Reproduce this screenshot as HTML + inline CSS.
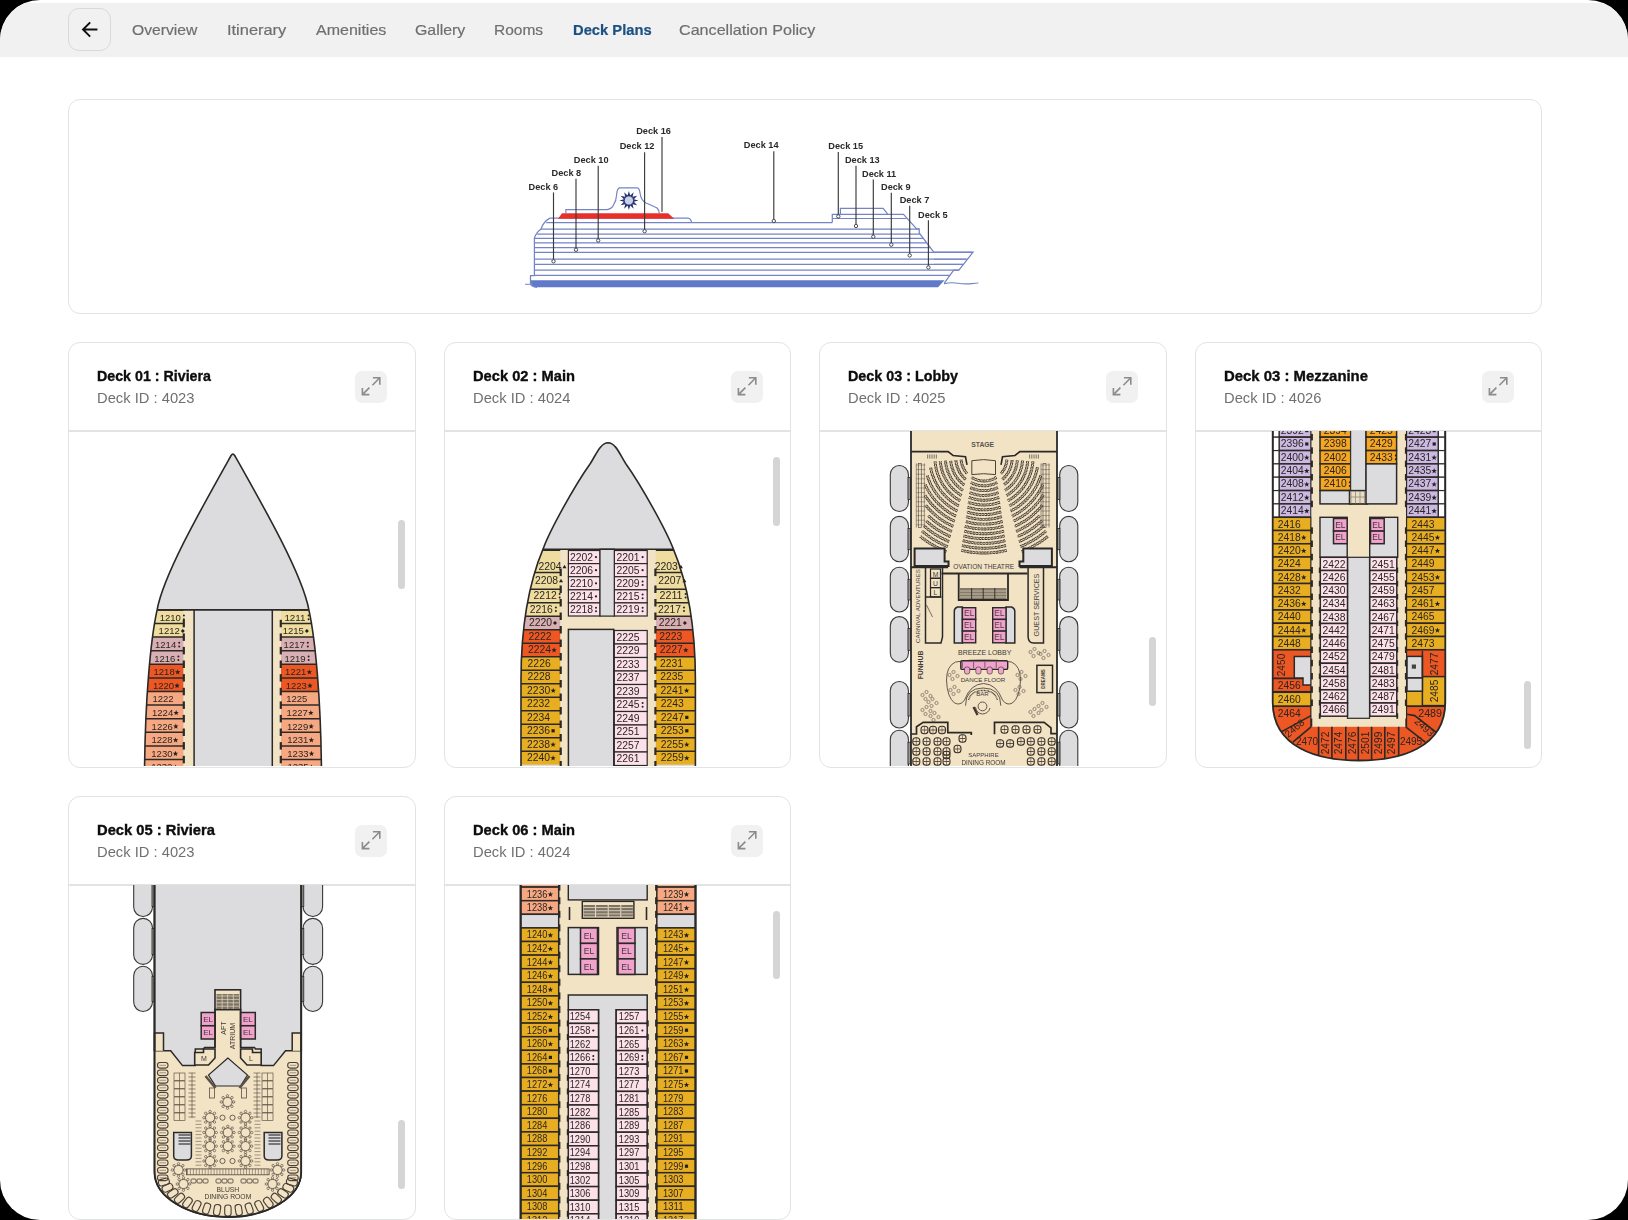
<!DOCTYPE html><html><head><meta charset="utf-8"><style>
html,body{margin:0;padding:0;background:#000;width:1628px;height:1220px;overflow:hidden}
#pg{position:absolute;left:0;top:0;width:1628px;height:1220px;background:#fff;border-radius:40px;overflow:hidden;font-family:"Liberation Sans",sans-serif}
.t{position:absolute;white-space:nowrap;line-height:1;transform-origin:0 0}
.card{position:absolute;box-sizing:border-box;border:1.5px solid #e2e3e3;border-radius:12px;background:#fff;overflow:hidden}
.hdr{position:absolute;left:0;top:0;width:1628px;height:54px;top:3px;background:#f1f1f1}
.btn{position:absolute;box-sizing:border-box;left:68px;top:8px;width:43px;height:43px;border:1.3px solid #d9d9d9;border-radius:11px}
.exp{position:absolute;width:32px;height:32px;border-radius:7px;background:#f1f1f1}
svg{position:absolute;left:0;top:0;font-family:"Liberation Sans",sans-serif}
</style></head><body><div id="pg">

<div class="hdr"></div>
<div class="btn"><svg width="43" height="43" viewBox="0 0 43 43"><path d="M27.5 20.5H14.5M20.5 14L14 20.5L20.5 27" fill="none" stroke="#111" stroke-width="1.9" stroke-linecap="square"/></svg></div>
<div class="t" style="left:132.4px;top:21.6px;font-size:15px;font-weight:400;color:#6f6f6f;transform:scaleX(1.0462);-webkit-text-stroke:0.2px #6f6f6f;">Overview</div>
<div class="t" style="left:226.9px;top:21.6px;font-size:15px;font-weight:400;color:#6f6f6f;transform:scaleX(1.0944);-webkit-text-stroke:0.2px #6f6f6f;">Itinerary</div>
<div class="t" style="left:316.0px;top:21.6px;font-size:15px;font-weight:400;color:#6f6f6f;transform:scaleX(1.0674);-webkit-text-stroke:0.2px #6f6f6f;">Amenities</div>
<div class="t" style="left:415.3px;top:21.6px;font-size:15px;font-weight:400;color:#6f6f6f;transform:scaleX(1.0587);-webkit-text-stroke:0.2px #6f6f6f;">Gallery</div>
<div class="t" style="left:494.0px;top:21.6px;font-size:15px;font-weight:400;color:#6f6f6f;transform:scaleX(1.0313);-webkit-text-stroke:0.2px #6f6f6f;">Rooms</div>
<div class="t" style="left:572.7px;top:21.6px;font-size:15px;font-weight:700;color:#1b5083;transform:scaleX(0.9832);-webkit-text-stroke:0.2px #1b5083;">Deck Plans</div>
<div class="t" style="left:678.5px;top:21.6px;font-size:15px;font-weight:400;color:#6f6f6f;transform:scaleX(1.0747);-webkit-text-stroke:0.2px #6f6f6f;">Cancellation Policy</div>
<div class="card" style="left:68px;top:99px;width:1474px;height:215px"></div>
<svg style="left:500px;top:110px;filter:blur(0.35px)" width="500" height="190" viewBox="500 110 500 190"><path d="M531 280.2H944.5L938 287.3H537Q531.5 287.3 531 283Z" fill="#6079c8"/>
<path d="M525 284.3H531" fill="none" stroke="#7584c4" stroke-width="1"/>
<path d="M944 283.6Q952 282 958 283.2T972 283.6T977 283" fill="none" stroke="#7584c4" stroke-width="1.1"/>
<line x1="546.2" y1="222.6" x2="832.3" y2="222.6" stroke="#7584c4" stroke-width="1.25"/>
<line x1="540.9" y1="229.2" x2="919.2" y2="229.2" stroke="#7584c4" stroke-width="1.25"/>
<line x1="537.2" y1="234.2" x2="920.1" y2="234.2" stroke="#7584c4" stroke-width="1.25"/>
<line x1="534.4" y1="238.3" x2="923.2" y2="238.3" stroke="#7584c4" stroke-width="1.25"/>
<line x1="534.4" y1="242.9" x2="926.7" y2="242.9" stroke="#7584c4" stroke-width="1.25"/>
<line x1="534.4" y1="247.6" x2="930.3" y2="247.6" stroke="#7584c4" stroke-width="1.25"/>
<line x1="534.4" y1="252.4" x2="972.8" y2="252.4" stroke="#7584c4" stroke-width="1.25"/>
<line x1="534.4" y1="259.2" x2="967.5" y2="259.2" stroke="#7584c4" stroke-width="1.25"/>
<line x1="534.4" y1="264.4" x2="963.4" y2="264.4" stroke="#7584c4" stroke-width="1.25"/>
<line x1="534.4" y1="270.2" x2="958.9" y2="270.2" stroke="#7584c4" stroke-width="1.25"/>
<line x1="534.4" y1="275.3" x2="950" y2="275.3" stroke="#7584c4" stroke-width="1.25"/>
<line x1="549.9" y1="218.1" x2="688" y2="218.1" stroke="#7584c4" stroke-width="1.2"/>
<path d="M688 218.1Q690.5 218.3 691.8 222.6" fill="none" stroke="#7584c4" stroke-width="1.2"/>
<path d="M832.3 222.6V214.3H903.5L916.6 228.9H919.2V233L933.8 252.2H973L958.9 270.2H953.7L944.3 283.2" fill="none" stroke="#7584c4" stroke-width="1.25"/>
<line x1="832.3" y1="218.5" x2="906.5" y2="218.5" stroke="#7584c4" stroke-width="1.1"/>
<path d="M840.4 214.3V208.4H883.2L887.9 214.3" fill="none" stroke="#7584c4" stroke-width="1.2"/>
<line x1="919.2" y1="229.1" x2="919.2" y2="229.1" stroke="#7584c4" stroke-width="1.2"/>
<line x1="933.8" y1="259.2" x2="966.2" y2="259.2" stroke="#7584c4" stroke-width="1.1"/>
<line x1="933.8" y1="264.4" x2="963" y2="264.4" stroke="#7584c4" stroke-width="1.1"/>
<path d="M549.9 218.1Q543 222 541 229Q536 233 534.4 238V275.5H530.5V283.5Q531 287 537 287.3" fill="none" stroke="#7584c4" stroke-width="1.25"/>
<path d="M562 213.2H668.2L674.2 218.7H558.1Z" fill="#e8302a"/>
<path d="M565.9 213.2V209.6H607.3Q612 208.5 613.5 205Q616.2 201 616.6 195Q617 188.5 619.5 187.8H637.2Q639.5 188 640 193Q641 200.5 646 203Q652 205.5 657.1 208Q659 210 659.2 213" fill="none" stroke="#7584c4" stroke-width="1.2"/>
<path d="M628.90 191.00L630.25 195.48L633.65 192.27L632.58 196.82L637.13 195.75L633.92 199.15L638.40 200.50L633.92 201.85L637.13 205.25L632.58 204.18L633.65 208.73L630.25 205.52L628.90 210.00L627.55 205.52L624.15 208.73L625.22 204.18L620.67 205.25L623.88 201.85L619.40 200.50L623.88 199.15L620.67 195.75L625.22 196.82L624.15 192.27L627.55 195.48Z" fill="#24336e"/>
<circle cx="628.9" cy="200.5" r="4.6" fill="#c9d0ea" stroke="#24336e" stroke-width="0.8"/>
<text x="528.6" y="189.6" font-size="9.2" font-weight="700" fill="#2a2a2a">Deck 6</text>
<line x1="553.5" y1="192.4" x2="553.5" y2="259.7" stroke="#3a3a3a" stroke-width="1.15"/>
<circle cx="553.5" cy="261.3" r="1.7" fill="#fff" stroke="#3a3a3a" stroke-width="0.9"/>
<text x="551.6" y="176" font-size="9.2" font-weight="700" fill="#2a2a2a">Deck 8</text>
<line x1="576" y1="178.8" x2="576" y2="248.2" stroke="#3a3a3a" stroke-width="1.15"/>
<circle cx="576" cy="249.8" r="1.7" fill="#fff" stroke="#3a3a3a" stroke-width="0.9"/>
<text x="573.8" y="163" font-size="9.2" font-weight="700" fill="#2a2a2a">Deck 10</text>
<line x1="598.2" y1="165.8" x2="598.2" y2="238.9" stroke="#3a3a3a" stroke-width="1.15"/>
<circle cx="598.2" cy="240.5" r="1.7" fill="#fff" stroke="#3a3a3a" stroke-width="0.9"/>
<text x="619.7" y="149.4" font-size="9.2" font-weight="700" fill="#2a2a2a">Deck 12</text>
<line x1="644.6" y1="152.2" x2="644.6" y2="229.6" stroke="#3a3a3a" stroke-width="1.15"/>
<circle cx="644.6" cy="231.2" r="1.7" fill="#fff" stroke="#3a3a3a" stroke-width="0.9"/>
<text x="636.2" y="134.3" font-size="9.2" font-weight="700" fill="#2a2a2a">Deck 16</text>
<line x1="662" y1="137.1" x2="662" y2="211.8" stroke="#3a3a3a" stroke-width="1.15"/>
<text x="743.8" y="148.4" font-size="9.2" font-weight="700" fill="#2a2a2a">Deck 14</text>
<line x1="773.8" y1="151.2" x2="773.8" y2="219.4" stroke="#3a3a3a" stroke-width="1.15"/>
<circle cx="773.8" cy="221" r="1.7" fill="#fff" stroke="#3a3a3a" stroke-width="0.9"/>
<text x="828.3" y="149.2" font-size="9.2" font-weight="700" fill="#2a2a2a">Deck 15</text>
<line x1="838.3" y1="152" x2="838.3" y2="214.8" stroke="#3a3a3a" stroke-width="1.15"/>
<circle cx="838.3" cy="216.4" r="1.7" fill="#fff" stroke="#3a3a3a" stroke-width="0.9"/>
<text x="844.9" y="163" font-size="9.2" font-weight="700" fill="#2a2a2a">Deck 13</text>
<line x1="856" y1="165.8" x2="856" y2="224.4" stroke="#3a3a3a" stroke-width="1.15"/>
<circle cx="856" cy="226" r="1.7" fill="#fff" stroke="#3a3a3a" stroke-width="0.9"/>
<text x="862" y="176.8" font-size="9.2" font-weight="700" fill="#2a2a2a">Deck 11</text>
<line x1="873.3" y1="179.6" x2="873.3" y2="235.1" stroke="#3a3a3a" stroke-width="1.15"/>
<circle cx="873.3" cy="236.7" r="1.7" fill="#fff" stroke="#3a3a3a" stroke-width="0.9"/>
<text x="881" y="189.9" font-size="9.2" font-weight="700" fill="#2a2a2a">Deck 9</text>
<line x1="891.3" y1="192.7" x2="891.3" y2="243.1" stroke="#3a3a3a" stroke-width="1.15"/>
<circle cx="891.3" cy="244.7" r="1.7" fill="#fff" stroke="#3a3a3a" stroke-width="0.9"/>
<text x="899.7" y="203" font-size="9.2" font-weight="700" fill="#2a2a2a">Deck 7</text>
<line x1="909.7" y1="205.8" x2="909.7" y2="253.8" stroke="#3a3a3a" stroke-width="1.15"/>
<circle cx="909.7" cy="255.4" r="1.7" fill="#fff" stroke="#3a3a3a" stroke-width="0.9"/>
<text x="918.1" y="217.5" font-size="9.2" font-weight="700" fill="#2a2a2a">Deck 5</text>
<line x1="928.4" y1="220.3" x2="928.4" y2="265.8" stroke="#3a3a3a" stroke-width="1.15"/>
<circle cx="928.4" cy="267.4" r="1.7" fill="#fff" stroke="#3a3a3a" stroke-width="0.9"/></svg>
<div class="card" style="left:68px;top:342px;width:347.5px;height:425.5px"><div style="position:absolute;left:0;right:0;top:87px;height:1.5px;background:#e2e3e3"></div></div>
<div class="t" style="left:97.2px;top:367.7px;font-size:15px;font-weight:700;color:#0d0d0d;transform:scaleX(0.9494);-webkit-text-stroke:0.35px #0d0d0d;">Deck 01 : Riviera</div>
<div class="t" style="left:97.2px;top:390.0px;font-size:15px;font-weight:400;color:#707070;transform:scaleX(0.9827);">Deck ID : 4023</div>
<div style="position:absolute;left:69.5px;top:431px;width:344.5px;height:335.0px;overflow:hidden;border-radius:0 0 10.5px 10.5px"><svg width="344.5" height="335.0" viewBox="69.5 431 344.5 335.0" style="filter:blur(0.3px)"><defs><clipPath id="h1"><path d="M144 775C144.5 700 150 640 156.6 609.9C163 575 200 510 230.6 455.5Q232.4 452.8 234.2 455.5C265 510 302 575 308.4 609.9C315 640 320.5 700 321 775Z"/></clipPath></defs>
<path d="M144 775C144.5 700 150 640 156.6 609.9C163 575 200 510 230.6 455.5Q232.4 452.8 234.2 455.5C265 510 302 575 308.4 609.9C315 640 320.5 700 321 775Z" fill="#dcdcdf"/>
<g clip-path="url(#h1)">
<rect x="130" y="609.9" width="53.1" height="13.6" fill="#eedd9e"/>
<rect x="280.5" y="609.9" width="50" height="13.6" fill="#eedd9e"/>
<line x1="130" y1="609.9" x2="183.1" y2="609.9" stroke="#2b2927" stroke-width="1.5"/>
<line x1="280.5" y1="609.9" x2="335" y2="609.9" stroke="#2b2927" stroke-width="1.5"/>
<rect x="130" y="623.5" width="53.1" height="13.6" fill="#eedd9e"/>
<rect x="280.5" y="623.5" width="50" height="13.6" fill="#eedd9e"/>
<line x1="130" y1="623.5" x2="183.1" y2="623.5" stroke="#2b2927" stroke-width="1.5"/>
<line x1="280.5" y1="623.5" x2="335" y2="623.5" stroke="#2b2927" stroke-width="1.5"/>
<rect x="130" y="637.1" width="53.1" height="13.6" fill="#d8afb2"/>
<rect x="280.5" y="637.1" width="50" height="13.6" fill="#d8afb2"/>
<line x1="130" y1="637.1" x2="183.1" y2="637.1" stroke="#2b2927" stroke-width="1.5"/>
<line x1="280.5" y1="637.1" x2="335" y2="637.1" stroke="#2b2927" stroke-width="1.5"/>
<rect x="130" y="650.7" width="53.1" height="13.6" fill="#d8afb2"/>
<rect x="280.5" y="650.7" width="50" height="13.6" fill="#d8afb2"/>
<line x1="130" y1="650.7" x2="183.1" y2="650.7" stroke="#2b2927" stroke-width="1.5"/>
<line x1="280.5" y1="650.7" x2="335" y2="650.7" stroke="#2b2927" stroke-width="1.5"/>
<rect x="130" y="664.3" width="53.1" height="13.6" fill="#ec5723"/>
<rect x="280.5" y="664.3" width="50" height="13.6" fill="#ec5723"/>
<line x1="130" y1="664.3" x2="183.1" y2="664.3" stroke="#2b2927" stroke-width="1.5"/>
<line x1="280.5" y1="664.3" x2="335" y2="664.3" stroke="#2b2927" stroke-width="1.5"/>
<rect x="130" y="677.9" width="53.1" height="13.6" fill="#ec5723"/>
<rect x="280.5" y="677.9" width="50" height="13.6" fill="#ec5723"/>
<line x1="130" y1="677.9" x2="183.1" y2="677.9" stroke="#2b2927" stroke-width="1.5"/>
<line x1="280.5" y1="677.9" x2="335" y2="677.9" stroke="#2b2927" stroke-width="1.5"/>
<rect x="130" y="691.5" width="53.1" height="13.6" fill="#f6a882"/>
<rect x="280.5" y="691.5" width="50" height="13.6" fill="#f6a882"/>
<line x1="130" y1="691.5" x2="183.1" y2="691.5" stroke="#2b2927" stroke-width="1.5"/>
<line x1="280.5" y1="691.5" x2="335" y2="691.5" stroke="#2b2927" stroke-width="1.5"/>
<rect x="130" y="705.1" width="53.1" height="13.6" fill="#f6a882"/>
<rect x="280.5" y="705.1" width="50" height="13.6" fill="#f6a882"/>
<line x1="130" y1="705.1" x2="183.1" y2="705.1" stroke="#2b2927" stroke-width="1.5"/>
<line x1="280.5" y1="705.1" x2="335" y2="705.1" stroke="#2b2927" stroke-width="1.5"/>
<rect x="130" y="718.7" width="53.1" height="13.6" fill="#f6a882"/>
<rect x="280.5" y="718.7" width="50" height="13.6" fill="#f6a882"/>
<line x1="130" y1="718.7" x2="183.1" y2="718.7" stroke="#2b2927" stroke-width="1.5"/>
<line x1="280.5" y1="718.7" x2="335" y2="718.7" stroke="#2b2927" stroke-width="1.5"/>
<rect x="130" y="732.3" width="53.1" height="13.6" fill="#f6a882"/>
<rect x="280.5" y="732.3" width="50" height="13.6" fill="#f6a882"/>
<line x1="130" y1="732.3" x2="183.1" y2="732.3" stroke="#2b2927" stroke-width="1.5"/>
<line x1="280.5" y1="732.3" x2="335" y2="732.3" stroke="#2b2927" stroke-width="1.5"/>
<rect x="130" y="745.9" width="53.1" height="13.6" fill="#f6a882"/>
<rect x="280.5" y="745.9" width="50" height="13.6" fill="#f6a882"/>
<line x1="130" y1="745.9" x2="183.1" y2="745.9" stroke="#2b2927" stroke-width="1.5"/>
<line x1="280.5" y1="745.9" x2="335" y2="745.9" stroke="#2b2927" stroke-width="1.5"/>
<rect x="130" y="759.5" width="53.1" height="13.6" fill="#f6a882"/>
<rect x="280.5" y="759.5" width="50" height="13.6" fill="#f6a882"/>
<line x1="130" y1="759.5" x2="183.1" y2="759.5" stroke="#2b2927" stroke-width="1.5"/>
<line x1="280.5" y1="759.5" x2="335" y2="759.5" stroke="#2b2927" stroke-width="1.5"/>
<rect x="183.1" y="609.9" width="10.4" height="200" fill="#f2e3c5"/>
<rect x="272" y="609.9" width="8.5" height="200" fill="#f2e3c5"/>
<line x1="193.6" y1="609.9" x2="193.6" y2="800" stroke="#2b2927" stroke-width="1.5"/>
<line x1="271.8" y1="609.9" x2="271.8" y2="800" stroke="#2b2927" stroke-width="1.5"/>
<rect x="182.2" y="619.8" width="2.2" height="7.5" fill="#2b2927"/>
<rect x="182.2" y="633.4" width="2.2" height="7.5" fill="#2b2927"/>
<rect x="182.2" y="646.9" width="2.2" height="7.5" fill="#2b2927"/>
<rect x="182.2" y="660.5" width="2.2" height="7.5" fill="#2b2927"/>
<rect x="182.2" y="674.1" width="2.2" height="7.5" fill="#2b2927"/>
<rect x="182.2" y="687.8" width="2.2" height="7.5" fill="#2b2927"/>
<rect x="182.2" y="701.4" width="2.2" height="7.5" fill="#2b2927"/>
<rect x="182.2" y="714.9" width="2.2" height="7.5" fill="#2b2927"/>
<rect x="182.2" y="728.5" width="2.2" height="7.5" fill="#2b2927"/>
<rect x="182.2" y="742.1" width="2.2" height="7.5" fill="#2b2927"/>
<rect x="182.2" y="755.8" width="2.2" height="7.5" fill="#2b2927"/>
<rect x="182.2" y="769.3" width="2.2" height="7.5" fill="#2b2927"/>
<rect x="279.2" y="619.8" width="2.2" height="7.5" fill="#2b2927"/>
<rect x="279.2" y="633.4" width="2.2" height="7.5" fill="#2b2927"/>
<rect x="279.2" y="646.9" width="2.2" height="7.5" fill="#2b2927"/>
<rect x="279.2" y="660.5" width="2.2" height="7.5" fill="#2b2927"/>
<rect x="279.2" y="674.1" width="2.2" height="7.5" fill="#2b2927"/>
<rect x="279.2" y="687.8" width="2.2" height="7.5" fill="#2b2927"/>
<rect x="279.2" y="701.4" width="2.2" height="7.5" fill="#2b2927"/>
<rect x="279.2" y="714.9" width="2.2" height="7.5" fill="#2b2927"/>
<rect x="279.2" y="728.5" width="2.2" height="7.5" fill="#2b2927"/>
<rect x="279.2" y="742.1" width="2.2" height="7.5" fill="#2b2927"/>
<rect x="279.2" y="755.8" width="2.2" height="7.5" fill="#2b2927"/>
<rect x="279.2" y="769.3" width="2.2" height="7.5" fill="#2b2927"/>
</g>
<text x="159.2" y="620.8" font-size="9.3" fill="#2b2522" textLength="21.2" lengthAdjust="spacingAndGlyphs">1210</text>
<circle cx="183.4" cy="615.6" r="1" fill="#222"/><circle cx="183.4" cy="619.2" r="1" fill="#222"/>
<text x="283.9" y="620.8" font-size="9.3" fill="#2b2522" textLength="21.2" lengthAdjust="spacingAndGlyphs">1211</text>
<circle cx="308.1" cy="615.6" r="1" fill="#222"/><circle cx="308.1" cy="619.2" r="1" fill="#222"/>
<text x="158.1" y="634.4" font-size="9.3" fill="#2b2522" textLength="21.2" lengthAdjust="spacingAndGlyphs">1212</text>
<path d="M182.3 629L184.3 631L182.3 633L180.3 631Z" fill="#222"/>
<text x="282.2" y="634.4" font-size="9.3" fill="#2b2522" textLength="21.2" lengthAdjust="spacingAndGlyphs">1215</text>
<path d="M306.4 629L308.4 631L306.4 633L304.4 631Z" fill="#222"/>
<text x="154.5" y="648.0" font-size="9.3" fill="#2b2522" textLength="21.2" lengthAdjust="spacingAndGlyphs">1214</text>
<circle cx="178.7" cy="642.8" r="1" fill="#222"/><circle cx="178.7" cy="646.4" r="1" fill="#222"/>
<text x="283.1" y="648.0" font-size="9.3" fill="#2b2522" textLength="21.2" lengthAdjust="spacingAndGlyphs">1217</text>
<circle cx="307.3" cy="642.8" r="1" fill="#222"/><circle cx="307.3" cy="646.4" r="1" fill="#222"/>
<text x="153.7" y="661.6" font-size="9.3" fill="#2b2522" textLength="21.2" lengthAdjust="spacingAndGlyphs">1216</text>
<circle cx="177.9" cy="656.4" r="1" fill="#222"/><circle cx="177.9" cy="660" r="1" fill="#222"/>
<text x="283.9" y="661.6" font-size="9.3" fill="#2b2522" textLength="21.2" lengthAdjust="spacingAndGlyphs">1219</text>
<circle cx="308.1" cy="656.4" r="1" fill="#222"/><circle cx="308.1" cy="660" r="1" fill="#222"/>
<text x="153.0" y="675.2" font-size="9.3" fill="#2b2522" textLength="21.2" lengthAdjust="spacingAndGlyphs">1218</text>
<path d="M177.16 669.20L177.87 671.13L179.92 671.20L178.31 672.47L178.87 674.45L177.16 673.30L175.46 674.45L176.02 672.47L174.41 671.20L176.46 671.13Z" fill="#222"/>
<text x="284.6" y="675.2" font-size="9.3" fill="#2b2522" textLength="21.2" lengthAdjust="spacingAndGlyphs">1221</text>
<path d="M308.84 669.20L309.54 671.13L311.59 671.20L309.98 672.47L310.54 674.45L308.84 673.30L307.13 674.45L307.69 672.47L306.08 671.20L308.13 671.13Z" fill="#222"/>
<text x="152.4" y="688.8" font-size="9.3" fill="#2b2522" textLength="21.2" lengthAdjust="spacingAndGlyphs">1220</text>
<path d="M176.56 682.80L177.27 684.73L179.32 684.80L177.70 686.07L178.27 688.05L176.56 686.90L174.86 688.05L175.42 686.07L173.80 684.80L175.86 684.73Z" fill="#222"/>
<text x="285.2" y="688.8" font-size="9.3" fill="#2b2522" textLength="21.2" lengthAdjust="spacingAndGlyphs">1223</text>
<path d="M309.44 682.80L310.14 684.73L312.20 684.80L310.58 686.07L311.14 688.05L309.44 686.90L307.73 688.05L308.30 686.07L306.68 684.80L308.73 684.73Z" fill="#222"/>
<text x="151.9" y="702.4" font-size="9.3" fill="#2b2522" textLength="21.2" lengthAdjust="spacingAndGlyphs">1222</text>
<text x="285.7" y="702.4" font-size="9.3" fill="#2b2522" textLength="21.2" lengthAdjust="spacingAndGlyphs">1225</text>
<text x="151.5" y="716.0" font-size="9.3" fill="#2b2522" textLength="21.2" lengthAdjust="spacingAndGlyphs">1224</text>
<path d="M175.65 710.00L176.36 711.93L178.41 712.00L176.80 713.27L177.36 715.25L175.65 714.10L173.95 715.25L174.51 713.27L172.90 712.00L174.95 711.93Z" fill="#222"/>
<text x="286.1" y="716.0" font-size="9.3" fill="#2b2522" textLength="21.2" lengthAdjust="spacingAndGlyphs">1227</text>
<path d="M310.35 710.00L311.05 711.93L313.10 712.00L311.49 713.27L312.05 715.25L310.35 714.10L308.64 715.25L309.20 713.27L307.59 712.00L309.64 711.93Z" fill="#222"/>
<text x="151.1" y="729.6" font-size="9.3" fill="#2b2522" textLength="21.2" lengthAdjust="spacingAndGlyphs">1226</text>
<path d="M175.34 723.60L176.05 725.53L178.10 725.60L176.48 726.87L177.05 728.85L175.34 727.70L173.64 728.85L174.20 726.87L172.58 725.60L174.64 725.53Z" fill="#222"/>
<text x="286.5" y="729.6" font-size="9.3" fill="#2b2522" textLength="21.2" lengthAdjust="spacingAndGlyphs">1229</text>
<path d="M310.66 723.60L311.36 725.53L313.42 725.60L311.80 726.87L312.36 728.85L310.66 727.70L308.95 728.85L309.52 726.87L307.90 725.60L309.95 725.53Z" fill="#222"/>
<text x="150.9" y="743.2" font-size="9.3" fill="#2b2522" textLength="21.2" lengthAdjust="spacingAndGlyphs">1228</text>
<path d="M175.12 737.20L175.82 739.13L177.87 739.20L176.26 740.47L176.82 742.45L175.12 741.30L173.41 742.45L173.98 740.47L172.36 739.20L174.41 739.13Z" fill="#222"/>
<text x="286.7" y="743.2" font-size="9.3" fill="#2b2522" textLength="21.2" lengthAdjust="spacingAndGlyphs">1231</text>
<path d="M310.88 737.20L311.59 739.13L313.64 739.20L312.02 740.47L312.59 742.45L310.88 741.30L309.18 742.45L309.74 740.47L308.13 739.20L310.18 739.13Z" fill="#222"/>
<text x="150.8" y="756.8" font-size="9.3" fill="#2b2522" textLength="21.2" lengthAdjust="spacingAndGlyphs">1230</text>
<path d="M174.98 750.80L175.68 752.73L177.73 752.80L176.12 754.07L176.68 756.05L174.98 754.90L173.27 756.05L173.83 754.07L172.22 752.80L174.27 752.73Z" fill="#222"/>
<text x="286.8" y="756.8" font-size="9.3" fill="#2b2522" textLength="21.2" lengthAdjust="spacingAndGlyphs">1233</text>
<path d="M311.02 750.80L311.73 752.73L313.78 752.80L312.17 754.07L312.73 756.05L311.02 754.90L309.32 756.05L309.88 754.07L308.27 752.80L310.32 752.73Z" fill="#222"/>
<text x="150.7" y="770.4" font-size="9.3" fill="#2b2522" textLength="21.2" lengthAdjust="spacingAndGlyphs">1232</text>
<path d="M174.91 764.40L175.61 766.33L177.67 766.40L176.05 767.67L176.61 769.65L174.91 768.50L173.20 769.65L173.77 767.67L172.15 766.40L174.20 766.33Z" fill="#222"/>
<text x="286.9" y="770.4" font-size="9.3" fill="#2b2522" textLength="21.2" lengthAdjust="spacingAndGlyphs">1235</text>
<path d="M311.09 764.40L311.80 766.33L313.85 766.40L312.23 767.67L312.80 769.65L311.09 768.50L309.39 769.65L309.95 767.67L308.33 766.40L310.39 766.33Z" fill="#222"/>
<line x1="156.6" y1="609.9" x2="308.4" y2="609.9" stroke="#2b2927" stroke-width="1.6"/>
<path d="M144 775C144.5 700 150 640 156.6 609.9C163 575 200 510 230.6 455.5Q232.4 452.8 234.2 455.5C265 510 302 575 308.4 609.9C315 640 320.5 700 321 775Z" fill="none" stroke="#2b2927" stroke-width="1.6"/></svg></div>
<div class="exp" style="left:355px;top:371px"><svg width="32" height="32" viewBox="0 0 32 32"><path d="M17.9 6.8H24.8V13.7M24.8 6.8L17.4 14.2M7.4 17.1V23.6H14.4M7.4 23.6L14.4 16.6" fill="none" stroke="#8c8c8c" stroke-width="1.6"/></svg></div>
<div class="card" style="left:443.5px;top:342px;width:347.5px;height:425.5px"><div style="position:absolute;left:0;right:0;top:87px;height:1.5px;background:#e2e3e3"></div></div>
<div class="t" style="left:472.7px;top:367.7px;font-size:15px;font-weight:700;color:#0d0d0d;transform:scaleX(0.9788);-webkit-text-stroke:0.35px #0d0d0d;">Deck 02 : Main</div>
<div class="t" style="left:472.7px;top:390.0px;font-size:15px;font-weight:400;color:#707070;transform:scaleX(0.9827);">Deck ID : 4024</div>
<div style="position:absolute;left:445.0px;top:431px;width:344.5px;height:335.0px;overflow:hidden;border-radius:0 0 10.5px 10.5px"><svg width="344.5" height="335.0" viewBox="445.0 431 344.5 335.0" style="filter:blur(0.3px)"><defs><clipPath id="h2"><path d="M521 775V680C521 620 530 580 543.3 548.4C550 530 575 485 590 464C596 455 600 443 608.1 442.8C616 443 620 455 626 464C641 485 666 530 673.1 548.4C686.4 580 695.4 620 695.4 680V775Z"/></clipPath></defs>
<path d="M521 775V680C521 620 530 580 543.3 548.4C550 530 575 485 590 464C596 455 600 443 608.1 442.8C616 443 620 455 626 464C641 485 666 530 673.1 548.4C686.4 580 695.4 620 695.4 680V775Z" fill="#dcdcdf"/>
<g clip-path="url(#h2)">
<rect x="500" y="550.3" width="60.5" height="22.1" fill="#eedd9e"/>
<rect x="655.6" y="550.3" width="60" height="22.1" fill="#eedd9e"/>
<line x1="500" y1="550.3" x2="560.5" y2="550.3" stroke="#2b2927" stroke-width="1.5"/>
<line x1="655.6" y1="550.3" x2="720" y2="550.3" stroke="#2b2927" stroke-width="1.5"/>
<rect x="500" y="572.4" width="60.5" height="16.8" fill="#eedd9e"/>
<rect x="655.6" y="572.4" width="60" height="16.8" fill="#eedd9e"/>
<line x1="500" y1="572.4" x2="560.5" y2="572.4" stroke="#2b2927" stroke-width="1.5"/>
<line x1="655.6" y1="572.4" x2="720" y2="572.4" stroke="#2b2927" stroke-width="1.5"/>
<rect x="500" y="589.2" width="60.5" height="13.5" fill="#eedd9e"/>
<rect x="655.6" y="589.2" width="60" height="13.5" fill="#eedd9e"/>
<line x1="500" y1="589.2" x2="560.5" y2="589.2" stroke="#2b2927" stroke-width="1.5"/>
<line x1="655.6" y1="589.2" x2="720" y2="589.2" stroke="#2b2927" stroke-width="1.5"/>
<rect x="500" y="602.7" width="60.5" height="13.5" fill="#eedd9e"/>
<rect x="655.6" y="602.7" width="60" height="13.5" fill="#eedd9e"/>
<line x1="500" y1="602.7" x2="560.5" y2="602.7" stroke="#2b2927" stroke-width="1.5"/>
<line x1="655.6" y1="602.7" x2="720" y2="602.7" stroke="#2b2927" stroke-width="1.5"/>
<rect x="500" y="616.2" width="60.5" height="13.5" fill="#d8afb2"/>
<rect x="655.6" y="616.2" width="60" height="13.5" fill="#d8afb2"/>
<line x1="500" y1="616.2" x2="560.5" y2="616.2" stroke="#2b2927" stroke-width="1.5"/>
<line x1="655.6" y1="616.2" x2="720" y2="616.2" stroke="#2b2927" stroke-width="1.5"/>
<rect x="500" y="629.7" width="60.5" height="13.5" fill="#ec5723"/>
<rect x="655.6" y="629.7" width="60" height="13.5" fill="#ec5723"/>
<line x1="500" y1="629.7" x2="560.5" y2="629.7" stroke="#2b2927" stroke-width="1.5"/>
<line x1="655.6" y1="629.7" x2="720" y2="629.7" stroke="#2b2927" stroke-width="1.5"/>
<rect x="500" y="643.2" width="60.5" height="13.5" fill="#ec5723"/>
<rect x="655.6" y="643.2" width="60" height="13.5" fill="#ec5723"/>
<line x1="500" y1="643.2" x2="560.5" y2="643.2" stroke="#2b2927" stroke-width="1.5"/>
<line x1="655.6" y1="643.2" x2="720" y2="643.2" stroke="#2b2927" stroke-width="1.5"/>
<rect x="500" y="656.7" width="60.5" height="13.5" fill="#e8ae22"/>
<rect x="655.6" y="656.7" width="60" height="13.5" fill="#e8ae22"/>
<line x1="500" y1="656.7" x2="560.5" y2="656.7" stroke="#2b2927" stroke-width="1.5"/>
<line x1="655.6" y1="656.7" x2="720" y2="656.7" stroke="#2b2927" stroke-width="1.5"/>
<rect x="500" y="670.2" width="60.5" height="13.5" fill="#e8ae22"/>
<rect x="655.6" y="670.2" width="60" height="13.5" fill="#e8ae22"/>
<line x1="500" y1="670.2" x2="560.5" y2="670.2" stroke="#2b2927" stroke-width="1.5"/>
<line x1="655.6" y1="670.2" x2="720" y2="670.2" stroke="#2b2927" stroke-width="1.5"/>
<rect x="500" y="683.7" width="60.5" height="13.5" fill="#e8ae22"/>
<rect x="655.6" y="683.7" width="60" height="13.5" fill="#e8ae22"/>
<line x1="500" y1="683.7" x2="560.5" y2="683.7" stroke="#2b2927" stroke-width="1.5"/>
<line x1="655.6" y1="683.7" x2="720" y2="683.7" stroke="#2b2927" stroke-width="1.5"/>
<rect x="500" y="697.2" width="60.5" height="13.5" fill="#e8ae22"/>
<rect x="655.6" y="697.2" width="60" height="13.5" fill="#e8ae22"/>
<line x1="500" y1="697.2" x2="560.5" y2="697.2" stroke="#2b2927" stroke-width="1.5"/>
<line x1="655.6" y1="697.2" x2="720" y2="697.2" stroke="#2b2927" stroke-width="1.5"/>
<rect x="500" y="710.7" width="60.5" height="13.5" fill="#e8ae22"/>
<rect x="655.6" y="710.7" width="60" height="13.5" fill="#e8ae22"/>
<line x1="500" y1="710.7" x2="560.5" y2="710.7" stroke="#2b2927" stroke-width="1.5"/>
<line x1="655.6" y1="710.7" x2="720" y2="710.7" stroke="#2b2927" stroke-width="1.5"/>
<rect x="500" y="724.2" width="60.5" height="13.5" fill="#e8ae22"/>
<rect x="655.6" y="724.2" width="60" height="13.5" fill="#e8ae22"/>
<line x1="500" y1="724.2" x2="560.5" y2="724.2" stroke="#2b2927" stroke-width="1.5"/>
<line x1="655.6" y1="724.2" x2="720" y2="724.2" stroke="#2b2927" stroke-width="1.5"/>
<rect x="500" y="737.7" width="60.5" height="13.5" fill="#e8ae22"/>
<rect x="655.6" y="737.7" width="60" height="13.5" fill="#e8ae22"/>
<line x1="500" y1="737.7" x2="560.5" y2="737.7" stroke="#2b2927" stroke-width="1.5"/>
<line x1="655.6" y1="737.7" x2="720" y2="737.7" stroke="#2b2927" stroke-width="1.5"/>
<rect x="500" y="751.2" width="60.5" height="13.5" fill="#e8ae22"/>
<rect x="655.6" y="751.2" width="60" height="13.5" fill="#e8ae22"/>
<line x1="500" y1="751.2" x2="560.5" y2="751.2" stroke="#2b2927" stroke-width="1.5"/>
<line x1="655.6" y1="751.2" x2="720" y2="751.2" stroke="#2b2927" stroke-width="1.5"/>
<rect x="560.5" y="549.2" width="7.9" height="230" fill="#f2e3c5"/>
<rect x="647.4" y="549.2" width="8.2" height="230" fill="#f2e3c5"/>
<rect x="560.5" y="616.7" width="95" height="12.7" fill="#f2e3c5"/>
<rect x="568.4" y="550.5" width="31.6" height="13.1" fill="#fde1ea" stroke="#2b2927" stroke-width="1.2"/>
<rect x="614.3" y="550.5" width="32.9" height="13.1" fill="#fde1ea" stroke="#2b2927" stroke-width="1.2"/>
<rect x="568.4" y="563.6" width="31.6" height="13.1" fill="#fde1ea" stroke="#2b2927" stroke-width="1.2"/>
<rect x="614.3" y="563.6" width="32.9" height="13.1" fill="#fde1ea" stroke="#2b2927" stroke-width="1.2"/>
<rect x="568.4" y="576.7" width="31.6" height="13.1" fill="#fde1ea" stroke="#2b2927" stroke-width="1.2"/>
<rect x="614.3" y="576.7" width="32.9" height="13.1" fill="#fde1ea" stroke="#2b2927" stroke-width="1.2"/>
<rect x="568.4" y="589.8" width="31.6" height="13.1" fill="#fde1ea" stroke="#2b2927" stroke-width="1.2"/>
<rect x="614.3" y="589.8" width="32.9" height="13.1" fill="#fde1ea" stroke="#2b2927" stroke-width="1.2"/>
<rect x="568.4" y="602.9" width="31.6" height="13.1" fill="#fde1ea" stroke="#2b2927" stroke-width="1.2"/>
<rect x="614.3" y="602.9" width="32.9" height="13.1" fill="#fde1ea" stroke="#2b2927" stroke-width="1.2"/>
<rect x="600" y="549.2" width="14.3" height="66.9" fill="#dcdcdf" stroke="#2b2927" stroke-width="1.2"/>
<rect x="568.4" y="629.4" width="45.4" height="160" fill="#dcdcdf" stroke="#2b2927" stroke-width="1.5"/>
<rect x="614.3" y="630.5" width="32.9" height="13.5" fill="#fde1ea" stroke="#2b2927" stroke-width="1.2"/>
<rect x="614.3" y="644" width="32.9" height="13.5" fill="#fde1ea" stroke="#2b2927" stroke-width="1.2"/>
<rect x="614.3" y="657.5" width="32.9" height="13.5" fill="#fde1ea" stroke="#2b2927" stroke-width="1.2"/>
<rect x="614.3" y="671" width="32.9" height="13.5" fill="#fde1ea" stroke="#2b2927" stroke-width="1.2"/>
<rect x="614.3" y="684.5" width="32.9" height="13.5" fill="#fde1ea" stroke="#2b2927" stroke-width="1.2"/>
<rect x="614.3" y="698" width="32.9" height="13.5" fill="#fde1ea" stroke="#2b2927" stroke-width="1.2"/>
<rect x="614.3" y="711.5" width="32.9" height="13.5" fill="#fde1ea" stroke="#2b2927" stroke-width="1.2"/>
<rect x="614.3" y="725" width="32.9" height="13.5" fill="#fde1ea" stroke="#2b2927" stroke-width="1.2"/>
<rect x="614.3" y="738.5" width="32.9" height="13.5" fill="#fde1ea" stroke="#2b2927" stroke-width="1.2"/>
<rect x="614.3" y="752" width="32.9" height="13.5" fill="#fde1ea" stroke="#2b2927" stroke-width="1.2"/>
<rect x="559.6" y="568.6" width="2.2" height="7.5" fill="#2b2927"/>
<rect x="559.6" y="585.5" width="2.2" height="7.5" fill="#2b2927"/>
<rect x="559.6" y="599" width="2.2" height="7.5" fill="#2b2927"/>
<rect x="559.6" y="612.5" width="2.2" height="7.5" fill="#2b2927"/>
<rect x="559.6" y="626" width="2.2" height="7.5" fill="#2b2927"/>
<rect x="559.6" y="639.5" width="2.2" height="7.5" fill="#2b2927"/>
<rect x="559.6" y="653" width="2.2" height="7.5" fill="#2b2927"/>
<rect x="559.6" y="666.5" width="2.2" height="7.5" fill="#2b2927"/>
<rect x="559.6" y="680" width="2.2" height="7.5" fill="#2b2927"/>
<rect x="559.6" y="693.5" width="2.2" height="7.5" fill="#2b2927"/>
<rect x="559.6" y="707" width="2.2" height="7.5" fill="#2b2927"/>
<rect x="559.6" y="720.5" width="2.2" height="7.5" fill="#2b2927"/>
<rect x="559.6" y="734" width="2.2" height="7.5" fill="#2b2927"/>
<rect x="559.6" y="747.5" width="2.2" height="7.5" fill="#2b2927"/>
<rect x="559.6" y="761" width="2.2" height="7.5" fill="#2b2927"/>
<rect x="654.3" y="568.6" width="2.2" height="7.5" fill="#2b2927"/>
<rect x="654.3" y="585.5" width="2.2" height="7.5" fill="#2b2927"/>
<rect x="654.3" y="599" width="2.2" height="7.5" fill="#2b2927"/>
<rect x="654.3" y="612.5" width="2.2" height="7.5" fill="#2b2927"/>
<rect x="654.3" y="626" width="2.2" height="7.5" fill="#2b2927"/>
<rect x="654.3" y="639.5" width="2.2" height="7.5" fill="#2b2927"/>
<rect x="654.3" y="653" width="2.2" height="7.5" fill="#2b2927"/>
<rect x="654.3" y="666.5" width="2.2" height="7.5" fill="#2b2927"/>
<rect x="654.3" y="680" width="2.2" height="7.5" fill="#2b2927"/>
<rect x="654.3" y="693.5" width="2.2" height="7.5" fill="#2b2927"/>
<rect x="654.3" y="707" width="2.2" height="7.5" fill="#2b2927"/>
<rect x="654.3" y="720.5" width="2.2" height="7.5" fill="#2b2927"/>
<rect x="654.3" y="734" width="2.2" height="7.5" fill="#2b2927"/>
<rect x="654.3" y="747.5" width="2.2" height="7.5" fill="#2b2927"/>
<rect x="654.3" y="761" width="2.2" height="7.5" fill="#2b2927"/>
</g>
<text x="538.4" y="570.1" font-size="10.6" fill="#2b2522" textLength="23.1" lengthAdjust="spacingAndGlyphs">2204</text>
<path d="M564.5 564.7L566.5 568.2L562.5 568.2Z" fill="#222"/>
<text x="654.8" y="570.1" font-size="10.6" fill="#2b2522" textLength="23.1" lengthAdjust="spacingAndGlyphs">2203</text>
<path d="M680.9 564.7L682.9 568.2L678.9 568.2Z" fill="#222"/>
<text x="534.9" y="584.1" font-size="10.6" fill="#2b2522" textLength="23.1" lengthAdjust="spacingAndGlyphs">2208</text>
<path d="M561 578.7L563 582.2L559 582.2Z" fill="#222"/>
<text x="658.3" y="584.1" font-size="10.6" fill="#2b2522" textLength="23.1" lengthAdjust="spacingAndGlyphs">2207</text>
<path d="M684.4 578.7L686.4 582.2L682.4 582.2Z" fill="#222"/>
<text x="533.6" y="599.2" font-size="10.6" fill="#2b2522" textLength="23.1" lengthAdjust="spacingAndGlyphs">2212</text>
<circle cx="559.7" cy="594.1" r="1" fill="#222"/><circle cx="559.7" cy="597.6" r="1" fill="#222"/>
<text x="659.5" y="599.2" font-size="10.6" fill="#2b2522" textLength="23.1" lengthAdjust="spacingAndGlyphs">2211</text>
<circle cx="685.6" cy="594.1" r="1" fill="#222"/><circle cx="685.6" cy="597.6" r="1" fill="#222"/>
<text x="529.8" y="612.8" font-size="10.6" fill="#2b2522" textLength="23.1" lengthAdjust="spacingAndGlyphs">2216</text>
<circle cx="555.9" cy="607.6" r="1" fill="#222"/><circle cx="555.9" cy="611.1" r="1" fill="#222"/>
<text x="657.9" y="612.8" font-size="10.6" fill="#2b2522" textLength="23.1" lengthAdjust="spacingAndGlyphs">2217</text>
<circle cx="684" cy="607.6" r="1" fill="#222"/><circle cx="684" cy="611.1" r="1" fill="#222"/>
<text x="528.9" y="626.2" font-size="10.6" fill="#2b2522" textLength="23.1" lengthAdjust="spacingAndGlyphs">2220</text>
<path d="M555 620.9L557 622.9L555 624.9L553 622.9Z" fill="#222"/>
<text x="658.8" y="626.2" font-size="10.6" fill="#2b2522" textLength="23.1" lengthAdjust="spacingAndGlyphs">2221</text>
<path d="M684.9 620.9L686.9 622.9L684.9 624.9L682.9 622.9Z" fill="#222"/>
<text x="528.4" y="639.8" font-size="10.6" fill="#2b2522" textLength="23.1" lengthAdjust="spacingAndGlyphs">2222</text>
<text x="659.2" y="639.8" font-size="10.6" fill="#2b2522" textLength="23.1" lengthAdjust="spacingAndGlyphs">2223</text>
<text x="528.0" y="653.2" font-size="10.6" fill="#2b2522" textLength="23.1" lengthAdjust="spacingAndGlyphs">2224</text>
<path d="M554.07 647.25L554.77 649.18L556.82 649.25L555.21 650.52L555.77 652.50L554.07 651.35L552.36 652.50L552.93 650.52L551.31 649.25L553.36 649.18Z" fill="#222"/>
<text x="659.7" y="653.2" font-size="10.6" fill="#2b2522" textLength="23.1" lengthAdjust="spacingAndGlyphs">2227</text>
<path d="M685.78 647.25L686.49 649.18L688.54 649.25L686.92 650.52L687.49 652.50L685.78 651.35L684.08 652.50L684.64 650.52L683.03 649.25L685.08 649.18Z" fill="#222"/>
<text x="527.6" y="666.8" font-size="10.6" fill="#2b2522" textLength="23.1" lengthAdjust="spacingAndGlyphs">2226</text>
<text x="660.0" y="666.8" font-size="10.6" fill="#2b2522" textLength="23.1" lengthAdjust="spacingAndGlyphs">2231</text>
<text x="527.4" y="680.2" font-size="10.6" fill="#2b2522" textLength="23.1" lengthAdjust="spacingAndGlyphs">2228</text>
<text x="660.3" y="680.2" font-size="10.6" fill="#2b2522" textLength="23.1" lengthAdjust="spacingAndGlyphs">2235</text>
<text x="527.1" y="693.8" font-size="10.6" fill="#2b2522" textLength="23.1" lengthAdjust="spacingAndGlyphs">2230</text>
<path d="M553.22 687.75L553.93 689.68L555.98 689.75L554.36 691.02L554.93 693.00L553.22 691.85L551.52 693.00L552.08 691.02L550.47 689.75L552.52 689.68Z" fill="#222"/>
<text x="660.5" y="693.8" font-size="10.6" fill="#2b2522" textLength="23.1" lengthAdjust="spacingAndGlyphs">2241</text>
<path d="M686.63 687.75L687.33 689.68L689.38 689.75L687.77 691.02L688.33 693.00L686.63 691.85L684.92 693.00L685.49 691.02L683.87 689.75L685.92 689.68Z" fill="#222"/>
<text x="527.0" y="707.2" font-size="10.6" fill="#2b2522" textLength="23.1" lengthAdjust="spacingAndGlyphs">2232</text>
<text x="660.7" y="707.2" font-size="10.6" fill="#2b2522" textLength="23.1" lengthAdjust="spacingAndGlyphs">2243</text>
<text x="527.0" y="720.8" font-size="10.6" fill="#2b2522" textLength="23.1" lengthAdjust="spacingAndGlyphs">2234</text>
<text x="660.7" y="720.8" font-size="10.6" fill="#2b2522" textLength="23.1" lengthAdjust="spacingAndGlyphs">2247</text>
<rect x="685.2" y="715.8" width="3.2" height="3.2" fill="#222"/>
<text x="527.0" y="734.2" font-size="10.6" fill="#2b2522" textLength="23.1" lengthAdjust="spacingAndGlyphs">2236</text>
<rect x="551.5" y="729.2" width="3.2" height="3.2" fill="#222"/>
<text x="660.7" y="734.2" font-size="10.6" fill="#2b2522" textLength="23.1" lengthAdjust="spacingAndGlyphs">2253</text>
<rect x="685.2" y="729.2" width="3.2" height="3.2" fill="#222"/>
<text x="527.0" y="747.8" font-size="10.6" fill="#2b2522" textLength="23.1" lengthAdjust="spacingAndGlyphs">2238</text>
<path d="M553.08 741.75L553.78 743.68L555.84 743.75L554.22 745.02L554.78 747.00L553.08 745.85L551.37 747.00L551.94 745.02L550.32 743.75L552.37 743.68Z" fill="#222"/>
<text x="660.7" y="747.8" font-size="10.6" fill="#2b2522" textLength="23.1" lengthAdjust="spacingAndGlyphs">2255</text>
<path d="M686.77 741.75L687.48 743.68L689.53 743.75L687.91 745.02L688.48 747.00L686.77 745.85L685.07 747.00L685.63 745.02L684.01 743.75L686.07 743.68Z" fill="#222"/>
<text x="527.0" y="761.2" font-size="10.6" fill="#2b2522" textLength="23.1" lengthAdjust="spacingAndGlyphs">2240</text>
<path d="M553.07 755.25L553.78 757.18L555.83 757.25L554.21 758.52L554.78 760.50L553.07 759.35L551.37 760.50L551.93 758.52L550.31 757.25L552.37 757.18Z" fill="#222"/>
<text x="660.7" y="761.2" font-size="10.6" fill="#2b2522" textLength="23.1" lengthAdjust="spacingAndGlyphs">2259</text>
<path d="M686.78 755.25L687.48 757.18L689.54 757.25L687.92 758.52L688.48 760.50L686.78 759.35L685.07 760.50L685.64 758.52L684.02 757.25L686.07 757.18Z" fill="#222"/>
<text x="569.9" y="560.5" font-size="10.6" fill="#2b2522" textLength="23.1" lengthAdjust="spacingAndGlyphs">2202</text>
<circle cx="596" cy="557.1" r="1.1" fill="#222"/>
<text x="616.5" y="560.5" font-size="10.6" fill="#2b2522" textLength="23.1" lengthAdjust="spacingAndGlyphs">2201</text>
<circle cx="642.6" cy="557.1" r="1.1" fill="#222"/>
<text x="569.9" y="573.6" font-size="10.6" fill="#2b2522" textLength="23.1" lengthAdjust="spacingAndGlyphs">2206</text>
<circle cx="596" cy="570.2" r="1.1" fill="#222"/>
<text x="616.5" y="573.6" font-size="10.6" fill="#2b2522" textLength="23.1" lengthAdjust="spacingAndGlyphs">2205</text>
<circle cx="642.6" cy="570.2" r="1.1" fill="#222"/>
<text x="569.9" y="586.7" font-size="10.6" fill="#2b2522" textLength="23.1" lengthAdjust="spacingAndGlyphs">2210</text>
<circle cx="596" cy="583.3" r="1.1" fill="#222"/>
<text x="616.5" y="586.7" font-size="10.6" fill="#2b2522" textLength="23.1" lengthAdjust="spacingAndGlyphs">2209</text>
<circle cx="642.6" cy="581.5" r="1" fill="#222"/><circle cx="642.6" cy="585.1" r="1" fill="#222"/>
<text x="569.9" y="599.8" font-size="10.6" fill="#2b2522" textLength="23.1" lengthAdjust="spacingAndGlyphs">2214</text>
<circle cx="596" cy="596.4" r="1.1" fill="#222"/>
<text x="616.5" y="599.8" font-size="10.6" fill="#2b2522" textLength="23.1" lengthAdjust="spacingAndGlyphs">2215</text>
<circle cx="642.6" cy="594.6" r="1" fill="#222"/><circle cx="642.6" cy="598.2" r="1" fill="#222"/>
<text x="569.9" y="612.9" font-size="10.6" fill="#2b2522" textLength="23.1" lengthAdjust="spacingAndGlyphs">2218</text>
<circle cx="596" cy="607.7" r="1" fill="#222"/><circle cx="596" cy="611.3" r="1" fill="#222"/>
<text x="616.5" y="612.9" font-size="10.6" fill="#2b2522" textLength="23.1" lengthAdjust="spacingAndGlyphs">2219</text>
<circle cx="642.6" cy="607.7" r="1" fill="#222"/><circle cx="642.6" cy="611.3" r="1" fill="#222"/>
<text x="616.5" y="640.8" font-size="10.6" fill="#2b2522" textLength="23.1" lengthAdjust="spacingAndGlyphs">2225</text>
<text x="616.5" y="654.3" font-size="10.6" fill="#2b2522" textLength="23.1" lengthAdjust="spacingAndGlyphs">2229</text>
<text x="616.5" y="667.8" font-size="10.6" fill="#2b2522" textLength="23.1" lengthAdjust="spacingAndGlyphs">2233</text>
<text x="616.5" y="681.3" font-size="10.6" fill="#2b2522" textLength="23.1" lengthAdjust="spacingAndGlyphs">2237</text>
<text x="616.5" y="694.8" font-size="10.6" fill="#2b2522" textLength="23.1" lengthAdjust="spacingAndGlyphs">2239</text>
<text x="616.5" y="708.3" font-size="10.6" fill="#2b2522" textLength="23.1" lengthAdjust="spacingAndGlyphs">2245</text>
<circle cx="642.6" cy="703.1" r="1" fill="#222"/><circle cx="642.6" cy="706.7" r="1" fill="#222"/>
<text x="616.5" y="721.8" font-size="10.6" fill="#2b2522" textLength="23.1" lengthAdjust="spacingAndGlyphs">2249</text>
<text x="616.5" y="735.3" font-size="10.6" fill="#2b2522" textLength="23.1" lengthAdjust="spacingAndGlyphs">2251</text>
<text x="616.5" y="748.8" font-size="10.6" fill="#2b2522" textLength="23.1" lengthAdjust="spacingAndGlyphs">2257</text>
<text x="616.5" y="762.3" font-size="10.6" fill="#2b2522" textLength="23.1" lengthAdjust="spacingAndGlyphs">2261</text>
<line x1="543.3" y1="549.2" x2="673.1" y2="549.2" stroke="#2b2927" stroke-width="1.6"/>
<path d="M521 775V680C521 620 530 580 543.3 548.4C550 530 575 485 590 464C596 455 600 443 608.1 442.8C616 443 620 455 626 464C641 485 666 530 673.1 548.4C686.4 580 695.4 620 695.4 680V775Z" fill="none" stroke="#2b2927" stroke-width="1.6"/></svg></div>
<div class="exp" style="left:730.5px;top:371px"><svg width="32" height="32" viewBox="0 0 32 32"><path d="M17.9 6.8H24.8V13.7M24.8 6.8L17.4 14.2M7.4 17.1V23.6H14.4M7.4 23.6L14.4 16.6" fill="none" stroke="#8c8c8c" stroke-width="1.6"/></svg></div>
<div class="card" style="left:819px;top:342px;width:347.5px;height:425.5px"><div style="position:absolute;left:0;right:0;top:87px;height:1.5px;background:#e2e3e3"></div></div>
<div class="t" style="left:848.2px;top:367.7px;font-size:15px;font-weight:700;color:#0d0d0d;transform:scaleX(0.9562);-webkit-text-stroke:0.35px #0d0d0d;">Deck 03 : Lobby</div>
<div class="t" style="left:848.2px;top:390.0px;font-size:15px;font-weight:400;color:#707070;transform:scaleX(0.9827);">Deck ID : 4025</div>
<div style="position:absolute;left:820.5px;top:431px;width:344.5px;height:335.0px;overflow:hidden;border-radius:0 0 10.5px 10.5px"><svg width="344.5" height="335.0" viewBox="820.5 431 344.5 335.0" style="filter:blur(0.3px)"><rect x="889.8" y="465.5" width="18.1" height="46" fill="#dcdcdf" stroke="#3b3937" stroke-width="1.1" rx="9.05"/>
<rect x="1059.2" y="465.5" width="18.1" height="46" fill="#dcdcdf" stroke="#3b3937" stroke-width="1.1" rx="9.05"/>
<rect x="907.5" y="477.5" width="2.8" height="22" fill="#9a9896" stroke="#2b2927" stroke-width="0.8"/>
<rect x="1056.6" y="477.5" width="2.8" height="22" fill="#9a9896" stroke="#2b2927" stroke-width="0.8"/>
<rect x="889.8" y="516.4" width="18.1" height="45.3" fill="#dcdcdf" stroke="#3b3937" stroke-width="1.1" rx="9.05"/>
<rect x="1059.2" y="516.4" width="18.1" height="45.3" fill="#dcdcdf" stroke="#3b3937" stroke-width="1.1" rx="9.05"/>
<rect x="907.5" y="528.4" width="2.8" height="21.3" fill="#9a9896" stroke="#2b2927" stroke-width="0.8"/>
<rect x="1056.6" y="528.4" width="2.8" height="21.3" fill="#9a9896" stroke="#2b2927" stroke-width="0.8"/>
<rect x="889.8" y="567.3" width="18.1" height="44.7" fill="#dcdcdf" stroke="#3b3937" stroke-width="1.1" rx="9.05"/>
<rect x="1059.2" y="567.3" width="18.1" height="44.7" fill="#dcdcdf" stroke="#3b3937" stroke-width="1.1" rx="9.05"/>
<rect x="907.5" y="579.3" width="2.8" height="20.7" fill="#9a9896" stroke="#2b2927" stroke-width="0.8"/>
<rect x="1056.6" y="579.3" width="2.8" height="20.7" fill="#9a9896" stroke="#2b2927" stroke-width="0.8"/>
<rect x="889.8" y="616.6" width="18.1" height="45.7" fill="#dcdcdf" stroke="#3b3937" stroke-width="1.1" rx="9.05"/>
<rect x="1059.2" y="616.6" width="18.1" height="45.7" fill="#dcdcdf" stroke="#3b3937" stroke-width="1.1" rx="9.05"/>
<rect x="907.5" y="628.6" width="2.8" height="21.7" fill="#9a9896" stroke="#2b2927" stroke-width="0.8"/>
<rect x="1056.6" y="628.6" width="2.8" height="21.7" fill="#9a9896" stroke="#2b2927" stroke-width="0.8"/>
<rect x="889.8" y="681.5" width="18.1" height="46.5" fill="#dcdcdf" stroke="#3b3937" stroke-width="1.1" rx="9.05"/>
<rect x="1059.2" y="681.5" width="18.1" height="46.5" fill="#dcdcdf" stroke="#3b3937" stroke-width="1.1" rx="9.05"/>
<rect x="907.5" y="693.5" width="2.8" height="22.5" fill="#9a9896" stroke="#2b2927" stroke-width="0.8"/>
<rect x="1056.6" y="693.5" width="2.8" height="22.5" fill="#9a9896" stroke="#2b2927" stroke-width="0.8"/>
<rect x="889.8" y="730.2" width="18.1" height="45.8" fill="#dcdcdf" stroke="#3b3937" stroke-width="1.1" rx="9.05"/>
<rect x="1059.2" y="730.2" width="18.1" height="45.8" fill="#dcdcdf" stroke="#3b3937" stroke-width="1.1" rx="9.05"/>
<rect x="907.5" y="742.2" width="2.8" height="21.8" fill="#9a9896" stroke="#2b2927" stroke-width="0.8"/>
<rect x="1056.6" y="742.2" width="2.8" height="21.8" fill="#9a9896" stroke="#2b2927" stroke-width="0.8"/>
<rect x="910.5" y="431" width="146" height="339" fill="#f2e3c5"/>
<line x1="910.5" y1="431" x2="910.5" y2="770" stroke="#2b2927" stroke-width="1.8"/>
<line x1="1056.5" y1="431" x2="1056.5" y2="770" stroke="#2b2927" stroke-width="1.8"/>
<path d="M910.5 451.6H947.6L952.5 455.5L965 456.8L966.5 464.8" fill="none" stroke="#2b2927" stroke-width="1.6"/>
<path d="M1056.5 451.6H1019.4L1014.5 455.5L1002 456.8L1000.5 464.8" fill="none" stroke="#2b2927" stroke-width="1.6"/>
<text x="982.2" y="446.5" font-size="6.8" fill="#5a5450" text-anchor="middle" font-weight="700">STAGE</text>
<path d="M971.3 460.7Q983.2 458.5 995 460.7V474.6Q983.2 472.8 971.3 474.6Z" fill="none" stroke="#4c4238" stroke-width="1.0"/>
<line x1="927" y1="454.5" x2="927" y2="458.6" stroke="#4c4238" stroke-width="0.6"/>
<line x1="1029" y1="454.5" x2="1029" y2="458.6" stroke="#4c4238" stroke-width="0.6"/>
<line x1="928.8" y1="454.5" x2="928.8" y2="458.6" stroke="#4c4238" stroke-width="0.6"/>
<line x1="1030.8" y1="454.5" x2="1030.8" y2="458.6" stroke="#4c4238" stroke-width="0.6"/>
<line x1="930.6" y1="454.5" x2="930.6" y2="458.6" stroke="#4c4238" stroke-width="0.6"/>
<line x1="1032.6" y1="454.5" x2="1032.6" y2="458.6" stroke="#4c4238" stroke-width="0.6"/>
<line x1="932.4" y1="454.5" x2="932.4" y2="458.6" stroke="#4c4238" stroke-width="0.6"/>
<line x1="1034.4" y1="454.5" x2="1034.4" y2="458.6" stroke="#4c4238" stroke-width="0.6"/>
<line x1="934.2" y1="454.5" x2="934.2" y2="458.6" stroke="#4c4238" stroke-width="0.6"/>
<line x1="1036.2" y1="454.5" x2="1036.2" y2="458.6" stroke="#4c4238" stroke-width="0.6"/>
<line x1="936" y1="454.5" x2="936" y2="458.6" stroke="#4c4238" stroke-width="0.6"/>
<line x1="1038" y1="454.5" x2="1038" y2="458.6" stroke="#4c4238" stroke-width="0.6"/>
<path d="M966.6 473.6A23.0 23.0 0 0 1 960.6 459.6" fill="none" stroke="#40362e" stroke-width="2.9" stroke-dasharray="2.4 0.5"/>
<path d="M966.6 473.6A23.0 23.0 0 0 1 960.6 459.6" fill="none" stroke="#f2e3c5" stroke-width="1.1" stroke-dasharray="1.5 1.4" stroke-dashoffset="-0.45"/>
<path d="M965.2 479.5A28.2 28.2 0 0 1 955.4 460.0" fill="none" stroke="#40362e" stroke-width="2.9" stroke-dasharray="2.4 0.5"/>
<path d="M965.2 479.5A28.2 28.2 0 0 1 955.4 460.0" fill="none" stroke="#f2e3c5" stroke-width="1.1" stroke-dasharray="1.5 1.4" stroke-dashoffset="-0.45"/>
<path d="M963.8 485.0A33.4 33.4 0 0 1 950.2 460.3" fill="none" stroke="#40362e" stroke-width="2.9" stroke-dasharray="2.4 0.5"/>
<path d="M963.8 485.0A33.4 33.4 0 0 1 950.2 460.3" fill="none" stroke="#f2e3c5" stroke-width="1.1" stroke-dasharray="1.5 1.4" stroke-dashoffset="-0.45"/>
<path d="M962.5 490.4A38.6 38.6 0 0 1 945.0 460.7" fill="none" stroke="#40362e" stroke-width="2.9" stroke-dasharray="2.4 0.5"/>
<path d="M962.5 490.4A38.6 38.6 0 0 1 945.0 460.7" fill="none" stroke="#f2e3c5" stroke-width="1.1" stroke-dasharray="1.5 1.4" stroke-dashoffset="-0.45"/>
<path d="M961.1 495.6A43.8 43.8 0 0 1 939.8 461.1" fill="none" stroke="#40362e" stroke-width="2.9" stroke-dasharray="2.4 0.5"/>
<path d="M961.1 495.6A43.8 43.8 0 0 1 939.8 461.1" fill="none" stroke="#f2e3c5" stroke-width="1.1" stroke-dasharray="1.5 1.4" stroke-dashoffset="-0.45"/>
<path d="M959.7 500.8A49.0 49.0 0 0 1 934.6 461.4" fill="none" stroke="#40362e" stroke-width="2.9" stroke-dasharray="2.4 0.5"/>
<path d="M959.7 500.8A49.0 49.0 0 0 1 934.6 461.4" fill="none" stroke="#f2e3c5" stroke-width="1.1" stroke-dasharray="1.5 1.4" stroke-dashoffset="-0.45"/>
<path d="M958.3 506.0A54.2 54.2 0 0 1 930.1 467.3" fill="none" stroke="#40362e" stroke-width="2.9" stroke-dasharray="2.4 0.5"/>
<path d="M958.3 506.0A54.2 54.2 0 0 1 930.1 467.3" fill="none" stroke="#f2e3c5" stroke-width="1.1" stroke-dasharray="1.5 1.4" stroke-dashoffset="-0.45"/>
<path d="M956.9 511.1A59.4 59.4 0 0 1 926.7 475.5" fill="none" stroke="#40362e" stroke-width="2.9" stroke-dasharray="2.4 0.5"/>
<path d="M956.9 511.1A59.4 59.4 0 0 1 926.7 475.5" fill="none" stroke="#f2e3c5" stroke-width="1.1" stroke-dasharray="1.5 1.4" stroke-dashoffset="-0.45"/>
<path d="M955.5 516.2A64.6 64.6 0 0 1 924.7 484.7" fill="none" stroke="#40362e" stroke-width="2.9" stroke-dasharray="2.4 0.5"/>
<path d="M955.5 516.2A64.6 64.6 0 0 1 924.7 484.7" fill="none" stroke="#f2e3c5" stroke-width="1.1" stroke-dasharray="1.5 1.4" stroke-dashoffset="-0.45"/>
<path d="M954.2 521.3A69.8 69.8 0 0 1 924.1 494.7" fill="none" stroke="#40362e" stroke-width="2.9" stroke-dasharray="2.4 0.5"/>
<path d="M954.2 521.3A69.8 69.8 0 0 1 924.1 494.7" fill="none" stroke="#f2e3c5" stroke-width="1.1" stroke-dasharray="1.5 1.4" stroke-dashoffset="-0.45"/>
<path d="M952.8 526.4A75.0 75.0 0 0 1 925.2 505.2" fill="none" stroke="#40362e" stroke-width="2.9" stroke-dasharray="2.4 0.5"/>
<path d="M952.8 526.4A75.0 75.0 0 0 1 925.2 505.2" fill="none" stroke="#f2e3c5" stroke-width="1.1" stroke-dasharray="1.5 1.4" stroke-dashoffset="-0.45"/>
<path d="M951.4 531.5A80.2 80.2 0 0 1 927.8 515.7" fill="none" stroke="#40362e" stroke-width="2.9" stroke-dasharray="2.4 0.5"/>
<path d="M951.4 531.5A80.2 80.2 0 0 1 927.8 515.7" fill="none" stroke="#f2e3c5" stroke-width="1.1" stroke-dasharray="1.5 1.4" stroke-dashoffset="-0.45"/>
<path d="M950.0 536.6A85.4 85.4 0 0 1 925.5 520.7" fill="none" stroke="#40362e" stroke-width="2.9" stroke-dasharray="2.4 0.5"/>
<path d="M950.0 536.6A85.4 85.4 0 0 1 925.5 520.7" fill="none" stroke="#f2e3c5" stroke-width="1.1" stroke-dasharray="1.5 1.4" stroke-dashoffset="-0.45"/>
<path d="M948.6 541.6A90.6 90.6 0 0 1 923.4 525.8" fill="none" stroke="#40362e" stroke-width="2.9" stroke-dasharray="2.4 0.5"/>
<path d="M948.6 541.6A90.6 90.6 0 0 1 923.4 525.8" fill="none" stroke="#f2e3c5" stroke-width="1.1" stroke-dasharray="1.5 1.4" stroke-dashoffset="-0.45"/>
<path d="M947.3 546.7A95.8 95.8 0 0 1 921.5 531.0" fill="none" stroke="#40362e" stroke-width="2.9" stroke-dasharray="2.4 0.5"/>
<path d="M947.3 546.7A95.8 95.8 0 0 1 921.5 531.0" fill="none" stroke="#f2e3c5" stroke-width="1.1" stroke-dasharray="1.5 1.4" stroke-dashoffset="-0.45"/>
<path d="M945.9 551.7A101.0 101.0 0 0 1 919.7 536.3" fill="none" stroke="#40362e" stroke-width="2.9" stroke-dasharray="2.4 0.5"/>
<path d="M945.9 551.7A101.0 101.0 0 0 1 919.7 536.3" fill="none" stroke="#f2e3c5" stroke-width="1.1" stroke-dasharray="1.5 1.4" stroke-dashoffset="-0.45"/>
<path d="M1006.4 459.6A23.0 23.0 0 0 1 1000.4 473.6" fill="none" stroke="#40362e" stroke-width="2.9" stroke-dasharray="2.4 0.5"/>
<path d="M1006.4 459.6A23.0 23.0 0 0 1 1000.4 473.6" fill="none" stroke="#f2e3c5" stroke-width="1.1" stroke-dasharray="1.5 1.4" stroke-dashoffset="-0.45"/>
<path d="M1011.6 460.0A28.2 28.2 0 0 1 1001.8 479.5" fill="none" stroke="#40362e" stroke-width="2.9" stroke-dasharray="2.4 0.5"/>
<path d="M1011.6 460.0A28.2 28.2 0 0 1 1001.8 479.5" fill="none" stroke="#f2e3c5" stroke-width="1.1" stroke-dasharray="1.5 1.4" stroke-dashoffset="-0.45"/>
<path d="M1016.8 460.3A33.4 33.4 0 0 1 1003.2 485.0" fill="none" stroke="#40362e" stroke-width="2.9" stroke-dasharray="2.4 0.5"/>
<path d="M1016.8 460.3A33.4 33.4 0 0 1 1003.2 485.0" fill="none" stroke="#f2e3c5" stroke-width="1.1" stroke-dasharray="1.5 1.4" stroke-dashoffset="-0.45"/>
<path d="M1022.0 460.7A38.6 38.6 0 0 1 1004.5 490.4" fill="none" stroke="#40362e" stroke-width="2.9" stroke-dasharray="2.4 0.5"/>
<path d="M1022.0 460.7A38.6 38.6 0 0 1 1004.5 490.4" fill="none" stroke="#f2e3c5" stroke-width="1.1" stroke-dasharray="1.5 1.4" stroke-dashoffset="-0.45"/>
<path d="M1027.2 461.1A43.8 43.8 0 0 1 1005.9 495.6" fill="none" stroke="#40362e" stroke-width="2.9" stroke-dasharray="2.4 0.5"/>
<path d="M1027.2 461.1A43.8 43.8 0 0 1 1005.9 495.6" fill="none" stroke="#f2e3c5" stroke-width="1.1" stroke-dasharray="1.5 1.4" stroke-dashoffset="-0.45"/>
<path d="M1032.4 461.4A49.0 49.0 0 0 1 1007.3 500.8" fill="none" stroke="#40362e" stroke-width="2.9" stroke-dasharray="2.4 0.5"/>
<path d="M1032.4 461.4A49.0 49.0 0 0 1 1007.3 500.8" fill="none" stroke="#f2e3c5" stroke-width="1.1" stroke-dasharray="1.5 1.4" stroke-dashoffset="-0.45"/>
<path d="M1036.9 467.3A54.2 54.2 0 0 1 1008.7 506.0" fill="none" stroke="#40362e" stroke-width="2.9" stroke-dasharray="2.4 0.5"/>
<path d="M1036.9 467.3A54.2 54.2 0 0 1 1008.7 506.0" fill="none" stroke="#f2e3c5" stroke-width="1.1" stroke-dasharray="1.5 1.4" stroke-dashoffset="-0.45"/>
<path d="M1040.3 475.5A59.4 59.4 0 0 1 1010.1 511.1" fill="none" stroke="#40362e" stroke-width="2.9" stroke-dasharray="2.4 0.5"/>
<path d="M1040.3 475.5A59.4 59.4 0 0 1 1010.1 511.1" fill="none" stroke="#f2e3c5" stroke-width="1.1" stroke-dasharray="1.5 1.4" stroke-dashoffset="-0.45"/>
<path d="M1042.3 484.7A64.6 64.6 0 0 1 1011.5 516.2" fill="none" stroke="#40362e" stroke-width="2.9" stroke-dasharray="2.4 0.5"/>
<path d="M1042.3 484.7A64.6 64.6 0 0 1 1011.5 516.2" fill="none" stroke="#f2e3c5" stroke-width="1.1" stroke-dasharray="1.5 1.4" stroke-dashoffset="-0.45"/>
<path d="M1042.9 494.7A69.8 69.8 0 0 1 1012.8 521.3" fill="none" stroke="#40362e" stroke-width="2.9" stroke-dasharray="2.4 0.5"/>
<path d="M1042.9 494.7A69.8 69.8 0 0 1 1012.8 521.3" fill="none" stroke="#f2e3c5" stroke-width="1.1" stroke-dasharray="1.5 1.4" stroke-dashoffset="-0.45"/>
<path d="M1041.8 505.2A75.0 75.0 0 0 1 1014.2 526.4" fill="none" stroke="#40362e" stroke-width="2.9" stroke-dasharray="2.4 0.5"/>
<path d="M1041.8 505.2A75.0 75.0 0 0 1 1014.2 526.4" fill="none" stroke="#f2e3c5" stroke-width="1.1" stroke-dasharray="1.5 1.4" stroke-dashoffset="-0.45"/>
<path d="M1039.2 515.7A80.2 80.2 0 0 1 1015.6 531.5" fill="none" stroke="#40362e" stroke-width="2.9" stroke-dasharray="2.4 0.5"/>
<path d="M1039.2 515.7A80.2 80.2 0 0 1 1015.6 531.5" fill="none" stroke="#f2e3c5" stroke-width="1.1" stroke-dasharray="1.5 1.4" stroke-dashoffset="-0.45"/>
<path d="M1041.5 520.7A85.4 85.4 0 0 1 1017.0 536.6" fill="none" stroke="#40362e" stroke-width="2.9" stroke-dasharray="2.4 0.5"/>
<path d="M1041.5 520.7A85.4 85.4 0 0 1 1017.0 536.6" fill="none" stroke="#f2e3c5" stroke-width="1.1" stroke-dasharray="1.5 1.4" stroke-dashoffset="-0.45"/>
<path d="M1043.6 525.8A90.6 90.6 0 0 1 1018.4 541.6" fill="none" stroke="#40362e" stroke-width="2.9" stroke-dasharray="2.4 0.5"/>
<path d="M1043.6 525.8A90.6 90.6 0 0 1 1018.4 541.6" fill="none" stroke="#f2e3c5" stroke-width="1.1" stroke-dasharray="1.5 1.4" stroke-dashoffset="-0.45"/>
<path d="M1045.5 531.0A95.8 95.8 0 0 1 1019.7 546.7" fill="none" stroke="#40362e" stroke-width="2.9" stroke-dasharray="2.4 0.5"/>
<path d="M1045.5 531.0A95.8 95.8 0 0 1 1019.7 546.7" fill="none" stroke="#f2e3c5" stroke-width="1.1" stroke-dasharray="1.5 1.4" stroke-dashoffset="-0.45"/>
<path d="M1047.3 536.3A101.0 101.0 0 0 1 1021.1 551.7" fill="none" stroke="#40362e" stroke-width="2.9" stroke-dasharray="2.4 0.5"/>
<path d="M1047.3 536.3A101.0 101.0 0 0 1 1021.1 551.7" fill="none" stroke="#f2e3c5" stroke-width="1.1" stroke-dasharray="1.5 1.4" stroke-dashoffset="-0.45"/>
<path d="M996.0 477.3A23.0 23.0 0 0 1 971.0 477.3" fill="none" stroke="#40362e" stroke-width="2.9" stroke-dasharray="2.4 0.5"/>
<path d="M996.0 477.3A23.0 23.0 0 0 1 971.0 477.3" fill="none" stroke="#f2e3c5" stroke-width="1.1" stroke-dasharray="1.5 1.4" stroke-dashoffset="-0.45"/>
<path d="M996.7 482.5A27.8 27.8 0 0 1 970.3 482.5" fill="none" stroke="#40362e" stroke-width="2.9" stroke-dasharray="2.4 0.5"/>
<path d="M996.7 482.5A27.8 27.8 0 0 1 970.3 482.5" fill="none" stroke="#f2e3c5" stroke-width="1.1" stroke-dasharray="1.5 1.4" stroke-dashoffset="-0.45"/>
<path d="M997.4 487.5A32.6 32.6 0 0 1 969.6 487.5" fill="none" stroke="#40362e" stroke-width="2.9" stroke-dasharray="2.4 0.5"/>
<path d="M997.4 487.5A32.6 32.6 0 0 1 969.6 487.5" fill="none" stroke="#f2e3c5" stroke-width="1.1" stroke-dasharray="1.5 1.4" stroke-dashoffset="-0.45"/>
<path d="M998.0 492.5A37.4 37.4 0 0 1 969.0 492.5" fill="none" stroke="#40362e" stroke-width="2.9" stroke-dasharray="2.4 0.5"/>
<path d="M998.0 492.5A37.4 37.4 0 0 1 969.0 492.5" fill="none" stroke="#f2e3c5" stroke-width="1.1" stroke-dasharray="1.5 1.4" stroke-dashoffset="-0.45"/>
<path d="M998.7 497.4A42.2 42.2 0 0 1 968.3 497.4" fill="none" stroke="#40362e" stroke-width="2.9" stroke-dasharray="2.4 0.5"/>
<path d="M998.7 497.4A42.2 42.2 0 0 1 968.3 497.4" fill="none" stroke="#f2e3c5" stroke-width="1.1" stroke-dasharray="1.5 1.4" stroke-dashoffset="-0.45"/>
<path d="M999.4 502.2A47.0 47.0 0 0 1 967.6 502.2" fill="none" stroke="#40362e" stroke-width="2.9" stroke-dasharray="2.4 0.5"/>
<path d="M999.4 502.2A47.0 47.0 0 0 1 967.6 502.2" fill="none" stroke="#f2e3c5" stroke-width="1.1" stroke-dasharray="1.5 1.4" stroke-dashoffset="-0.45"/>
<path d="M1000.1 507.1A51.8 51.8 0 0 1 966.9 507.1" fill="none" stroke="#40362e" stroke-width="2.9" stroke-dasharray="2.4 0.5"/>
<path d="M1000.1 507.1A51.8 51.8 0 0 1 966.9 507.1" fill="none" stroke="#f2e3c5" stroke-width="1.1" stroke-dasharray="1.5 1.4" stroke-dashoffset="-0.45"/>
<path d="M1000.7 511.9A56.6 56.6 0 0 1 966.3 511.9" fill="none" stroke="#40362e" stroke-width="2.9" stroke-dasharray="2.4 0.5"/>
<path d="M1000.7 511.9A56.6 56.6 0 0 1 966.3 511.9" fill="none" stroke="#f2e3c5" stroke-width="1.1" stroke-dasharray="1.5 1.4" stroke-dashoffset="-0.45"/>
<path d="M1001.4 516.7A61.4 61.4 0 0 1 965.6 516.7" fill="none" stroke="#40362e" stroke-width="2.9" stroke-dasharray="2.4 0.5"/>
<path d="M1001.4 516.7A61.4 61.4 0 0 1 965.6 516.7" fill="none" stroke="#f2e3c5" stroke-width="1.1" stroke-dasharray="1.5 1.4" stroke-dashoffset="-0.45"/>
<path d="M1002.1 521.5A66.2 66.2 0 0 1 964.9 521.5" fill="none" stroke="#40362e" stroke-width="2.9" stroke-dasharray="2.4 0.5"/>
<path d="M1002.1 521.5A66.2 66.2 0 0 1 964.9 521.5" fill="none" stroke="#f2e3c5" stroke-width="1.1" stroke-dasharray="1.5 1.4" stroke-dashoffset="-0.45"/>
<path d="M1002.8 526.3A71.0 71.0 0 0 1 964.2 526.3" fill="none" stroke="#40362e" stroke-width="2.9" stroke-dasharray="2.4 0.5"/>
<path d="M1002.8 526.3A71.0 71.0 0 0 1 964.2 526.3" fill="none" stroke="#f2e3c5" stroke-width="1.1" stroke-dasharray="1.5 1.4" stroke-dashoffset="-0.45"/>
<path d="M1003.5 531.1A75.8 75.8 0 0 1 963.5 531.1" fill="none" stroke="#40362e" stroke-width="2.9" stroke-dasharray="2.4 0.5"/>
<path d="M1003.5 531.1A75.8 75.8 0 0 1 963.5 531.1" fill="none" stroke="#f2e3c5" stroke-width="1.1" stroke-dasharray="1.5 1.4" stroke-dashoffset="-0.45"/>
<path d="M1004.1 535.9A80.6 80.6 0 0 1 962.9 535.9" fill="none" stroke="#40362e" stroke-width="2.9" stroke-dasharray="2.4 0.5"/>
<path d="M1004.1 535.9A80.6 80.6 0 0 1 962.9 535.9" fill="none" stroke="#f2e3c5" stroke-width="1.1" stroke-dasharray="1.5 1.4" stroke-dashoffset="-0.45"/>
<path d="M1004.8 540.7A85.4 85.4 0 0 1 962.2 540.7" fill="none" stroke="#40362e" stroke-width="2.9" stroke-dasharray="2.4 0.5"/>
<path d="M1004.8 540.7A85.4 85.4 0 0 1 962.2 540.7" fill="none" stroke="#f2e3c5" stroke-width="1.1" stroke-dasharray="1.5 1.4" stroke-dashoffset="-0.45"/>
<path d="M1005.5 545.5A90.2 90.2 0 0 1 961.5 545.5" fill="none" stroke="#40362e" stroke-width="2.9" stroke-dasharray="2.4 0.5"/>
<path d="M1005.5 545.5A90.2 90.2 0 0 1 961.5 545.5" fill="none" stroke="#f2e3c5" stroke-width="1.1" stroke-dasharray="1.5 1.4" stroke-dashoffset="-0.45"/>
<path d="M1006.2 550.3A95.0 95.0 0 0 1 960.8 550.3" fill="none" stroke="#40362e" stroke-width="2.9" stroke-dasharray="2.4 0.5"/>
<path d="M1006.2 550.3A95.0 95.0 0 0 1 960.8 550.3" fill="none" stroke="#f2e3c5" stroke-width="1.1" stroke-dasharray="1.5 1.4" stroke-dashoffset="-0.45"/>
<rect x="917.8" y="463.4" width="3" height="64" fill="none" stroke="#5a5048" stroke-width="0.7"/>
<line x1="915.8" y1="463.4" x2="915.8" y2="527.5" stroke="#5a5048" stroke-width="0.6"/>
<line x1="923.8" y1="463.4" x2="923.8" y2="527.5" stroke="#5a5048" stroke-width="0.6"/>
<line x1="915.8" y1="465" x2="924.8" y2="465" stroke="#5a5048" stroke-width="0.5"/>
<line x1="915.8" y1="469.6" x2="924.8" y2="469.6" stroke="#5a5048" stroke-width="0.5"/>
<line x1="915.8" y1="474.2" x2="924.8" y2="474.2" stroke="#5a5048" stroke-width="0.5"/>
<line x1="915.8" y1="478.8" x2="924.8" y2="478.8" stroke="#5a5048" stroke-width="0.5"/>
<line x1="915.8" y1="483.4" x2="924.8" y2="483.4" stroke="#5a5048" stroke-width="0.5"/>
<line x1="915.8" y1="488" x2="924.8" y2="488" stroke="#5a5048" stroke-width="0.5"/>
<line x1="915.8" y1="492.6" x2="924.8" y2="492.6" stroke="#5a5048" stroke-width="0.5"/>
<line x1="915.8" y1="497.2" x2="924.8" y2="497.2" stroke="#5a5048" stroke-width="0.5"/>
<line x1="915.8" y1="501.8" x2="924.8" y2="501.8" stroke="#5a5048" stroke-width="0.5"/>
<line x1="915.8" y1="506.4" x2="924.8" y2="506.4" stroke="#5a5048" stroke-width="0.5"/>
<line x1="915.8" y1="511" x2="924.8" y2="511" stroke="#5a5048" stroke-width="0.5"/>
<line x1="915.8" y1="515.6" x2="924.8" y2="515.6" stroke="#5a5048" stroke-width="0.5"/>
<line x1="915.8" y1="520.2" x2="924.8" y2="520.2" stroke="#5a5048" stroke-width="0.5"/>
<line x1="915.8" y1="524.8" x2="924.8" y2="524.8" stroke="#5a5048" stroke-width="0.5"/>
<rect x="1042.5" y="463.4" width="3" height="64" fill="none" stroke="#5a5048" stroke-width="0.7"/>
<line x1="1040.5" y1="463.4" x2="1040.5" y2="527.5" stroke="#5a5048" stroke-width="0.6"/>
<line x1="1048.5" y1="463.4" x2="1048.5" y2="527.5" stroke="#5a5048" stroke-width="0.6"/>
<line x1="1040.5" y1="465" x2="1049.5" y2="465" stroke="#5a5048" stroke-width="0.5"/>
<line x1="1040.5" y1="469.6" x2="1049.5" y2="469.6" stroke="#5a5048" stroke-width="0.5"/>
<line x1="1040.5" y1="474.2" x2="1049.5" y2="474.2" stroke="#5a5048" stroke-width="0.5"/>
<line x1="1040.5" y1="478.8" x2="1049.5" y2="478.8" stroke="#5a5048" stroke-width="0.5"/>
<line x1="1040.5" y1="483.4" x2="1049.5" y2="483.4" stroke="#5a5048" stroke-width="0.5"/>
<line x1="1040.5" y1="488" x2="1049.5" y2="488" stroke="#5a5048" stroke-width="0.5"/>
<line x1="1040.5" y1="492.6" x2="1049.5" y2="492.6" stroke="#5a5048" stroke-width="0.5"/>
<line x1="1040.5" y1="497.2" x2="1049.5" y2="497.2" stroke="#5a5048" stroke-width="0.5"/>
<line x1="1040.5" y1="501.8" x2="1049.5" y2="501.8" stroke="#5a5048" stroke-width="0.5"/>
<line x1="1040.5" y1="506.4" x2="1049.5" y2="506.4" stroke="#5a5048" stroke-width="0.5"/>
<line x1="1040.5" y1="511" x2="1049.5" y2="511" stroke="#5a5048" stroke-width="0.5"/>
<line x1="1040.5" y1="515.6" x2="1049.5" y2="515.6" stroke="#5a5048" stroke-width="0.5"/>
<line x1="1040.5" y1="520.2" x2="1049.5" y2="520.2" stroke="#5a5048" stroke-width="0.5"/>
<line x1="1040.5" y1="524.8" x2="1049.5" y2="524.8" stroke="#5a5048" stroke-width="0.5"/>
<path d="M914.1 548.5H944.1V561.5H948V565.9H914.1Z" fill="#dcdcdf" stroke="#2b2927" stroke-width="2"/>
<path d="M1051.4 548.5H1022.8V561.5H1019V565.9H1051.4Z" fill="#dcdcdf" stroke="#2b2927" stroke-width="2"/>
<line x1="910.5" y1="567.3" x2="947.6" y2="567.3" stroke="#2b2927" stroke-width="2"/>
<line x1="1019" y1="567.3" x2="1056.5" y2="567.3" stroke="#2b2927" stroke-width="2"/>
<text x="983.2" y="568.6" font-size="6.6" fill="#3f3a36" text-anchor="middle" font-weight="400">OVATION THEATRE</text>
<line x1="941" y1="573.5" x2="1027" y2="573.5" stroke="#2b2927" stroke-width="1.8"/>
<path d="M958.2 573.5V600H1007.5V573.5" fill="none" stroke="#2b2927" stroke-width="1.8"/>
<rect x="959.5" y="588" width="46.5" height="11" fill="#85796a"/>
<line x1="959.5" y1="591" x2="1006" y2="591" stroke="#e6dac0" stroke-width="0.7"/>
<line x1="959.5" y1="594" x2="1006" y2="594" stroke="#e6dac0" stroke-width="0.7"/>
<line x1="959.5" y1="597" x2="1006" y2="597" stroke="#e6dac0" stroke-width="0.7"/>
<line x1="971.1" y1="588" x2="971.1" y2="599" stroke="#2b2927" stroke-width="0.9"/>
<line x1="982.7" y1="588" x2="982.7" y2="599" stroke="#2b2927" stroke-width="0.9"/>
<line x1="994.3" y1="588" x2="994.3" y2="599" stroke="#2b2927" stroke-width="0.9"/>
<path d="M925 567.3V643H940.5L942 637V567.3" fill="none" stroke="#2b2927" stroke-width="1.5"/>
<rect x="930" y="569" width="10" height="9.3" fill="none" stroke="#2b2927" stroke-width="1.2"/>
<text x="935" y="576.5" font-size="6.8" fill="#3f3a36" text-anchor="middle" font-weight="400">M</text>
<rect x="930" y="578.3" width="10" height="9.3" fill="none" stroke="#2b2927" stroke-width="1.2"/>
<text x="935" y="585.8" font-size="6.8" fill="#3f3a36" text-anchor="middle" font-weight="400">U</text>
<rect x="930" y="587.6" width="10" height="9.3" fill="none" stroke="#2b2927" stroke-width="1.2"/>
<text x="935" y="595.1" font-size="6.8" fill="#3f3a36" text-anchor="middle" font-weight="400">L</text>
<line x1="925" y1="597" x2="941" y2="597" stroke="#2b2927" stroke-width="1.5"/>
<line x1="926" y1="605" x2="932" y2="617" stroke="#3f3a36" stroke-width="0.7"/>
<text x="919.8" y="606" font-size="6.2" fill="#3f3a36" text-anchor="middle" font-weight="400" transform="rotate(-90 919.8 606)">CARNIVAL ADVENTURES</text>
<path d="M1027.6 567.3V637Q1028 643 1033 643H1043V567.3" fill="none" stroke="#2b2927" stroke-width="1.5"/>
<text x="1038" y="605" font-size="7.2" fill="#3f3a36" text-anchor="middle" font-weight="400" transform="rotate(-90 1038 605)">GUEST SERVICES</text>
<path d="M953.8 643V611Q954 608 957 607H961.9V643Z" fill="#dcdcdf" stroke="#2b2927" stroke-width="1.5"/>
<path d="M1014.3 643V611Q1014 608 1011 607H1005.4V643Z" fill="#dcdcdf" stroke="#2b2927" stroke-width="1.5"/>
<rect x="961.9" y="607.7" width="13.3" height="11.7" fill="#f0a3cb" stroke="#2b2927" stroke-width="1.4"/>
<text x="968.5" y="616.4" font-size="8.2" fill="#5a3a44" text-anchor="middle" font-weight="400">EL</text>
<rect x="992.2" y="607.7" width="13.3" height="11.7" fill="#f0a3cb" stroke="#2b2927" stroke-width="1.4"/>
<text x="998.8" y="616.4" font-size="8.2" fill="#5a3a44" text-anchor="middle" font-weight="400">EL</text>
<rect x="961.9" y="619.4" width="13.3" height="11.7" fill="#f0a3cb" stroke="#2b2927" stroke-width="1.4"/>
<text x="968.5" y="628.1" font-size="8.2" fill="#5a3a44" text-anchor="middle" font-weight="400">EL</text>
<rect x="992.2" y="619.4" width="13.3" height="11.7" fill="#f0a3cb" stroke="#2b2927" stroke-width="1.4"/>
<text x="998.8" y="628.1" font-size="8.2" fill="#5a3a44" text-anchor="middle" font-weight="400">EL</text>
<rect x="961.9" y="631.1" width="13.3" height="11.7" fill="#f0a3cb" stroke="#2b2927" stroke-width="1.4"/>
<text x="968.5" y="639.8" font-size="8.2" fill="#5a3a44" text-anchor="middle" font-weight="400">EL</text>
<rect x="992.2" y="631.1" width="13.3" height="11.7" fill="#f0a3cb" stroke="#2b2927" stroke-width="1.4"/>
<text x="998.8" y="639.8" font-size="8.2" fill="#5a3a44" text-anchor="middle" font-weight="400">EL</text>
<text x="984.2" y="654.6" font-size="7" fill="#3f3a36" text-anchor="middle" font-weight="400">BREEZE LOBBY</text>
<text x="922.5" y="665" font-size="6.8" fill="#3f3a36" text-anchor="middle" font-weight="700" transform="rotate(-90 922.5 665)">FUNHUB</text>
<path d="M955 662Q970 659.5 983 660Q996 659.5 1011 662Q1020 666 1020 680Q1019.5 697 1012 703Q1006 706 1002 700Q996 684 983 683.5Q970 684 964 700Q960 706 954 703Q946.5 697 946 680Q946 666 955 662Z" fill="none" stroke="#3f362e" stroke-width="0.8"/>
<rect x="960.3" y="660.8" width="46.9" height="8.6" fill="#f0a3cb" stroke="#2b2927" stroke-width="1.4" rx="1.5"/>
<rect x="964" y="667" width="5.2" height="7" fill="#f0a3cb" stroke="#2b2927" stroke-width="0.6" rx="2"/>
<rect x="975.3" y="667" width="5.2" height="7" fill="#f0a3cb" stroke="#2b2927" stroke-width="0.6" rx="2"/>
<rect x="986.6" y="667" width="5.2" height="7" fill="#f0a3cb" stroke="#2b2927" stroke-width="0.6" rx="2"/>
<rect x="997.9" y="667" width="5.2" height="7" fill="#f0a3cb" stroke="#2b2927" stroke-width="0.6" rx="2"/>
<line x1="961.8" y1="662" x2="961.8" y2="668" stroke="#2b2927" stroke-width="0.6"/>
<line x1="973.1" y1="662" x2="973.1" y2="668" stroke="#2b2927" stroke-width="0.6"/>
<line x1="984.4" y1="662" x2="984.4" y2="668" stroke="#2b2927" stroke-width="0.6"/>
<line x1="995.7" y1="662" x2="995.7" y2="668" stroke="#2b2927" stroke-width="0.6"/>
<line x1="1007" y1="662" x2="1007" y2="668" stroke="#2b2927" stroke-width="0.6"/>
<text x="982.5" y="682.2" font-size="6.2" fill="#3f3a36" text-anchor="middle" font-weight="400">DANCE FLOOR</text>
<path d="M965 705.7Q965 688 982.6 688Q1000.3 688 1000.3 705.7" fill="none" stroke="#3f362e" stroke-width="0.8"/>
<path d="M968 700Q971 690.5 982.6 690.5Q994 690.5 997 700" fill="none" stroke="#3f362e" stroke-width="1.4" stroke-dasharray="0.8 0.6"/>
<text x="982" y="695.7" font-size="6" fill="#3f3a36" text-anchor="middle" font-weight="400">BAR</text>
<circle cx="982" cy="706.4" r="4.4" fill="none" stroke="#3f362e" stroke-width="0.8"/>
<path d="M975 707Q976 713.5 982 714Q988 713.5 989.5 708" fill="none" stroke="#3f362e" stroke-width="0.8"/>
<path d="M973 707L977 715" fill="none" stroke="#3f362e" stroke-width="2.2"/>
<rect x="1036.4" y="665.3" width="15.6" height="27.3" fill="none" stroke="#2b2927" stroke-width="1.5"/>
<text x="1044" y="679" font-size="4.5" fill="#3f3a36" text-anchor="middle" font-weight="700" transform="rotate(-90 1044 679)">DREAMS</text>
<circle cx="1030" cy="652" r="1.6" fill="none" stroke="#5a5048" stroke-width="0.6"/>
<circle cx="1034" cy="649" r="1.6" fill="none" stroke="#5a5048" stroke-width="0.6"/>
<circle cx="1038" cy="653" r="1.6" fill="none" stroke="#5a5048" stroke-width="0.6"/>
<circle cx="1033" cy="656" r="1.6" fill="none" stroke="#5a5048" stroke-width="0.6"/>
<circle cx="1040" cy="654" r="1.6" fill="none" stroke="#5a5048" stroke-width="0.6"/>
<circle cx="1044" cy="651" r="1.6" fill="none" stroke="#5a5048" stroke-width="0.6"/>
<circle cx="1048" cy="655" r="1.6" fill="none" stroke="#5a5048" stroke-width="0.6"/>
<circle cx="1043" cy="658" r="1.6" fill="none" stroke="#5a5048" stroke-width="0.6"/>
<circle cx="1030" cy="712" r="1.6" fill="none" stroke="#5a5048" stroke-width="0.6"/>
<circle cx="1034" cy="709" r="1.6" fill="none" stroke="#5a5048" stroke-width="0.6"/>
<circle cx="1038" cy="713" r="1.6" fill="none" stroke="#5a5048" stroke-width="0.6"/>
<circle cx="1033" cy="716" r="1.6" fill="none" stroke="#5a5048" stroke-width="0.6"/>
<circle cx="1038" cy="706" r="1.6" fill="none" stroke="#5a5048" stroke-width="0.6"/>
<circle cx="1042" cy="703" r="1.6" fill="none" stroke="#5a5048" stroke-width="0.6"/>
<circle cx="1046" cy="707" r="1.6" fill="none" stroke="#5a5048" stroke-width="0.6"/>
<circle cx="1041" cy="710" r="1.6" fill="none" stroke="#5a5048" stroke-width="0.6"/>
<circle cx="922" cy="695" r="1.6" fill="none" stroke="#5a5048" stroke-width="0.6"/>
<circle cx="926" cy="692" r="1.6" fill="none" stroke="#5a5048" stroke-width="0.6"/>
<circle cx="930" cy="696" r="1.6" fill="none" stroke="#5a5048" stroke-width="0.6"/>
<circle cx="925" cy="699" r="1.6" fill="none" stroke="#5a5048" stroke-width="0.6"/>
<circle cx="928" cy="702" r="1.6" fill="none" stroke="#5a5048" stroke-width="0.6"/>
<circle cx="932" cy="699" r="1.6" fill="none" stroke="#5a5048" stroke-width="0.6"/>
<circle cx="936" cy="703" r="1.6" fill="none" stroke="#5a5048" stroke-width="0.6"/>
<circle cx="931" cy="706" r="1.6" fill="none" stroke="#5a5048" stroke-width="0.6"/>
<circle cx="922" cy="710" r="1.6" fill="none" stroke="#5a5048" stroke-width="0.6"/>
<circle cx="926" cy="707" r="1.6" fill="none" stroke="#5a5048" stroke-width="0.6"/>
<circle cx="930" cy="711" r="1.6" fill="none" stroke="#5a5048" stroke-width="0.6"/>
<circle cx="925" cy="714" r="1.6" fill="none" stroke="#5a5048" stroke-width="0.6"/>
<circle cx="930" cy="716" r="1.6" fill="none" stroke="#5a5048" stroke-width="0.6"/>
<circle cx="934" cy="713" r="1.6" fill="none" stroke="#5a5048" stroke-width="0.6"/>
<circle cx="938" cy="717" r="1.6" fill="none" stroke="#5a5048" stroke-width="0.6"/>
<circle cx="933" cy="720" r="1.6" fill="none" stroke="#5a5048" stroke-width="0.6"/>
<circle cx="950" cy="690" r="1.6" fill="none" stroke="#5a5048" stroke-width="0.6"/>
<circle cx="954" cy="687" r="1.6" fill="none" stroke="#5a5048" stroke-width="0.6"/>
<circle cx="958" cy="691" r="1.6" fill="none" stroke="#5a5048" stroke-width="0.6"/>
<circle cx="953" cy="694" r="1.6" fill="none" stroke="#5a5048" stroke-width="0.6"/>
<circle cx="1015" cy="690" r="1.6" fill="none" stroke="#5a5048" stroke-width="0.6"/>
<circle cx="1019" cy="687" r="1.6" fill="none" stroke="#5a5048" stroke-width="0.6"/>
<circle cx="1023" cy="691" r="1.6" fill="none" stroke="#5a5048" stroke-width="0.6"/>
<circle cx="1018" cy="694" r="1.6" fill="none" stroke="#5a5048" stroke-width="0.6"/>
<circle cx="949" cy="675" r="1.6" fill="none" stroke="#5a5048" stroke-width="0.6"/>
<circle cx="953" cy="672" r="1.6" fill="none" stroke="#5a5048" stroke-width="0.6"/>
<circle cx="957" cy="676" r="1.6" fill="none" stroke="#5a5048" stroke-width="0.6"/>
<circle cx="952" cy="679" r="1.6" fill="none" stroke="#5a5048" stroke-width="0.6"/>
<circle cx="1017" cy="675" r="1.6" fill="none" stroke="#5a5048" stroke-width="0.6"/>
<circle cx="1021" cy="672" r="1.6" fill="none" stroke="#5a5048" stroke-width="0.6"/>
<circle cx="1025" cy="676" r="1.6" fill="none" stroke="#5a5048" stroke-width="0.6"/>
<circle cx="1020" cy="679" r="1.6" fill="none" stroke="#5a5048" stroke-width="0.6"/>
<path d="M910.5 734H916V726.8L922.7 722.4H947.3V732.7H970.8V735" fill="none" stroke="#2b2927" stroke-width="1.7"/>
<path d="M994 734.2V722.4H1043.6L1050.5 727.8V733.7H1056.5" fill="none" stroke="#2b2927" stroke-width="1.7"/>
<rect x="920.5" y="726.3" width="7" height="7.4" rx="3" fill="none" stroke="#3a3029" stroke-width="1.05"/>
<line x1="921" y1="730" x2="927" y2="730" stroke="#3a3029" stroke-width="0.8"/>
<line x1="924" y1="726.3" x2="924" y2="733.7" stroke="#3a3029" stroke-width="0.5"/>
<rect x="929.0" y="726.3" width="7" height="7.4" rx="3" fill="none" stroke="#3a3029" stroke-width="1.05"/>
<line x1="929.5" y1="730" x2="935.5" y2="730" stroke="#3a3029" stroke-width="0.8"/>
<line x1="932.5" y1="726.3" x2="932.5" y2="733.7" stroke="#3a3029" stroke-width="0.5"/>
<rect x="938.0" y="726.3" width="7" height="7.4" rx="3" fill="none" stroke="#3a3029" stroke-width="1.05"/>
<line x1="938.5" y1="730" x2="944.5" y2="730" stroke="#3a3029" stroke-width="0.8"/>
<line x1="941.5" y1="726.3" x2="941.5" y2="733.7" stroke="#3a3029" stroke-width="0.5"/>
<rect x="1000.5" y="725.8" width="7" height="7.4" rx="3" fill="none" stroke="#3a3029" stroke-width="1.05"/>
<line x1="1001" y1="729.5" x2="1007" y2="729.5" stroke="#3a3029" stroke-width="0.8"/>
<line x1="1004" y1="725.8" x2="1004" y2="733.2" stroke="#3a3029" stroke-width="0.5"/>
<rect x="1011.5" y="725.8" width="7" height="7.4" rx="3" fill="none" stroke="#3a3029" stroke-width="1.05"/>
<line x1="1012" y1="729.5" x2="1018" y2="729.5" stroke="#3a3029" stroke-width="0.8"/>
<line x1="1015" y1="725.8" x2="1015" y2="733.2" stroke="#3a3029" stroke-width="0.5"/>
<rect x="1022.5" y="725.8" width="7" height="7.4" rx="3" fill="none" stroke="#3a3029" stroke-width="1.05"/>
<line x1="1023" y1="729.5" x2="1029" y2="729.5" stroke="#3a3029" stroke-width="0.8"/>
<line x1="1026" y1="725.8" x2="1026" y2="733.2" stroke="#3a3029" stroke-width="0.5"/>
<rect x="1033.5" y="725.8" width="7" height="7.4" rx="3" fill="none" stroke="#3a3029" stroke-width="1.05"/>
<line x1="1034" y1="729.5" x2="1040" y2="729.5" stroke="#3a3029" stroke-width="0.8"/>
<line x1="1037" y1="725.8" x2="1037" y2="733.2" stroke="#3a3029" stroke-width="0.5"/>
<rect x="912.3" y="737.8" width="7" height="7.4" rx="3" fill="none" stroke="#3a3029" stroke-width="1.05"/>
<line x1="912.8" y1="741.5" x2="918.8" y2="741.5" stroke="#3a3029" stroke-width="0.8"/>
<line x1="915.8" y1="737.8" x2="915.8" y2="745.2" stroke="#3a3029" stroke-width="0.5"/>
<rect x="922.6" y="737.8" width="7" height="7.4" rx="3" fill="none" stroke="#3a3029" stroke-width="1.05"/>
<line x1="923.1" y1="741.5" x2="929.1" y2="741.5" stroke="#3a3029" stroke-width="0.8"/>
<line x1="926.1" y1="737.8" x2="926.1" y2="745.2" stroke="#3a3029" stroke-width="0.5"/>
<rect x="933.5" y="737.8" width="7" height="7.4" rx="3" fill="none" stroke="#3a3029" stroke-width="1.05"/>
<line x1="934" y1="741.5" x2="940" y2="741.5" stroke="#3a3029" stroke-width="0.8"/>
<line x1="937" y1="737.8" x2="937" y2="745.2" stroke="#3a3029" stroke-width="0.5"/>
<rect x="942.5" y="737.8" width="7" height="7.4" rx="3" fill="none" stroke="#3a3029" stroke-width="1.05"/>
<line x1="943" y1="741.5" x2="949" y2="741.5" stroke="#3a3029" stroke-width="0.8"/>
<line x1="946" y1="737.8" x2="946" y2="745.2" stroke="#3a3029" stroke-width="0.5"/>
<rect x="1026.8" y="737.8" width="7" height="7.4" rx="3" fill="none" stroke="#3a3029" stroke-width="1.05"/>
<line x1="1027.3" y1="741.5" x2="1033.3" y2="741.5" stroke="#3a3029" stroke-width="0.8"/>
<line x1="1030.3" y1="737.8" x2="1030.3" y2="745.2" stroke="#3a3029" stroke-width="0.5"/>
<rect x="1037.4" y="737.8" width="7" height="7.4" rx="3" fill="none" stroke="#3a3029" stroke-width="1.05"/>
<line x1="1037.9" y1="741.5" x2="1043.9" y2="741.5" stroke="#3a3029" stroke-width="0.8"/>
<line x1="1040.9" y1="737.8" x2="1040.9" y2="745.2" stroke="#3a3029" stroke-width="0.5"/>
<rect x="1047.7" y="737.8" width="7" height="7.4" rx="3" fill="none" stroke="#3a3029" stroke-width="1.05"/>
<line x1="1048.2" y1="741.5" x2="1054.2" y2="741.5" stroke="#3a3029" stroke-width="0.8"/>
<line x1="1051.2" y1="737.8" x2="1051.2" y2="745.2" stroke="#3a3029" stroke-width="0.5"/>
<rect x="912.3" y="747.8" width="7" height="7.4" rx="3" fill="none" stroke="#3a3029" stroke-width="1.05"/>
<line x1="912.8" y1="751.5" x2="918.8" y2="751.5" stroke="#3a3029" stroke-width="0.8"/>
<line x1="915.8" y1="747.8" x2="915.8" y2="755.2" stroke="#3a3029" stroke-width="0.5"/>
<rect x="922.6" y="747.8" width="7" height="7.4" rx="3" fill="none" stroke="#3a3029" stroke-width="1.05"/>
<line x1="923.1" y1="751.5" x2="929.1" y2="751.5" stroke="#3a3029" stroke-width="0.8"/>
<line x1="926.1" y1="747.8" x2="926.1" y2="755.2" stroke="#3a3029" stroke-width="0.5"/>
<rect x="933.5" y="747.8" width="7" height="7.4" rx="3" fill="none" stroke="#3a3029" stroke-width="1.05"/>
<line x1="934" y1="751.5" x2="940" y2="751.5" stroke="#3a3029" stroke-width="0.8"/>
<line x1="937" y1="747.8" x2="937" y2="755.2" stroke="#3a3029" stroke-width="0.5"/>
<rect x="942.5" y="747.8" width="7" height="7.4" rx="3" fill="none" stroke="#3a3029" stroke-width="1.05"/>
<line x1="943" y1="751.5" x2="949" y2="751.5" stroke="#3a3029" stroke-width="0.8"/>
<line x1="946" y1="747.8" x2="946" y2="755.2" stroke="#3a3029" stroke-width="0.5"/>
<rect x="1026.8" y="747.8" width="7" height="7.4" rx="3" fill="none" stroke="#3a3029" stroke-width="1.05"/>
<line x1="1027.3" y1="751.5" x2="1033.3" y2="751.5" stroke="#3a3029" stroke-width="0.8"/>
<line x1="1030.3" y1="747.8" x2="1030.3" y2="755.2" stroke="#3a3029" stroke-width="0.5"/>
<rect x="1037.4" y="747.8" width="7" height="7.4" rx="3" fill="none" stroke="#3a3029" stroke-width="1.05"/>
<line x1="1037.9" y1="751.5" x2="1043.9" y2="751.5" stroke="#3a3029" stroke-width="0.8"/>
<line x1="1040.9" y1="747.8" x2="1040.9" y2="755.2" stroke="#3a3029" stroke-width="0.5"/>
<rect x="1047.7" y="747.8" width="7" height="7.4" rx="3" fill="none" stroke="#3a3029" stroke-width="1.05"/>
<line x1="1048.2" y1="751.5" x2="1054.2" y2="751.5" stroke="#3a3029" stroke-width="0.8"/>
<line x1="1051.2" y1="747.8" x2="1051.2" y2="755.2" stroke="#3a3029" stroke-width="0.5"/>
<rect x="912.3" y="757.8" width="7" height="7.4" rx="3" fill="none" stroke="#3a3029" stroke-width="1.05"/>
<line x1="912.8" y1="761.5" x2="918.8" y2="761.5" stroke="#3a3029" stroke-width="0.8"/>
<line x1="915.8" y1="757.8" x2="915.8" y2="765.2" stroke="#3a3029" stroke-width="0.5"/>
<rect x="922.6" y="757.8" width="7" height="7.4" rx="3" fill="none" stroke="#3a3029" stroke-width="1.05"/>
<line x1="923.1" y1="761.5" x2="929.1" y2="761.5" stroke="#3a3029" stroke-width="0.8"/>
<line x1="926.1" y1="757.8" x2="926.1" y2="765.2" stroke="#3a3029" stroke-width="0.5"/>
<rect x="933.5" y="757.8" width="7" height="7.4" rx="3" fill="none" stroke="#3a3029" stroke-width="1.05"/>
<line x1="934" y1="761.5" x2="940" y2="761.5" stroke="#3a3029" stroke-width="0.8"/>
<line x1="937" y1="757.8" x2="937" y2="765.2" stroke="#3a3029" stroke-width="0.5"/>
<rect x="942.5" y="757.8" width="7" height="7.4" rx="3" fill="none" stroke="#3a3029" stroke-width="1.05"/>
<line x1="943" y1="761.5" x2="949" y2="761.5" stroke="#3a3029" stroke-width="0.8"/>
<line x1="946" y1="757.8" x2="946" y2="765.2" stroke="#3a3029" stroke-width="0.5"/>
<rect x="1026.8" y="757.8" width="7" height="7.4" rx="3" fill="none" stroke="#3a3029" stroke-width="1.05"/>
<line x1="1027.3" y1="761.5" x2="1033.3" y2="761.5" stroke="#3a3029" stroke-width="0.8"/>
<line x1="1030.3" y1="757.8" x2="1030.3" y2="765.2" stroke="#3a3029" stroke-width="0.5"/>
<rect x="1037.4" y="757.8" width="7" height="7.4" rx="3" fill="none" stroke="#3a3029" stroke-width="1.05"/>
<line x1="1037.9" y1="761.5" x2="1043.9" y2="761.5" stroke="#3a3029" stroke-width="0.8"/>
<line x1="1040.9" y1="757.8" x2="1040.9" y2="765.2" stroke="#3a3029" stroke-width="0.5"/>
<rect x="1047.7" y="757.8" width="7" height="7.4" rx="3" fill="none" stroke="#3a3029" stroke-width="1.05"/>
<line x1="1048.2" y1="761.5" x2="1054.2" y2="761.5" stroke="#3a3029" stroke-width="0.8"/>
<line x1="1051.2" y1="757.8" x2="1051.2" y2="765.2" stroke="#3a3029" stroke-width="0.5"/>
<rect x="996.1" y="739.8" width="7" height="7.4" rx="3" fill="none" stroke="#3a3029" stroke-width="1.05"/>
<line x1="996.6" y1="743.5" x2="1002.6" y2="743.5" stroke="#3a3029" stroke-width="0.8"/>
<line x1="999.6" y1="739.8" x2="999.6" y2="747.2" stroke="#3a3029" stroke-width="0.5"/>
<rect x="1006.1" y="739.8" width="7" height="7.4" rx="3" fill="none" stroke="#3a3029" stroke-width="1.05"/>
<line x1="1006.6" y1="743.5" x2="1012.6" y2="743.5" stroke="#3a3029" stroke-width="0.8"/>
<line x1="1009.6" y1="739.8" x2="1009.6" y2="747.2" stroke="#3a3029" stroke-width="0.5"/>
<rect x="1016.9" y="737.8" width="7" height="7.4" rx="3" fill="none" stroke="#3a3029" stroke-width="1.05"/>
<line x1="1017.4" y1="741.5" x2="1023.4" y2="741.5" stroke="#3a3029" stroke-width="0.8"/>
<line x1="1020.4" y1="737.8" x2="1020.4" y2="745.2" stroke="#3a3029" stroke-width="0.5"/>
<rect x="958.5" y="734.8" width="7" height="7.4" rx="3" fill="none" stroke="#3a3029" stroke-width="1.05"/>
<line x1="959" y1="738.5" x2="965" y2="738.5" stroke="#3a3029" stroke-width="0.8"/>
<line x1="962" y1="734.8" x2="962" y2="742.2" stroke="#3a3029" stroke-width="0.5"/>
<rect x="953.5" y="745.3" width="7" height="7.4" rx="3" fill="none" stroke="#3a3029" stroke-width="1.05"/>
<line x1="954" y1="749" x2="960" y2="749" stroke="#3a3029" stroke-width="0.8"/>
<line x1="957" y1="745.3" x2="957" y2="752.7" stroke="#3a3029" stroke-width="0.5"/>
<rect x="942.5" y="751.3" width="7" height="7.4" rx="3" fill="none" stroke="#3a3029" stroke-width="1.05"/>
<line x1="943" y1="755" x2="949" y2="755" stroke="#3a3029" stroke-width="0.8"/>
<line x1="946" y1="751.3" x2="946" y2="758.7" stroke="#3a3029" stroke-width="0.5"/>
<text x="983" y="757" font-size="6" fill="#3f3a36" text-anchor="middle" font-weight="400">SAPPHIRE</text>
<text x="983" y="764.5" font-size="6.4" fill="#3f3a36" text-anchor="middle" font-weight="400">DINING ROOM</text></svg></div>
<div class="exp" style="left:1106px;top:371px"><svg width="32" height="32" viewBox="0 0 32 32"><path d="M17.9 6.8H24.8V13.7M24.8 6.8L17.4 14.2M7.4 17.1V23.6H14.4M7.4 23.6L14.4 16.6" fill="none" stroke="#8c8c8c" stroke-width="1.6"/></svg></div>
<div class="card" style="left:1194.5px;top:342px;width:347.5px;height:425.5px"><div style="position:absolute;left:0;right:0;top:87px;height:1.5px;background:#e2e3e3"></div></div>
<div class="t" style="left:1223.7px;top:367.7px;font-size:15px;font-weight:700;color:#0d0d0d;transform:scaleX(0.9927);-webkit-text-stroke:0.35px #0d0d0d;">Deck 03 : Mezzanine</div>
<div class="t" style="left:1223.7px;top:390.0px;font-size:15px;font-weight:400;color:#707070;transform:scaleX(0.9827);">Deck ID : 4026</div>
<div style="position:absolute;left:1196.0px;top:431px;width:344.5px;height:335.0px;overflow:hidden;border-radius:0 0 10.5px 10.5px"><svg width="344.5" height="335.0" viewBox="1196.0 431 344.5 335.0" style="filter:blur(0.3px)"><defs><clipPath id="h4"><path d="M1272.7 420V702C1272.7 748 1318 760.5 1359 760.5C1400 760.5 1445.3 748 1445.3 702V420Z"/></clipPath></defs>
<path d="M1272.7 420V702C1272.7 748 1318 760.5 1359 760.5C1400 760.5 1445.3 748 1445.3 702V420Z" fill="#f2e3c5"/>
<g clip-path="url(#h4)">
<rect x="1279" y="423.8" width="32" height="13.3" fill="#cbb9e1" stroke="#2b2927" stroke-width="1.5"/>
<rect x="1406.4" y="423.8" width="32" height="13.3" fill="#cbb9e1" stroke="#2b2927" stroke-width="1.5"/>
<rect x="1273" y="423.8" width="6" height="13.3" fill="#fff" stroke="#2b2927" stroke-width="1.1"/>
<rect x="1438.4" y="423.8" width="6.6" height="13.3" fill="#fff" stroke="#2b2927" stroke-width="1.1"/>
<text x="1280.8" y="434.0" font-size="10.7" fill="#2b2522" textLength="23" lengthAdjust="spacingAndGlyphs">2392</text>
<rect x="1305.2" y="429" width="3.2" height="3.2" fill="#222"/>
<text x="1408.2" y="434.0" font-size="10.7" fill="#2b2522" textLength="23" lengthAdjust="spacingAndGlyphs">2423</text>
<rect x="1432.6" y="429" width="3.2" height="3.2" fill="#222"/>
<rect x="1279" y="437.2" width="32" height="13.3" fill="#cbb9e1" stroke="#2b2927" stroke-width="1.5"/>
<rect x="1406.4" y="437.2" width="32" height="13.3" fill="#cbb9e1" stroke="#2b2927" stroke-width="1.5"/>
<rect x="1273" y="437.2" width="6" height="13.3" fill="#fff" stroke="#2b2927" stroke-width="1.1"/>
<rect x="1438.4" y="437.2" width="6.6" height="13.3" fill="#fff" stroke="#2b2927" stroke-width="1.1"/>
<text x="1280.8" y="447.4" font-size="10.7" fill="#2b2522" textLength="23" lengthAdjust="spacingAndGlyphs">2396</text>
<rect x="1305.2" y="442.4" width="3.2" height="3.2" fill="#222"/>
<text x="1408.2" y="447.4" font-size="10.7" fill="#2b2522" textLength="23" lengthAdjust="spacingAndGlyphs">2427</text>
<rect x="1432.6" y="442.4" width="3.2" height="3.2" fill="#222"/>
<rect x="1279" y="450.6" width="32" height="13.3" fill="#cbb9e1" stroke="#2b2927" stroke-width="1.5"/>
<rect x="1406.4" y="450.6" width="32" height="13.3" fill="#cbb9e1" stroke="#2b2927" stroke-width="1.5"/>
<rect x="1273" y="450.6" width="6" height="13.3" fill="#fff" stroke="#2b2927" stroke-width="1.1"/>
<rect x="1438.4" y="450.6" width="6.6" height="13.3" fill="#fff" stroke="#2b2927" stroke-width="1.1"/>
<text x="1280.8" y="460.8" font-size="10.7" fill="#2b2522" textLength="23" lengthAdjust="spacingAndGlyphs">2400</text>
<path d="M1306.75 454.75L1307.46 456.68L1309.51 456.75L1307.89 458.02L1308.45 460.00L1306.75 458.85L1305.05 460.00L1305.61 458.02L1303.99 456.75L1306.04 456.68Z" fill="#222"/>
<text x="1408.2" y="460.8" font-size="10.7" fill="#2b2522" textLength="23" lengthAdjust="spacingAndGlyphs">2431</text>
<path d="M1434.15 454.75L1434.86 456.68L1436.91 456.75L1435.29 458.02L1435.85 460.00L1434.15 458.85L1432.45 460.00L1433.01 458.02L1431.39 456.75L1433.44 456.68Z" fill="#222"/>
<rect x="1279" y="463.9" width="32" height="13.3" fill="#cbb9e1" stroke="#2b2927" stroke-width="1.5"/>
<rect x="1406.4" y="463.9" width="32" height="13.3" fill="#cbb9e1" stroke="#2b2927" stroke-width="1.5"/>
<rect x="1273" y="463.9" width="6" height="13.3" fill="#fff" stroke="#2b2927" stroke-width="1.1"/>
<rect x="1438.4" y="463.9" width="6.6" height="13.3" fill="#fff" stroke="#2b2927" stroke-width="1.1"/>
<text x="1280.8" y="474.1" font-size="10.7" fill="#2b2522" textLength="23" lengthAdjust="spacingAndGlyphs">2404</text>
<path d="M1306.75 468.10L1307.46 470.03L1309.51 470.10L1307.89 471.37L1308.45 473.35L1306.75 472.20L1305.05 473.35L1305.61 471.37L1303.99 470.10L1306.04 470.03Z" fill="#222"/>
<text x="1408.2" y="474.1" font-size="10.7" fill="#2b2522" textLength="23" lengthAdjust="spacingAndGlyphs">2435</text>
<path d="M1434.15 468.10L1434.86 470.03L1436.91 470.10L1435.29 471.37L1435.85 473.35L1434.15 472.20L1432.45 473.35L1433.01 471.37L1431.39 470.10L1433.44 470.03Z" fill="#222"/>
<rect x="1279" y="477.2" width="32" height="13.3" fill="#cbb9e1" stroke="#2b2927" stroke-width="1.5"/>
<rect x="1406.4" y="477.2" width="32" height="13.3" fill="#cbb9e1" stroke="#2b2927" stroke-width="1.5"/>
<rect x="1273" y="477.2" width="6" height="13.3" fill="#fff" stroke="#2b2927" stroke-width="1.1"/>
<rect x="1438.4" y="477.2" width="6.6" height="13.3" fill="#fff" stroke="#2b2927" stroke-width="1.1"/>
<text x="1280.8" y="487.4" font-size="10.7" fill="#2b2522" textLength="23" lengthAdjust="spacingAndGlyphs">2408</text>
<path d="M1306.75 481.45L1307.46 483.38L1309.51 483.45L1307.89 484.72L1308.45 486.70L1306.75 485.55L1305.05 486.70L1305.61 484.72L1303.99 483.45L1306.04 483.38Z" fill="#222"/>
<text x="1408.2" y="487.4" font-size="10.7" fill="#2b2522" textLength="23" lengthAdjust="spacingAndGlyphs">2437</text>
<path d="M1434.15 481.45L1434.86 483.38L1436.91 483.45L1435.29 484.72L1435.85 486.70L1434.15 485.55L1432.45 486.70L1433.01 484.72L1431.39 483.45L1433.44 483.38Z" fill="#222"/>
<rect x="1279" y="490.6" width="32" height="13.3" fill="#cbb9e1" stroke="#2b2927" stroke-width="1.5"/>
<rect x="1406.4" y="490.6" width="32" height="13.3" fill="#cbb9e1" stroke="#2b2927" stroke-width="1.5"/>
<rect x="1273" y="490.6" width="6" height="13.3" fill="#fff" stroke="#2b2927" stroke-width="1.1"/>
<rect x="1438.4" y="490.6" width="6.6" height="13.3" fill="#fff" stroke="#2b2927" stroke-width="1.1"/>
<text x="1280.8" y="500.8" font-size="10.7" fill="#2b2522" textLength="23" lengthAdjust="spacingAndGlyphs">2412</text>
<path d="M1306.75 494.80L1307.46 496.73L1309.51 496.80L1307.89 498.07L1308.45 500.05L1306.75 498.90L1305.05 500.05L1305.61 498.07L1303.99 496.80L1306.04 496.73Z" fill="#222"/>
<text x="1408.2" y="500.8" font-size="10.7" fill="#2b2522" textLength="23" lengthAdjust="spacingAndGlyphs">2439</text>
<path d="M1434.15 494.80L1434.86 496.73L1436.91 496.80L1435.29 498.07L1435.85 500.05L1434.15 498.90L1432.45 500.05L1433.01 498.07L1431.39 496.80L1433.44 496.73Z" fill="#222"/>
<rect x="1279" y="503.9" width="32" height="13.3" fill="#cbb9e1" stroke="#2b2927" stroke-width="1.5"/>
<rect x="1406.4" y="503.9" width="32" height="13.3" fill="#cbb9e1" stroke="#2b2927" stroke-width="1.5"/>
<rect x="1273" y="503.9" width="6" height="13.3" fill="#fff" stroke="#2b2927" stroke-width="1.1"/>
<rect x="1438.4" y="503.9" width="6.6" height="13.3" fill="#fff" stroke="#2b2927" stroke-width="1.1"/>
<text x="1280.8" y="514.1" font-size="10.7" fill="#2b2522" textLength="23" lengthAdjust="spacingAndGlyphs">2414</text>
<path d="M1306.75 508.15L1307.46 510.08L1309.51 510.15L1307.89 511.42L1308.45 513.40L1306.75 512.25L1305.05 513.40L1305.61 511.42L1303.99 510.15L1306.04 510.08Z" fill="#222"/>
<text x="1408.2" y="514.1" font-size="10.7" fill="#2b2522" textLength="23" lengthAdjust="spacingAndGlyphs">2441</text>
<path d="M1434.15 508.15L1434.86 510.08L1436.91 510.15L1435.29 511.42L1435.85 513.40L1434.15 512.25L1432.45 513.40L1433.01 511.42L1431.39 510.15L1433.44 510.08Z" fill="#222"/>
<rect x="1272" y="517.3" width="39" height="13.2" fill="#e8ae22" stroke="#2b2927" stroke-width="1.5"/>
<rect x="1406.4" y="517.3" width="40" height="13.2" fill="#e8ae22" stroke="#2b2927" stroke-width="1.5"/>
<text x="1277.8" y="527.5" font-size="10.7" fill="#2b2522" textLength="23" lengthAdjust="spacingAndGlyphs">2416</text>
<text x="1411.5" y="527.5" font-size="10.7" fill="#2b2522" textLength="23" lengthAdjust="spacingAndGlyphs">2443</text>
<rect x="1272" y="530.5" width="39" height="13.2" fill="#e8ae22" stroke="#2b2927" stroke-width="1.5"/>
<rect x="1406.4" y="530.5" width="40" height="13.2" fill="#e8ae22" stroke="#2b2927" stroke-width="1.5"/>
<text x="1277.8" y="540.8" font-size="10.7" fill="#2b2522" textLength="23" lengthAdjust="spacingAndGlyphs">2418</text>
<path d="M1303.75 534.75L1304.46 536.68L1306.51 536.75L1304.89 538.02L1305.45 540.00L1303.75 538.85L1302.05 540.00L1302.61 538.02L1300.99 536.75L1303.04 536.68Z" fill="#222"/>
<text x="1411.5" y="540.8" font-size="10.7" fill="#2b2522" textLength="23" lengthAdjust="spacingAndGlyphs">2445</text>
<path d="M1437.45 534.75L1438.16 536.68L1440.21 536.75L1438.59 538.02L1439.15 540.00L1437.45 538.85L1435.75 540.00L1436.31 538.02L1434.69 536.75L1436.74 536.68Z" fill="#222"/>
<rect x="1272" y="543.8" width="39" height="13.2" fill="#e8ae22" stroke="#2b2927" stroke-width="1.5"/>
<rect x="1406.4" y="543.8" width="40" height="13.2" fill="#e8ae22" stroke="#2b2927" stroke-width="1.5"/>
<text x="1277.8" y="554.0" font-size="10.7" fill="#2b2522" textLength="23" lengthAdjust="spacingAndGlyphs">2420</text>
<path d="M1303.75 548.00L1304.46 549.93L1306.51 550.00L1304.89 551.27L1305.45 553.25L1303.75 552.10L1302.05 553.25L1302.61 551.27L1300.99 550.00L1303.04 549.93Z" fill="#222"/>
<text x="1411.5" y="554.0" font-size="10.7" fill="#2b2522" textLength="23" lengthAdjust="spacingAndGlyphs">2447</text>
<path d="M1437.45 548.00L1438.16 549.93L1440.21 550.00L1438.59 551.27L1439.15 553.25L1437.45 552.10L1435.75 553.25L1436.31 551.27L1434.69 550.00L1436.74 549.93Z" fill="#222"/>
<rect x="1272" y="557" width="39" height="13.2" fill="#e8ae22" stroke="#2b2927" stroke-width="1.5"/>
<rect x="1406.4" y="557" width="40" height="13.2" fill="#e8ae22" stroke="#2b2927" stroke-width="1.5"/>
<text x="1277.8" y="567.2" font-size="10.7" fill="#2b2522" textLength="23" lengthAdjust="spacingAndGlyphs">2424</text>
<text x="1411.5" y="567.2" font-size="10.7" fill="#2b2522" textLength="23" lengthAdjust="spacingAndGlyphs">2449</text>
<rect x="1272" y="570.3" width="39" height="13.2" fill="#e8ae22" stroke="#2b2927" stroke-width="1.5"/>
<rect x="1406.4" y="570.3" width="40" height="13.2" fill="#e8ae22" stroke="#2b2927" stroke-width="1.5"/>
<text x="1277.8" y="580.5" font-size="10.7" fill="#2b2522" textLength="23" lengthAdjust="spacingAndGlyphs">2428</text>
<path d="M1303.75 574.50L1304.46 576.43L1306.51 576.50L1304.89 577.77L1305.45 579.75L1303.75 578.60L1302.05 579.75L1302.61 577.77L1300.99 576.50L1303.04 576.43Z" fill="#222"/>
<text x="1411.5" y="580.5" font-size="10.7" fill="#2b2522" textLength="23" lengthAdjust="spacingAndGlyphs">2453</text>
<path d="M1437.45 574.50L1438.16 576.43L1440.21 576.50L1438.59 577.77L1439.15 579.75L1437.45 578.60L1435.75 579.75L1436.31 577.77L1434.69 576.50L1436.74 576.43Z" fill="#222"/>
<rect x="1272" y="583.5" width="39" height="13.2" fill="#e8ae22" stroke="#2b2927" stroke-width="1.5"/>
<rect x="1406.4" y="583.5" width="40" height="13.2" fill="#e8ae22" stroke="#2b2927" stroke-width="1.5"/>
<text x="1277.8" y="593.8" font-size="10.7" fill="#2b2522" textLength="23" lengthAdjust="spacingAndGlyphs">2432</text>
<text x="1411.5" y="593.8" font-size="10.7" fill="#2b2522" textLength="23" lengthAdjust="spacingAndGlyphs">2457</text>
<rect x="1272" y="596.8" width="39" height="13.2" fill="#e8ae22" stroke="#2b2927" stroke-width="1.5"/>
<rect x="1406.4" y="596.8" width="40" height="13.2" fill="#e8ae22" stroke="#2b2927" stroke-width="1.5"/>
<text x="1277.8" y="607.0" font-size="10.7" fill="#2b2522" textLength="23" lengthAdjust="spacingAndGlyphs">2436</text>
<path d="M1303.75 601.00L1304.46 602.93L1306.51 603.00L1304.89 604.27L1305.45 606.25L1303.75 605.10L1302.05 606.25L1302.61 604.27L1300.99 603.00L1303.04 602.93Z" fill="#222"/>
<text x="1411.5" y="607.0" font-size="10.7" fill="#2b2522" textLength="23" lengthAdjust="spacingAndGlyphs">2461</text>
<path d="M1437.45 601.00L1438.16 602.93L1440.21 603.00L1438.59 604.27L1439.15 606.25L1437.45 605.10L1435.75 606.25L1436.31 604.27L1434.69 603.00L1436.74 602.93Z" fill="#222"/>
<rect x="1272" y="610" width="39" height="13.2" fill="#e8ae22" stroke="#2b2927" stroke-width="1.5"/>
<rect x="1406.4" y="610" width="40" height="13.2" fill="#e8ae22" stroke="#2b2927" stroke-width="1.5"/>
<text x="1277.8" y="620.2" font-size="10.7" fill="#2b2522" textLength="23" lengthAdjust="spacingAndGlyphs">2440</text>
<text x="1411.5" y="620.2" font-size="10.7" fill="#2b2522" textLength="23" lengthAdjust="spacingAndGlyphs">2465</text>
<rect x="1272" y="623.3" width="39" height="13.2" fill="#e8ae22" stroke="#2b2927" stroke-width="1.5"/>
<rect x="1406.4" y="623.3" width="40" height="13.2" fill="#e8ae22" stroke="#2b2927" stroke-width="1.5"/>
<text x="1277.8" y="633.5" font-size="10.7" fill="#2b2522" textLength="23" lengthAdjust="spacingAndGlyphs">2444</text>
<path d="M1303.75 627.50L1304.46 629.43L1306.51 629.50L1304.89 630.77L1305.45 632.75L1303.75 631.60L1302.05 632.75L1302.61 630.77L1300.99 629.50L1303.04 629.43Z" fill="#222"/>
<text x="1411.5" y="633.5" font-size="10.7" fill="#2b2522" textLength="23" lengthAdjust="spacingAndGlyphs">2469</text>
<path d="M1437.45 627.50L1438.16 629.43L1440.21 629.50L1438.59 630.77L1439.15 632.75L1437.45 631.60L1435.75 632.75L1436.31 630.77L1434.69 629.50L1436.74 629.43Z" fill="#222"/>
<rect x="1272" y="636.5" width="39" height="13.2" fill="#e8ae22" stroke="#2b2927" stroke-width="1.5"/>
<rect x="1406.4" y="636.5" width="40" height="13.2" fill="#e8ae22" stroke="#2b2927" stroke-width="1.5"/>
<text x="1277.8" y="646.8" font-size="10.7" fill="#2b2522" textLength="23" lengthAdjust="spacingAndGlyphs">2448</text>
<text x="1411.5" y="646.8" font-size="10.7" fill="#2b2522" textLength="23" lengthAdjust="spacingAndGlyphs">2473</text>
<rect x="1272" y="649.8" width="39" height="28.6" fill="#ec5723" stroke="#2b2927" stroke-width="1.5"/>
<rect x="1272" y="678.5" width="39" height="13.2" fill="#ec5723" stroke="#2b2927" stroke-width="1.5"/>
<path d="M1294.3 656.4H1311V685H1303V678H1294.3Z" fill="#dcdcdf" stroke="#2b2927" stroke-width="1.5"/>
<rect x="1272" y="692.3" width="39" height="14" fill="#e8ae22" stroke="#2b2927" stroke-width="1.5"/>
<rect x="1272" y="706.3" width="39" height="60" fill="#ec5723" stroke="#2b2927" stroke-width="1.5"/>
<text x="1285" y="665" font-size="10.2" fill="#2b2522" text-anchor="middle" font-weight="400" transform="rotate(-90 1285 665)">2450</text>
<text x="1277.8" y="688.8" font-size="10.7" fill="#2b2522" textLength="23" lengthAdjust="spacingAndGlyphs">2456</text>
<text x="1277.8" y="702.8" font-size="10.7" fill="#2b2522" textLength="23" lengthAdjust="spacingAndGlyphs">2460</text>
<text x="1277.8" y="716.5" font-size="10.7" fill="#2b2522" textLength="23" lengthAdjust="spacingAndGlyphs">2464</text>
<rect x="1406.4" y="649.8" width="40" height="42" fill="#ec5723" stroke="#2b2927" stroke-width="1.5"/>
<rect x="1406.4" y="691.2" width="40" height="15" fill="#e8ae22" stroke="#2b2927" stroke-width="1.5"/>
<rect x="1422.4" y="676.6" width="23" height="29" fill="#e8ae22" stroke="#2b2927" stroke-width="1.5"/>
<rect x="1406.4" y="706.3" width="40" height="60" fill="#ec5723" stroke="#2b2927" stroke-width="1.5"/>
<rect x="1407" y="656.4" width="15.4" height="21.6" fill="#dcdcdf" stroke="#2b2927" stroke-width="1.5"/>
<rect x="1407" y="678" width="15.4" height="13.2" fill="#dcdcdf" stroke="#2b2927" stroke-width="1.5"/>
<rect x="1411.8" y="664.5" width="4.2" height="4.2" fill="#444"/>
<line x1="1422.4" y1="651" x2="1422.4" y2="677" stroke="#2b2927" stroke-width="1.5"/>
<text x="1438" y="664" font-size="10.2" fill="#2b2522" text-anchor="middle" font-weight="400" transform="rotate(-90 1438 664)">2477</text>
<text x="1438" y="691" font-size="10.2" fill="#2b2522" text-anchor="middle" font-weight="400" transform="rotate(-90 1438 691)">2485</text>
<text x="1442" y="716.5" font-size="10.7" fill="#2b2522" text-anchor="end" font-weight="400">2489</text>
<rect x="1311.6" y="420" width="7.9" height="310" fill="#f2e3c5"/>
<rect x="1397.5" y="420" width="8.4" height="310" fill="#f2e3c5"/>
<rect x="1311.6" y="718.4" width="94" height="8.5" fill="#f2e3c5"/>
<rect x="1311.6" y="503.9" width="94" height="13.4" fill="#f2e3c5"/>
<rect x="1320" y="423.8" width="30.7" height="13.3" fill="#f5a623" stroke="#2b2927" stroke-width="1.5"/>
<text x="1323.8" y="434.0" font-size="10.7" fill="#2b2522" textLength="23" lengthAdjust="spacingAndGlyphs">2394</text>
<rect x="1320" y="437.2" width="30.7" height="13.3" fill="#f5a623" stroke="#2b2927" stroke-width="1.5"/>
<text x="1323.8" y="447.4" font-size="10.7" fill="#2b2522" textLength="23" lengthAdjust="spacingAndGlyphs">2398</text>
<rect x="1320" y="450.6" width="30.7" height="13.3" fill="#f5a623" stroke="#2b2927" stroke-width="1.5"/>
<text x="1323.8" y="460.8" font-size="10.7" fill="#2b2522" textLength="23" lengthAdjust="spacingAndGlyphs">2402</text>
<rect x="1320" y="463.9" width="30.7" height="13.3" fill="#f5a623" stroke="#2b2927" stroke-width="1.5"/>
<text x="1323.8" y="474.1" font-size="10.7" fill="#2b2522" textLength="23" lengthAdjust="spacingAndGlyphs">2406</text>
<rect x="1320" y="477.2" width="30.7" height="13.3" fill="#f5a623" stroke="#2b2927" stroke-width="1.5"/>
<text x="1323.8" y="487.4" font-size="10.7" fill="#2b2522" textLength="23" lengthAdjust="spacingAndGlyphs">2410</text>
<circle cx="1349.8" cy="482.2" r="1" fill="#222"/><circle cx="1349.8" cy="485.9" r="1" fill="#222"/>
<rect x="1320" y="490.6" width="30.7" height="13.3" fill="#dcdcdf" stroke="#2b2927" stroke-width="1.5"/>
<rect x="1350.7" y="420" width="15.3" height="84" fill="#dcdcdf" stroke="#2b2927" stroke-width="1.0"/>
<rect x="1349.5" y="490.6" width="18" height="13.3" fill="#e7dcc4" stroke="#2b2927" stroke-width="1.5"/>
<line x1="1351" y1="491" x2="1351" y2="503.5" stroke="#8a8070" stroke-width="0.7"/>
<line x1="1355.5" y1="491" x2="1355.5" y2="503.5" stroke="#8a8070" stroke-width="0.7"/>
<line x1="1360" y1="491" x2="1360" y2="503.5" stroke="#8a8070" stroke-width="0.7"/>
<line x1="1364.5" y1="491" x2="1364.5" y2="503.5" stroke="#8a8070" stroke-width="0.7"/>
<line x1="1349.5" y1="497" x2="1367.5" y2="497" stroke="#8a8070" stroke-width="0.7"/>
<rect x="1366" y="423.8" width="30.6" height="13.3" fill="#f5a623" stroke="#2b2927" stroke-width="1.5"/>
<text x="1369.8" y="434.0" font-size="10.7" fill="#2b2522" textLength="23" lengthAdjust="spacingAndGlyphs">2425</text>
<rect x="1366" y="437.2" width="30.6" height="13.3" fill="#f5a623" stroke="#2b2927" stroke-width="1.5"/>
<text x="1369.8" y="447.4" font-size="10.7" fill="#2b2522" textLength="23" lengthAdjust="spacingAndGlyphs">2429</text>
<rect x="1366" y="450.6" width="30.6" height="13.3" fill="#f5a623" stroke="#2b2927" stroke-width="1.5"/>
<text x="1369.8" y="460.8" font-size="10.7" fill="#2b2522" textLength="23" lengthAdjust="spacingAndGlyphs">2433</text>
<circle cx="1395.8" cy="455.6" r="1" fill="#222"/><circle cx="1395.8" cy="459.2" r="1" fill="#222"/>
<rect x="1366" y="463.9" width="30.6" height="40" fill="#dcdcdf" stroke="#2b2927" stroke-width="1.5"/>
<rect x="1320" y="517.3" width="27.2" height="40" fill="#dcdcdf" stroke="#2b2927" stroke-width="1.4"/>
<rect x="1369.7" y="517.3" width="28" height="40" fill="#dcdcdf" stroke="#2b2927" stroke-width="1.4"/>
<rect x="1333.5" y="518.5" width="13.7" height="12.6" fill="#f0a3cb" stroke="#2b2927" stroke-width="1.5"/>
<text x="1340.3" y="527.8" font-size="8.4" fill="#4a3440" text-anchor="middle" font-weight="400">EL</text>
<rect x="1370.5" y="518.5" width="13.7" height="12.6" fill="#f0a3cb" stroke="#2b2927" stroke-width="1.5"/>
<text x="1377.3" y="527.8" font-size="8.4" fill="#4a3440" text-anchor="middle" font-weight="400">EL</text>
<rect x="1333.5" y="531.1" width="13.7" height="12.6" fill="#f0a3cb" stroke="#2b2927" stroke-width="1.5"/>
<text x="1340.3" y="540.4" font-size="8.4" fill="#4a3440" text-anchor="middle" font-weight="400">EL</text>
<rect x="1370.5" y="531.1" width="13.7" height="12.6" fill="#f0a3cb" stroke="#2b2927" stroke-width="1.5"/>
<text x="1377.3" y="540.4" font-size="8.4" fill="#4a3440" text-anchor="middle" font-weight="400">EL</text>
<rect x="1347.5" y="557.3" width="22" height="161" fill="#dcdcdf" stroke="#2b2927" stroke-width="1.2"/>
<rect x="1320.3" y="557.3" width="27.2" height="13.2" fill="#fde1ea" stroke="#2b2927" stroke-width="1.5"/>
<rect x="1369.8" y="557.3" width="27" height="13.2" fill="#fde1ea" stroke="#2b2927" stroke-width="1.5"/>
<text x="1322.4" y="567.5" font-size="10.7" fill="#2b2522" textLength="23" lengthAdjust="spacingAndGlyphs">2422</text>
<text x="1371.8" y="567.5" font-size="10.7" fill="#2b2522" textLength="23" lengthAdjust="spacingAndGlyphs">2451</text>
<rect x="1320.3" y="570.5" width="27.2" height="13.2" fill="#fde1ea" stroke="#2b2927" stroke-width="1.5"/>
<rect x="1369.8" y="570.5" width="27" height="13.2" fill="#fde1ea" stroke="#2b2927" stroke-width="1.5"/>
<text x="1322.4" y="580.8" font-size="10.7" fill="#2b2522" textLength="23" lengthAdjust="spacingAndGlyphs">2426</text>
<text x="1371.8" y="580.8" font-size="10.7" fill="#2b2522" textLength="23" lengthAdjust="spacingAndGlyphs">2455</text>
<rect x="1320.3" y="583.8" width="27.2" height="13.2" fill="#fde1ea" stroke="#2b2927" stroke-width="1.5"/>
<rect x="1369.8" y="583.8" width="27" height="13.2" fill="#fde1ea" stroke="#2b2927" stroke-width="1.5"/>
<text x="1322.4" y="594.0" font-size="10.7" fill="#2b2522" textLength="23" lengthAdjust="spacingAndGlyphs">2430</text>
<text x="1371.8" y="594.0" font-size="10.7" fill="#2b2522" textLength="23" lengthAdjust="spacingAndGlyphs">2459</text>
<rect x="1320.3" y="597" width="27.2" height="13.2" fill="#fde1ea" stroke="#2b2927" stroke-width="1.5"/>
<rect x="1369.8" y="597" width="27" height="13.2" fill="#fde1ea" stroke="#2b2927" stroke-width="1.5"/>
<text x="1322.4" y="607.2" font-size="10.7" fill="#2b2522" textLength="23" lengthAdjust="spacingAndGlyphs">2434</text>
<text x="1371.8" y="607.2" font-size="10.7" fill="#2b2522" textLength="23" lengthAdjust="spacingAndGlyphs">2463</text>
<rect x="1320.3" y="610.3" width="27.2" height="13.2" fill="#fde1ea" stroke="#2b2927" stroke-width="1.5"/>
<rect x="1369.8" y="610.3" width="27" height="13.2" fill="#fde1ea" stroke="#2b2927" stroke-width="1.5"/>
<text x="1322.4" y="620.5" font-size="10.7" fill="#2b2522" textLength="23" lengthAdjust="spacingAndGlyphs">2438</text>
<text x="1371.8" y="620.5" font-size="10.7" fill="#2b2522" textLength="23" lengthAdjust="spacingAndGlyphs">2467</text>
<rect x="1320.3" y="623.5" width="27.2" height="13.2" fill="#fde1ea" stroke="#2b2927" stroke-width="1.5"/>
<rect x="1369.8" y="623.5" width="27" height="13.2" fill="#fde1ea" stroke="#2b2927" stroke-width="1.5"/>
<text x="1322.4" y="633.8" font-size="10.7" fill="#2b2522" textLength="23" lengthAdjust="spacingAndGlyphs">2442</text>
<text x="1371.8" y="633.8" font-size="10.7" fill="#2b2522" textLength="23" lengthAdjust="spacingAndGlyphs">2471</text>
<rect x="1320.3" y="636.8" width="27.2" height="13.2" fill="#fde1ea" stroke="#2b2927" stroke-width="1.5"/>
<rect x="1369.8" y="636.8" width="27" height="13.2" fill="#fde1ea" stroke="#2b2927" stroke-width="1.5"/>
<text x="1322.4" y="647.0" font-size="10.7" fill="#2b2522" textLength="23" lengthAdjust="spacingAndGlyphs">2446</text>
<text x="1371.8" y="647.0" font-size="10.7" fill="#2b2522" textLength="23" lengthAdjust="spacingAndGlyphs">2475</text>
<rect x="1320.3" y="650" width="27.2" height="13.2" fill="#fde1ea" stroke="#2b2927" stroke-width="1.5"/>
<rect x="1369.8" y="650" width="27" height="13.2" fill="#fde1ea" stroke="#2b2927" stroke-width="1.5"/>
<text x="1322.4" y="660.2" font-size="10.7" fill="#2b2522" textLength="23" lengthAdjust="spacingAndGlyphs">2452</text>
<text x="1371.8" y="660.2" font-size="10.7" fill="#2b2522" textLength="23" lengthAdjust="spacingAndGlyphs">2479</text>
<rect x="1320.3" y="663.3" width="27.2" height="13.2" fill="#fde1ea" stroke="#2b2927" stroke-width="1.5"/>
<rect x="1369.8" y="663.3" width="27" height="13.2" fill="#fde1ea" stroke="#2b2927" stroke-width="1.5"/>
<text x="1322.4" y="673.5" font-size="10.7" fill="#2b2522" textLength="23" lengthAdjust="spacingAndGlyphs">2454</text>
<text x="1371.8" y="673.5" font-size="10.7" fill="#2b2522" textLength="23" lengthAdjust="spacingAndGlyphs">2481</text>
<rect x="1320.3" y="676.5" width="27.2" height="13.2" fill="#fde1ea" stroke="#2b2927" stroke-width="1.5"/>
<rect x="1369.8" y="676.5" width="27" height="13.2" fill="#fde1ea" stroke="#2b2927" stroke-width="1.5"/>
<text x="1322.4" y="686.8" font-size="10.7" fill="#2b2522" textLength="23" lengthAdjust="spacingAndGlyphs">2458</text>
<text x="1371.8" y="686.8" font-size="10.7" fill="#2b2522" textLength="23" lengthAdjust="spacingAndGlyphs">2483</text>
<rect x="1320.3" y="689.8" width="27.2" height="13.2" fill="#fde1ea" stroke="#2b2927" stroke-width="1.5"/>
<rect x="1369.8" y="689.8" width="27" height="13.2" fill="#fde1ea" stroke="#2b2927" stroke-width="1.5"/>
<text x="1322.4" y="700.0" font-size="10.7" fill="#2b2522" textLength="23" lengthAdjust="spacingAndGlyphs">2462</text>
<text x="1371.8" y="700.0" font-size="10.7" fill="#2b2522" textLength="23" lengthAdjust="spacingAndGlyphs">2487</text>
<rect x="1320.3" y="703" width="27.2" height="13.2" fill="#fde1ea" stroke="#2b2927" stroke-width="1.5"/>
<rect x="1369.8" y="703" width="27" height="13.2" fill="#fde1ea" stroke="#2b2927" stroke-width="1.5"/>
<text x="1322.4" y="713.2" font-size="10.7" fill="#2b2522" textLength="23" lengthAdjust="spacingAndGlyphs">2466</text>
<text x="1371.8" y="713.2" font-size="10.7" fill="#2b2522" textLength="23" lengthAdjust="spacingAndGlyphs">2491</text>
<rect x="1310.9" y="433.9" width="2" height="6.5" fill="#2b2927"/>
<rect x="1310.9" y="447.3" width="2" height="6.5" fill="#2b2927"/>
<rect x="1310.9" y="460.6" width="2" height="6.5" fill="#2b2927"/>
<rect x="1310.9" y="474" width="2" height="6.5" fill="#2b2927"/>
<rect x="1310.9" y="487.3" width="2" height="6.5" fill="#2b2927"/>
<rect x="1310.9" y="500.7" width="2" height="6.5" fill="#2b2927"/>
<rect x="1310.9" y="527.3" width="2" height="6.5" fill="#2b2927"/>
<rect x="1310.9" y="540.5" width="2" height="6.5" fill="#2b2927"/>
<rect x="1310.9" y="553.8" width="2" height="6.5" fill="#2b2927"/>
<rect x="1310.9" y="567" width="2" height="6.5" fill="#2b2927"/>
<rect x="1310.9" y="580.3" width="2" height="6.5" fill="#2b2927"/>
<rect x="1310.9" y="593.5" width="2" height="6.5" fill="#2b2927"/>
<rect x="1310.9" y="606.8" width="2" height="6.5" fill="#2b2927"/>
<rect x="1310.9" y="620" width="2" height="6.5" fill="#2b2927"/>
<rect x="1310.9" y="633.3" width="2" height="6.5" fill="#2b2927"/>
<rect x="1310.9" y="646.5" width="2" height="6.5" fill="#2b2927"/>
<rect x="1310.9" y="659.8" width="2" height="6.5" fill="#2b2927"/>
<rect x="1310.9" y="673" width="2" height="6.5" fill="#2b2927"/>
<rect x="1310.9" y="686.3" width="2" height="6.5" fill="#2b2927"/>
<rect x="1310.9" y="699.5" width="2" height="6.5" fill="#2b2927"/>
<rect x="1404.9" y="433.9" width="2" height="6.5" fill="#2b2927"/>
<rect x="1404.9" y="447.3" width="2" height="6.5" fill="#2b2927"/>
<rect x="1404.9" y="460.6" width="2" height="6.5" fill="#2b2927"/>
<rect x="1404.9" y="474" width="2" height="6.5" fill="#2b2927"/>
<rect x="1404.9" y="487.3" width="2" height="6.5" fill="#2b2927"/>
<rect x="1404.9" y="500.7" width="2" height="6.5" fill="#2b2927"/>
<rect x="1404.9" y="527.3" width="2" height="6.5" fill="#2b2927"/>
<rect x="1404.9" y="540.5" width="2" height="6.5" fill="#2b2927"/>
<rect x="1404.9" y="553.8" width="2" height="6.5" fill="#2b2927"/>
<rect x="1404.9" y="567" width="2" height="6.5" fill="#2b2927"/>
<rect x="1404.9" y="580.3" width="2" height="6.5" fill="#2b2927"/>
<rect x="1404.9" y="593.5" width="2" height="6.5" fill="#2b2927"/>
<rect x="1404.9" y="606.8" width="2" height="6.5" fill="#2b2927"/>
<rect x="1404.9" y="620" width="2" height="6.5" fill="#2b2927"/>
<rect x="1404.9" y="633.3" width="2" height="6.5" fill="#2b2927"/>
<rect x="1404.9" y="646.5" width="2" height="6.5" fill="#2b2927"/>
<rect x="1404.9" y="659.8" width="2" height="6.5" fill="#2b2927"/>
<rect x="1404.9" y="673" width="2" height="6.5" fill="#2b2927"/>
<rect x="1404.9" y="686.3" width="2" height="6.5" fill="#2b2927"/>
<rect x="1404.9" y="699.5" width="2" height="6.5" fill="#2b2927"/>
<rect x="1318.8" y="567.5" width="1.8" height="5.5" fill="#2b2927"/>
<rect x="1318.8" y="580.8" width="1.8" height="5.5" fill="#2b2927"/>
<rect x="1318.8" y="594" width="1.8" height="5.5" fill="#2b2927"/>
<rect x="1318.8" y="607.3" width="1.8" height="5.5" fill="#2b2927"/>
<rect x="1318.8" y="620.5" width="1.8" height="5.5" fill="#2b2927"/>
<rect x="1318.8" y="633.8" width="1.8" height="5.5" fill="#2b2927"/>
<rect x="1318.8" y="647" width="1.8" height="5.5" fill="#2b2927"/>
<rect x="1318.8" y="660.3" width="1.8" height="5.5" fill="#2b2927"/>
<rect x="1318.8" y="673.5" width="1.8" height="5.5" fill="#2b2927"/>
<rect x="1318.8" y="686.8" width="1.8" height="5.5" fill="#2b2927"/>
<rect x="1318.8" y="700" width="1.8" height="5.5" fill="#2b2927"/>
<rect x="1318.8" y="713.3" width="1.8" height="5.5" fill="#2b2927"/>
<rect x="1396.4" y="567.5" width="1.8" height="5.5" fill="#2b2927"/>
<rect x="1396.4" y="580.8" width="1.8" height="5.5" fill="#2b2927"/>
<rect x="1396.4" y="594" width="1.8" height="5.5" fill="#2b2927"/>
<rect x="1396.4" y="607.3" width="1.8" height="5.5" fill="#2b2927"/>
<rect x="1396.4" y="620.5" width="1.8" height="5.5" fill="#2b2927"/>
<rect x="1396.4" y="633.8" width="1.8" height="5.5" fill="#2b2927"/>
<rect x="1396.4" y="647" width="1.8" height="5.5" fill="#2b2927"/>
<rect x="1396.4" y="660.3" width="1.8" height="5.5" fill="#2b2927"/>
<rect x="1396.4" y="673.5" width="1.8" height="5.5" fill="#2b2927"/>
<rect x="1396.4" y="686.8" width="1.8" height="5.5" fill="#2b2927"/>
<rect x="1396.4" y="700" width="1.8" height="5.5" fill="#2b2927"/>
<rect x="1396.4" y="713.3" width="1.8" height="5.5" fill="#2b2927"/>
<rect x="1260" y="726.8" width="200" height="40" fill="#ec5723"/>
<line x1="1318.6" y1="726.8" x2="1318.6" y2="765" stroke="#2b2927" stroke-width="1.6"/>
<line x1="1331.9" y1="726.8" x2="1331.9" y2="765" stroke="#2b2927" stroke-width="1.6"/>
<line x1="1345.8" y1="726.8" x2="1345.8" y2="765" stroke="#2b2927" stroke-width="1.6"/>
<line x1="1358.3" y1="726.8" x2="1358.3" y2="765" stroke="#2b2927" stroke-width="1.6"/>
<line x1="1371.6" y1="726.8" x2="1371.6" y2="765" stroke="#2b2927" stroke-width="1.6"/>
<line x1="1384.8" y1="726.8" x2="1384.8" y2="765" stroke="#2b2927" stroke-width="1.6"/>
<line x1="1398.7" y1="726.8" x2="1398.7" y2="765" stroke="#2b2927" stroke-width="1.6"/>
<text x="1328.8" y="743" font-size="10.2" fill="#2b2522" text-anchor="middle" font-weight="400" transform="rotate(-90 1328.8 743)">2472</text>
<text x="1342.4" y="743" font-size="10.2" fill="#2b2522" text-anchor="middle" font-weight="400" transform="rotate(-90 1342.4 743)">2474</text>
<text x="1355.6" y="743" font-size="10.2" fill="#2b2522" text-anchor="middle" font-weight="400" transform="rotate(-90 1355.6 743)">2476</text>
<text x="1368.5" y="743" font-size="10.2" fill="#2b2522" text-anchor="middle" font-weight="400" transform="rotate(-90 1368.5 743)">2501</text>
<text x="1381.8" y="743" font-size="10.2" fill="#2b2522" text-anchor="middle" font-weight="400" transform="rotate(-90 1381.8 743)">2499</text>
<text x="1395.3" y="743" font-size="10.2" fill="#2b2522" text-anchor="middle" font-weight="400" transform="rotate(-90 1395.3 743)">2497</text>
<path d="M1311 715.6L1281.7 731.6" fill="none" stroke="#2b2927" stroke-width="1.6"/>
<path d="M1311 726.8L1292.9 742.1" fill="none" stroke="#2b2927" stroke-width="1.6"/>
<path d="M1407 714.2L1414.7 715.6L1436.3 732.3" fill="none" stroke="#2b2927" stroke-width="1.6"/>
<path d="M1405.7 726.8L1425.2 742.1" fill="none" stroke="#2b2927" stroke-width="1.6"/>
<text x="1294.5" y="731.6" font-size="10" fill="#2b2522" text-anchor="middle" font-weight="400" transform="rotate(-40 1294.5 728)">2468</text>
<text x="1307" y="745" font-size="10" fill="#2b2522" text-anchor="middle" font-weight="400">2470</text>
<text x="1411" y="745" font-size="10" fill="#2b2522" text-anchor="middle" font-weight="400">2495</text>
<text x="1424.5" y="730.6" font-size="10" fill="#2b2522" text-anchor="middle" font-weight="400" transform="rotate(42 1424.5 727)">2493</text>
<line x1="1311.6" y1="718.4" x2="1311.6" y2="726.8" stroke="#2b2927" stroke-width="1.4"/>
<line x1="1406" y1="718.4" x2="1406" y2="726.8" stroke="#2b2927" stroke-width="1.4"/>
</g>
<path d="M1272.7 420V702C1272.7 748 1318 760.5 1359 760.5C1400 760.5 1445.3 748 1445.3 702V420Z" fill="none" stroke="#2b2927" stroke-width="1.8"/></svg></div>
<div class="exp" style="left:1481.5px;top:371px"><svg width="32" height="32" viewBox="0 0 32 32"><path d="M17.9 6.8H24.8V13.7M24.8 6.8L17.4 14.2M7.4 17.1V23.6H14.4M7.4 23.6L14.4 16.6" fill="none" stroke="#8c8c8c" stroke-width="1.6"/></svg></div>
<div class="card" style="left:68px;top:796px;width:347.5px;height:424px"><div style="position:absolute;left:0;right:0;top:87px;height:1.5px;background:#e2e3e3"></div></div>
<div class="t" style="left:97.2px;top:821.7px;font-size:15px;font-weight:700;color:#0d0d0d;transform:scaleX(0.9827);-webkit-text-stroke:0.35px #0d0d0d;">Deck 05 : Riviera</div>
<div class="t" style="left:97.2px;top:844.0px;font-size:15px;font-weight:400;color:#707070;transform:scaleX(0.9827);">Deck ID : 4023</div>
<div style="position:absolute;left:69.5px;top:885px;width:344.5px;height:333.5px;overflow:hidden;border-radius:0 0 10.5px 10.5px"><svg width="344.5" height="333.5" viewBox="69.5 885 344.5 333.5" style="filter:blur(0.3px)"><rect x="133.2" y="870" width="18.8" height="46.5" fill="#dcdcdf" stroke="#3b3937" stroke-width="1.1" rx="9.4"/>
<rect x="302.6" y="870" width="19.5" height="46.5" fill="#dcdcdf" stroke="#3b3937" stroke-width="1.1" rx="9.75"/>
<rect x="151.5" y="880" width="2.8" height="26.5" fill="#9a9896" stroke="#2b2927" stroke-width="0.8"/>
<rect x="300.5" y="880" width="2.8" height="26.5" fill="#9a9896" stroke="#2b2927" stroke-width="0.8"/>
<rect x="133.2" y="918.4" width="18.8" height="46" fill="#dcdcdf" stroke="#3b3937" stroke-width="1.1" rx="9.4"/>
<rect x="302.6" y="918.4" width="19.5" height="46" fill="#dcdcdf" stroke="#3b3937" stroke-width="1.1" rx="9.75"/>
<rect x="151.5" y="928.4" width="2.8" height="26" fill="#9a9896" stroke="#2b2927" stroke-width="0.8"/>
<rect x="300.5" y="928.4" width="2.8" height="26" fill="#9a9896" stroke="#2b2927" stroke-width="0.8"/>
<rect x="133.2" y="966.3" width="18.8" height="45.2" fill="#dcdcdf" stroke="#3b3937" stroke-width="1.1" rx="9.4"/>
<rect x="302.6" y="966.3" width="19.5" height="45.2" fill="#dcdcdf" stroke="#3b3937" stroke-width="1.1" rx="9.75"/>
<rect x="151.5" y="976.3" width="2.8" height="25.2" fill="#9a9896" stroke="#2b2927" stroke-width="0.8"/>
<rect x="300.5" y="976.3" width="2.8" height="25.2" fill="#9a9896" stroke="#2b2927" stroke-width="0.8"/>
<path d="M154 870V1172C154 1196.8 186.9 1217 227.4 1217C267.9 1217 300.7 1196.8 300.7 1172V870Z" fill="#dcdcdf"/>
<path d="M154 1050.8H170.2L182 1065.6H194.8V1048.9H203L204 1047.5H214.5V1009.5H240.1V1047.5H254L255 1048.9H260.7V1065.6H273L285 1050.8H300.7V1172C300.7 1196.8 267.9 1217 227.4 1217C186.9 1217 154 1196.8 154 1172Z" fill="#f2e3c5" stroke="#2b2927" stroke-width="1.5"/>
<path d="M154 1050.8V1033H163V1050.8" fill="#f2e3c5" stroke="#2b2927" stroke-width="1.5"/>
<path d="M300.7 1050.8V1033H291.7V1050.8" fill="#f2e3c5" stroke="#2b2927" stroke-width="1.5"/>
<rect x="214.5" y="989.8" width="25.6" height="19.7" fill="#f2e3c5" stroke="#2b2927" stroke-width="1.6"/>
<rect x="216" y="994" width="22.6" height="15" fill="#7d7366"/>
<line x1="216" y1="996" x2="238.6" y2="996" stroke="#e8dcc0" stroke-width="0.7"/>
<line x1="216" y1="999.4" x2="238.6" y2="999.4" stroke="#e8dcc0" stroke-width="0.7"/>
<line x1="216" y1="1002.8" x2="238.6" y2="1002.8" stroke="#e8dcc0" stroke-width="0.7"/>
<line x1="216" y1="1006.2" x2="238.6" y2="1006.2" stroke="#e8dcc0" stroke-width="0.7"/>
<line x1="221.6" y1="994" x2="221.6" y2="1009" stroke="#e8dcc0" stroke-width="0.7"/>
<line x1="227.2" y1="994" x2="227.2" y2="1009" stroke="#e8dcc0" stroke-width="0.7"/>
<line x1="232.8" y1="994" x2="232.8" y2="1009" stroke="#e8dcc0" stroke-width="0.7"/>
<rect x="200.7" y="1012.5" width="13.8" height="13.2" fill="#f0a3cb" stroke="#2b2927" stroke-width="1.5"/>
<text x="207.6" y="1022" font-size="8" fill="#4a3440" text-anchor="middle" font-weight="400">EL</text>
<rect x="240.1" y="1012.5" width="14.7" height="13.2" fill="#f0a3cb" stroke="#2b2927" stroke-width="1.5"/>
<text x="247.4" y="1022" font-size="8" fill="#4a3440" text-anchor="middle" font-weight="400">EL</text>
<rect x="200.7" y="1025.8" width="13.8" height="13.2" fill="#f0a3cb" stroke="#2b2927" stroke-width="1.5"/>
<text x="207.6" y="1035.2" font-size="8" fill="#4a3440" text-anchor="middle" font-weight="400">EL</text>
<rect x="240.1" y="1025.8" width="14.7" height="13.2" fill="#f0a3cb" stroke="#2b2927" stroke-width="1.5"/>
<text x="247.4" y="1035.2" font-size="8" fill="#4a3440" text-anchor="middle" font-weight="400">EL</text>
<line x1="214.5" y1="1009.5" x2="214.5" y2="1047.5" stroke="#2b2927" stroke-width="1.5"/>
<line x1="240.1" y1="1009.5" x2="240.1" y2="1047.5" stroke="#2b2927" stroke-width="1.5"/>
<text x="229" y="1032" font-size="7" fill="#3f3a36" text-anchor="middle" font-weight="400" transform="rotate(-90 225 1032)">AFT</text>
<text x="234" y="1036" font-size="7" fill="#3f3a36" text-anchor="middle" font-weight="400" transform="rotate(-90 234 1036)">ATRIUM</text>
<path d="M194.2 1065V1052.5H203V1049H214.5V1058L208 1065Z" fill="#f2e3c5" stroke="#2b2927" stroke-width="1.6"/>
<path d="M260.7 1065V1052.5H252V1049H240.1V1058L246.5 1065Z" fill="#f2e3c5" stroke="#2b2927" stroke-width="1.6"/>
<text x="203.5" y="1060.5" font-size="7" fill="#3f3a36" text-anchor="middle" font-weight="400">M</text>
<text x="250.5" y="1060.5" font-size="7" fill="#3f3a36" text-anchor="middle" font-weight="400">L</text>
<path d="M227.4 1058L208 1075L215 1086H240L247 1075Z" fill="#dcdcdf" stroke="#2b2927" stroke-width="1.2"/>
<path d="M205 1076L215 1088M249 1076L239 1088" fill="none" stroke="#5a5048" stroke-width="2.5"/>
<rect x="209" y="1088" width="5" height="10" fill="none" stroke="#5a5048" stroke-width="0.8"/>
<rect x="241" y="1088" width="5" height="10" fill="none" stroke="#5a5048" stroke-width="0.8"/>
<rect x="157" y="1062.5" width="10.5" height="5.6" fill="none" stroke="#4a4038" stroke-width="1.1" rx="2.5"/>
<line x1="159" y1="1065.3" x2="165.5" y2="1065.3" stroke="#4a4038" stroke-width="0.5"/>
<rect x="287.2" y="1062.5" width="10.5" height="5.6" fill="none" stroke="#4a4038" stroke-width="1.1" rx="2.5"/>
<line x1="289.2" y1="1065.3" x2="295.7" y2="1065.3" stroke="#4a4038" stroke-width="0.5"/>
<rect x="157" y="1070" width="10.5" height="5.6" fill="none" stroke="#4a4038" stroke-width="1.1" rx="2.5"/>
<line x1="159" y1="1072.8" x2="165.5" y2="1072.8" stroke="#4a4038" stroke-width="0.5"/>
<rect x="287.2" y="1070" width="10.5" height="5.6" fill="none" stroke="#4a4038" stroke-width="1.1" rx="2.5"/>
<line x1="289.2" y1="1072.8" x2="295.7" y2="1072.8" stroke="#4a4038" stroke-width="0.5"/>
<rect x="157" y="1077.5" width="10.5" height="5.6" fill="none" stroke="#4a4038" stroke-width="1.1" rx="2.5"/>
<line x1="159" y1="1080.3" x2="165.5" y2="1080.3" stroke="#4a4038" stroke-width="0.5"/>
<rect x="287.2" y="1077.5" width="10.5" height="5.6" fill="none" stroke="#4a4038" stroke-width="1.1" rx="2.5"/>
<line x1="289.2" y1="1080.3" x2="295.7" y2="1080.3" stroke="#4a4038" stroke-width="0.5"/>
<rect x="157" y="1085" width="10.5" height="5.6" fill="none" stroke="#4a4038" stroke-width="1.1" rx="2.5"/>
<line x1="159" y1="1087.8" x2="165.5" y2="1087.8" stroke="#4a4038" stroke-width="0.5"/>
<rect x="287.2" y="1085" width="10.5" height="5.6" fill="none" stroke="#4a4038" stroke-width="1.1" rx="2.5"/>
<line x1="289.2" y1="1087.8" x2="295.7" y2="1087.8" stroke="#4a4038" stroke-width="0.5"/>
<rect x="157" y="1092.5" width="10.5" height="5.6" fill="none" stroke="#4a4038" stroke-width="1.1" rx="2.5"/>
<line x1="159" y1="1095.3" x2="165.5" y2="1095.3" stroke="#4a4038" stroke-width="0.5"/>
<rect x="287.2" y="1092.5" width="10.5" height="5.6" fill="none" stroke="#4a4038" stroke-width="1.1" rx="2.5"/>
<line x1="289.2" y1="1095.3" x2="295.7" y2="1095.3" stroke="#4a4038" stroke-width="0.5"/>
<rect x="157" y="1100" width="10.5" height="5.6" fill="none" stroke="#4a4038" stroke-width="1.1" rx="2.5"/>
<line x1="159" y1="1102.8" x2="165.5" y2="1102.8" stroke="#4a4038" stroke-width="0.5"/>
<rect x="287.2" y="1100" width="10.5" height="5.6" fill="none" stroke="#4a4038" stroke-width="1.1" rx="2.5"/>
<line x1="289.2" y1="1102.8" x2="295.7" y2="1102.8" stroke="#4a4038" stroke-width="0.5"/>
<rect x="157" y="1107.5" width="10.5" height="5.6" fill="none" stroke="#4a4038" stroke-width="1.1" rx="2.5"/>
<line x1="159" y1="1110.3" x2="165.5" y2="1110.3" stroke="#4a4038" stroke-width="0.5"/>
<rect x="287.2" y="1107.5" width="10.5" height="5.6" fill="none" stroke="#4a4038" stroke-width="1.1" rx="2.5"/>
<line x1="289.2" y1="1110.3" x2="295.7" y2="1110.3" stroke="#4a4038" stroke-width="0.5"/>
<rect x="157" y="1115" width="10.5" height="5.6" fill="none" stroke="#4a4038" stroke-width="1.1" rx="2.5"/>
<line x1="159" y1="1117.8" x2="165.5" y2="1117.8" stroke="#4a4038" stroke-width="0.5"/>
<rect x="287.2" y="1115" width="10.5" height="5.6" fill="none" stroke="#4a4038" stroke-width="1.1" rx="2.5"/>
<line x1="289.2" y1="1117.8" x2="295.7" y2="1117.8" stroke="#4a4038" stroke-width="0.5"/>
<rect x="157" y="1122.5" width="10.5" height="5.6" fill="none" stroke="#4a4038" stroke-width="1.1" rx="2.5"/>
<line x1="159" y1="1125.3" x2="165.5" y2="1125.3" stroke="#4a4038" stroke-width="0.5"/>
<rect x="287.2" y="1122.5" width="10.5" height="5.6" fill="none" stroke="#4a4038" stroke-width="1.1" rx="2.5"/>
<line x1="289.2" y1="1125.3" x2="295.7" y2="1125.3" stroke="#4a4038" stroke-width="0.5"/>
<rect x="157" y="1130" width="10.5" height="5.6" fill="none" stroke="#4a4038" stroke-width="1.1" rx="2.5"/>
<line x1="159" y1="1132.8" x2="165.5" y2="1132.8" stroke="#4a4038" stroke-width="0.5"/>
<rect x="287.2" y="1130" width="10.5" height="5.6" fill="none" stroke="#4a4038" stroke-width="1.1" rx="2.5"/>
<line x1="289.2" y1="1132.8" x2="295.7" y2="1132.8" stroke="#4a4038" stroke-width="0.5"/>
<rect x="157" y="1137.5" width="10.5" height="5.6" fill="none" stroke="#4a4038" stroke-width="1.1" rx="2.5"/>
<line x1="159" y1="1140.3" x2="165.5" y2="1140.3" stroke="#4a4038" stroke-width="0.5"/>
<rect x="287.2" y="1137.5" width="10.5" height="5.6" fill="none" stroke="#4a4038" stroke-width="1.1" rx="2.5"/>
<line x1="289.2" y1="1140.3" x2="295.7" y2="1140.3" stroke="#4a4038" stroke-width="0.5"/>
<rect x="157" y="1145" width="10.5" height="5.6" fill="none" stroke="#4a4038" stroke-width="1.1" rx="2.5"/>
<line x1="159" y1="1147.8" x2="165.5" y2="1147.8" stroke="#4a4038" stroke-width="0.5"/>
<rect x="287.2" y="1145" width="10.5" height="5.6" fill="none" stroke="#4a4038" stroke-width="1.1" rx="2.5"/>
<line x1="289.2" y1="1147.8" x2="295.7" y2="1147.8" stroke="#4a4038" stroke-width="0.5"/>
<rect x="157" y="1152.5" width="10.5" height="5.6" fill="none" stroke="#4a4038" stroke-width="1.1" rx="2.5"/>
<line x1="159" y1="1155.3" x2="165.5" y2="1155.3" stroke="#4a4038" stroke-width="0.5"/>
<rect x="287.2" y="1152.5" width="10.5" height="5.6" fill="none" stroke="#4a4038" stroke-width="1.1" rx="2.5"/>
<line x1="289.2" y1="1155.3" x2="295.7" y2="1155.3" stroke="#4a4038" stroke-width="0.5"/>
<rect x="157" y="1160" width="10.5" height="5.6" fill="none" stroke="#4a4038" stroke-width="1.1" rx="2.5"/>
<line x1="159" y1="1162.8" x2="165.5" y2="1162.8" stroke="#4a4038" stroke-width="0.5"/>
<rect x="287.2" y="1160" width="10.5" height="5.6" fill="none" stroke="#4a4038" stroke-width="1.1" rx="2.5"/>
<line x1="289.2" y1="1162.8" x2="295.7" y2="1162.8" stroke="#4a4038" stroke-width="0.5"/>
<rect x="157" y="1167.5" width="10.5" height="5.6" fill="none" stroke="#4a4038" stroke-width="1.1" rx="2.5"/>
<line x1="159" y1="1170.3" x2="165.5" y2="1170.3" stroke="#4a4038" stroke-width="0.5"/>
<rect x="287.2" y="1167.5" width="10.5" height="5.6" fill="none" stroke="#4a4038" stroke-width="1.1" rx="2.5"/>
<line x1="289.2" y1="1170.3" x2="295.7" y2="1170.3" stroke="#4a4038" stroke-width="0.5"/>
<rect x="157" y="1175" width="10.5" height="5.6" fill="none" stroke="#4a4038" stroke-width="1.1" rx="2.5"/>
<line x1="159" y1="1177.8" x2="165.5" y2="1177.8" stroke="#4a4038" stroke-width="0.5"/>
<rect x="287.2" y="1175" width="10.5" height="5.6" fill="none" stroke="#4a4038" stroke-width="1.1" rx="2.5"/>
<line x1="289.2" y1="1177.8" x2="295.7" y2="1177.8" stroke="#4a4038" stroke-width="0.5"/>
<rect x="160.2" y="1176.5" width="6.4" height="11" rx="2.8" fill="none" stroke="#4a4038" stroke-width="1.1" transform="rotate(75.0 163.4 1182.0)"/>
<rect x="163.8" y="1182.4" width="6.4" height="11" rx="2.8" fill="none" stroke="#4a4038" stroke-width="1.1" transform="rotate(65.6 167.0 1187.9)"/>
<rect x="169.1" y="1187.9" width="6.4" height="11" rx="2.8" fill="none" stroke="#4a4038" stroke-width="1.1" transform="rotate(56.2 172.3 1193.4)"/>
<rect x="175.8" y="1192.8" width="6.4" height="11" rx="2.8" fill="none" stroke="#4a4038" stroke-width="1.1" transform="rotate(46.9 179.0 1198.3)"/>
<rect x="183.8" y="1197.0" width="6.4" height="11" rx="2.8" fill="none" stroke="#4a4038" stroke-width="1.1" transform="rotate(37.5 187.0 1202.5)"/>
<rect x="192.9" y="1200.5" width="6.4" height="11" rx="2.8" fill="none" stroke="#4a4038" stroke-width="1.1" transform="rotate(28.1 196.1 1206.0)"/>
<rect x="202.9" y="1203.0" width="6.4" height="11" rx="2.8" fill="none" stroke="#4a4038" stroke-width="1.1" transform="rotate(18.8 206.1 1208.5)"/>
<rect x="213.4" y="1204.5" width="6.4" height="11" rx="2.8" fill="none" stroke="#4a4038" stroke-width="1.1" transform="rotate(9.4 216.6 1210.0)"/>
<rect x="224.2" y="1205.0" width="6.4" height="11" rx="2.8" fill="none" stroke="#4a4038" stroke-width="1.1" transform="rotate(0.0 227.4 1210.5)"/>
<rect x="235.0" y="1204.5" width="6.4" height="11" rx="2.8" fill="none" stroke="#4a4038" stroke-width="1.1" transform="rotate(-9.4 238.2 1210.0)"/>
<rect x="245.5" y="1203.0" width="6.4" height="11" rx="2.8" fill="none" stroke="#4a4038" stroke-width="1.1" transform="rotate(-18.8 248.7 1208.5)"/>
<rect x="255.5" y="1200.5" width="6.4" height="11" rx="2.8" fill="none" stroke="#4a4038" stroke-width="1.1" transform="rotate(-28.1 258.7 1206.0)"/>
<rect x="264.6" y="1197.0" width="6.4" height="11" rx="2.8" fill="none" stroke="#4a4038" stroke-width="1.1" transform="rotate(-37.5 267.8 1202.5)"/>
<rect x="272.6" y="1192.8" width="6.4" height="11" rx="2.8" fill="none" stroke="#4a4038" stroke-width="1.1" transform="rotate(-46.9 275.8 1198.3)"/>
<rect x="279.3" y="1187.9" width="6.4" height="11" rx="2.8" fill="none" stroke="#4a4038" stroke-width="1.1" transform="rotate(-56.2 282.5 1193.4)"/>
<rect x="284.6" y="1182.4" width="6.4" height="11" rx="2.8" fill="none" stroke="#4a4038" stroke-width="1.1" transform="rotate(-65.6 287.8 1187.9)"/>
<rect x="288.2" y="1176.5" width="6.4" height="11" rx="2.8" fill="none" stroke="#4a4038" stroke-width="1.1" transform="rotate(-75.0 291.4 1182.0)"/>
<rect x="173.5" y="1073" width="11" height="7.5" fill="none" stroke="#4a4038" stroke-width="0.6"/>
<line x1="179" y1="1073" x2="179" y2="1080.5" stroke="#4a4038" stroke-width="0.6"/>
<rect x="173.5" y="1081" width="11" height="7.5" fill="none" stroke="#4a4038" stroke-width="0.6"/>
<line x1="179" y1="1081" x2="179" y2="1088.5" stroke="#4a4038" stroke-width="0.6"/>
<rect x="173.5" y="1089" width="11" height="7.5" fill="none" stroke="#4a4038" stroke-width="0.6"/>
<line x1="179" y1="1089" x2="179" y2="1096.5" stroke="#4a4038" stroke-width="0.6"/>
<rect x="173.5" y="1097" width="11" height="7.5" fill="none" stroke="#4a4038" stroke-width="0.6"/>
<line x1="179" y1="1097" x2="179" y2="1104.5" stroke="#4a4038" stroke-width="0.6"/>
<rect x="173.5" y="1105" width="11" height="7.5" fill="none" stroke="#4a4038" stroke-width="0.6"/>
<line x1="179" y1="1105" x2="179" y2="1112.5" stroke="#4a4038" stroke-width="0.6"/>
<rect x="173.5" y="1113" width="11" height="7.5" fill="none" stroke="#4a4038" stroke-width="0.6"/>
<line x1="179" y1="1113" x2="179" y2="1120.5" stroke="#4a4038" stroke-width="0.6"/>
<rect x="261.5" y="1073" width="11" height="7.5" fill="none" stroke="#4a4038" stroke-width="0.6"/>
<line x1="267" y1="1073" x2="267" y2="1080.5" stroke="#4a4038" stroke-width="0.6"/>
<rect x="261.5" y="1081" width="11" height="7.5" fill="none" stroke="#4a4038" stroke-width="0.6"/>
<line x1="267" y1="1081" x2="267" y2="1088.5" stroke="#4a4038" stroke-width="0.6"/>
<rect x="261.5" y="1089" width="11" height="7.5" fill="none" stroke="#4a4038" stroke-width="0.6"/>
<line x1="267" y1="1089" x2="267" y2="1096.5" stroke="#4a4038" stroke-width="0.6"/>
<rect x="261.5" y="1097" width="11" height="7.5" fill="none" stroke="#4a4038" stroke-width="0.6"/>
<line x1="267" y1="1097" x2="267" y2="1104.5" stroke="#4a4038" stroke-width="0.6"/>
<rect x="261.5" y="1105" width="11" height="7.5" fill="none" stroke="#4a4038" stroke-width="0.6"/>
<line x1="267" y1="1105" x2="267" y2="1112.5" stroke="#4a4038" stroke-width="0.6"/>
<rect x="261.5" y="1113" width="11" height="7.5" fill="none" stroke="#4a4038" stroke-width="0.6"/>
<line x1="267" y1="1113" x2="267" y2="1120.5" stroke="#4a4038" stroke-width="0.6"/>
<line x1="188" y1="1073" x2="195" y2="1073" stroke="#4a4038" stroke-width="0.6"/>
<line x1="188" y1="1077" x2="195" y2="1077" stroke="#4a4038" stroke-width="0.6"/>
<line x1="188" y1="1081" x2="195" y2="1081" stroke="#4a4038" stroke-width="0.6"/>
<line x1="188" y1="1085" x2="195" y2="1085" stroke="#4a4038" stroke-width="0.6"/>
<line x1="188" y1="1089" x2="195" y2="1089" stroke="#4a4038" stroke-width="0.6"/>
<line x1="188" y1="1093" x2="195" y2="1093" stroke="#4a4038" stroke-width="0.6"/>
<line x1="188" y1="1097" x2="195" y2="1097" stroke="#4a4038" stroke-width="0.6"/>
<line x1="188" y1="1101" x2="195" y2="1101" stroke="#4a4038" stroke-width="0.6"/>
<line x1="188" y1="1105" x2="195" y2="1105" stroke="#4a4038" stroke-width="0.6"/>
<line x1="188" y1="1109" x2="195" y2="1109" stroke="#4a4038" stroke-width="0.6"/>
<line x1="188" y1="1113" x2="195" y2="1113" stroke="#4a4038" stroke-width="0.6"/>
<line x1="188" y1="1117" x2="195" y2="1117" stroke="#4a4038" stroke-width="0.6"/>
<line x1="191.5" y1="1073" x2="191.5" y2="1118" stroke="#4a4038" stroke-width="0.6"/>
<line x1="253" y1="1073" x2="260" y2="1073" stroke="#4a4038" stroke-width="0.6"/>
<line x1="253" y1="1077" x2="260" y2="1077" stroke="#4a4038" stroke-width="0.6"/>
<line x1="253" y1="1081" x2="260" y2="1081" stroke="#4a4038" stroke-width="0.6"/>
<line x1="253" y1="1085" x2="260" y2="1085" stroke="#4a4038" stroke-width="0.6"/>
<line x1="253" y1="1089" x2="260" y2="1089" stroke="#4a4038" stroke-width="0.6"/>
<line x1="253" y1="1093" x2="260" y2="1093" stroke="#4a4038" stroke-width="0.6"/>
<line x1="253" y1="1097" x2="260" y2="1097" stroke="#4a4038" stroke-width="0.6"/>
<line x1="253" y1="1101" x2="260" y2="1101" stroke="#4a4038" stroke-width="0.6"/>
<line x1="253" y1="1105" x2="260" y2="1105" stroke="#4a4038" stroke-width="0.6"/>
<line x1="253" y1="1109" x2="260" y2="1109" stroke="#4a4038" stroke-width="0.6"/>
<line x1="253" y1="1113" x2="260" y2="1113" stroke="#4a4038" stroke-width="0.6"/>
<line x1="253" y1="1117" x2="260" y2="1117" stroke="#4a4038" stroke-width="0.6"/>
<line x1="256.5" y1="1073" x2="256.5" y2="1118" stroke="#4a4038" stroke-width="0.6"/>
<line x1="195" y1="1121" x2="201" y2="1121" stroke="#4a4038" stroke-width="0.5"/>
<line x1="195" y1="1124.4" x2="201" y2="1124.4" stroke="#4a4038" stroke-width="0.5"/>
<line x1="195" y1="1127.8" x2="201" y2="1127.8" stroke="#4a4038" stroke-width="0.5"/>
<line x1="195" y1="1131.2" x2="201" y2="1131.2" stroke="#4a4038" stroke-width="0.5"/>
<line x1="195" y1="1134.6" x2="201" y2="1134.6" stroke="#4a4038" stroke-width="0.5"/>
<line x1="195" y1="1138" x2="201" y2="1138" stroke="#4a4038" stroke-width="0.5"/>
<line x1="195" y1="1141.4" x2="201" y2="1141.4" stroke="#4a4038" stroke-width="0.5"/>
<line x1="195" y1="1144.8" x2="201" y2="1144.8" stroke="#4a4038" stroke-width="0.5"/>
<line x1="195" y1="1148.2" x2="201" y2="1148.2" stroke="#4a4038" stroke-width="0.5"/>
<line x1="195" y1="1151.6" x2="201" y2="1151.6" stroke="#4a4038" stroke-width="0.5"/>
<line x1="195" y1="1155" x2="201" y2="1155" stroke="#4a4038" stroke-width="0.5"/>
<line x1="195" y1="1158.4" x2="201" y2="1158.4" stroke="#4a4038" stroke-width="0.5"/>
<line x1="195" y1="1161.8" x2="201" y2="1161.8" stroke="#4a4038" stroke-width="0.5"/>
<line x1="195" y1="1165.2" x2="201" y2="1165.2" stroke="#4a4038" stroke-width="0.5"/>
<line x1="254" y1="1121" x2="260" y2="1121" stroke="#4a4038" stroke-width="0.5"/>
<line x1="254" y1="1124.4" x2="260" y2="1124.4" stroke="#4a4038" stroke-width="0.5"/>
<line x1="254" y1="1127.8" x2="260" y2="1127.8" stroke="#4a4038" stroke-width="0.5"/>
<line x1="254" y1="1131.2" x2="260" y2="1131.2" stroke="#4a4038" stroke-width="0.5"/>
<line x1="254" y1="1134.6" x2="260" y2="1134.6" stroke="#4a4038" stroke-width="0.5"/>
<line x1="254" y1="1138" x2="260" y2="1138" stroke="#4a4038" stroke-width="0.5"/>
<line x1="254" y1="1141.4" x2="260" y2="1141.4" stroke="#4a4038" stroke-width="0.5"/>
<line x1="254" y1="1144.8" x2="260" y2="1144.8" stroke="#4a4038" stroke-width="0.5"/>
<line x1="254" y1="1148.2" x2="260" y2="1148.2" stroke="#4a4038" stroke-width="0.5"/>
<line x1="254" y1="1151.6" x2="260" y2="1151.6" stroke="#4a4038" stroke-width="0.5"/>
<line x1="254" y1="1155" x2="260" y2="1155" stroke="#4a4038" stroke-width="0.5"/>
<line x1="254" y1="1158.4" x2="260" y2="1158.4" stroke="#4a4038" stroke-width="0.5"/>
<line x1="254" y1="1161.8" x2="260" y2="1161.8" stroke="#4a4038" stroke-width="0.5"/>
<line x1="254" y1="1165.2" x2="260" y2="1165.2" stroke="#4a4038" stroke-width="0.5"/>
<circle cx="227" cy="1102" r="4.6" fill="none" stroke="#4a4038" stroke-width="0.8"/>
<circle cx="233.2" cy="1102.0" r="1.2" fill="none" stroke="#4a4038" stroke-width="0.6"/>
<circle cx="231.4" cy="1106.4" r="1.2" fill="none" stroke="#4a4038" stroke-width="0.6"/>
<circle cx="227.0" cy="1108.2" r="1.2" fill="none" stroke="#4a4038" stroke-width="0.6"/>
<circle cx="222.6" cy="1106.4" r="1.2" fill="none" stroke="#4a4038" stroke-width="0.6"/>
<circle cx="220.8" cy="1102.0" r="1.2" fill="none" stroke="#4a4038" stroke-width="0.6"/>
<circle cx="222.6" cy="1097.6" r="1.2" fill="none" stroke="#4a4038" stroke-width="0.6"/>
<circle cx="227.0" cy="1095.8" r="1.2" fill="none" stroke="#4a4038" stroke-width="0.6"/>
<circle cx="231.4" cy="1097.6" r="1.2" fill="none" stroke="#4a4038" stroke-width="0.6"/>
<circle cx="209.6" cy="1117.7" r="4.6" fill="none" stroke="#4a4038" stroke-width="0.8"/>
<circle cx="215.8" cy="1117.7" r="1.2" fill="none" stroke="#4a4038" stroke-width="0.6"/>
<circle cx="214.0" cy="1122.1" r="1.2" fill="none" stroke="#4a4038" stroke-width="0.6"/>
<circle cx="209.6" cy="1123.9" r="1.2" fill="none" stroke="#4a4038" stroke-width="0.6"/>
<circle cx="205.2" cy="1122.1" r="1.2" fill="none" stroke="#4a4038" stroke-width="0.6"/>
<circle cx="203.4" cy="1117.7" r="1.2" fill="none" stroke="#4a4038" stroke-width="0.6"/>
<circle cx="205.2" cy="1113.3" r="1.2" fill="none" stroke="#4a4038" stroke-width="0.6"/>
<circle cx="209.6" cy="1111.5" r="1.2" fill="none" stroke="#4a4038" stroke-width="0.6"/>
<circle cx="214.0" cy="1113.3" r="1.2" fill="none" stroke="#4a4038" stroke-width="0.6"/>
<circle cx="245" cy="1117.7" r="4.6" fill="none" stroke="#4a4038" stroke-width="0.8"/>
<circle cx="251.2" cy="1117.7" r="1.2" fill="none" stroke="#4a4038" stroke-width="0.6"/>
<circle cx="249.4" cy="1122.1" r="1.2" fill="none" stroke="#4a4038" stroke-width="0.6"/>
<circle cx="245.0" cy="1123.9" r="1.2" fill="none" stroke="#4a4038" stroke-width="0.6"/>
<circle cx="240.6" cy="1122.1" r="1.2" fill="none" stroke="#4a4038" stroke-width="0.6"/>
<circle cx="238.8" cy="1117.7" r="1.2" fill="none" stroke="#4a4038" stroke-width="0.6"/>
<circle cx="240.6" cy="1113.3" r="1.2" fill="none" stroke="#4a4038" stroke-width="0.6"/>
<circle cx="245.0" cy="1111.5" r="1.2" fill="none" stroke="#4a4038" stroke-width="0.6"/>
<circle cx="249.4" cy="1113.3" r="1.2" fill="none" stroke="#4a4038" stroke-width="0.6"/>
<circle cx="209.6" cy="1132.5" r="4.6" fill="none" stroke="#4a4038" stroke-width="0.8"/>
<circle cx="215.8" cy="1132.5" r="1.2" fill="none" stroke="#4a4038" stroke-width="0.6"/>
<circle cx="214.0" cy="1136.9" r="1.2" fill="none" stroke="#4a4038" stroke-width="0.6"/>
<circle cx="209.6" cy="1138.7" r="1.2" fill="none" stroke="#4a4038" stroke-width="0.6"/>
<circle cx="205.2" cy="1136.9" r="1.2" fill="none" stroke="#4a4038" stroke-width="0.6"/>
<circle cx="203.4" cy="1132.5" r="1.2" fill="none" stroke="#4a4038" stroke-width="0.6"/>
<circle cx="205.2" cy="1128.1" r="1.2" fill="none" stroke="#4a4038" stroke-width="0.6"/>
<circle cx="209.6" cy="1126.3" r="1.2" fill="none" stroke="#4a4038" stroke-width="0.6"/>
<circle cx="214.0" cy="1128.1" r="1.2" fill="none" stroke="#4a4038" stroke-width="0.6"/>
<circle cx="227.3" cy="1132.5" r="4.6" fill="none" stroke="#4a4038" stroke-width="0.8"/>
<circle cx="233.5" cy="1132.5" r="1.2" fill="none" stroke="#4a4038" stroke-width="0.6"/>
<circle cx="231.7" cy="1136.9" r="1.2" fill="none" stroke="#4a4038" stroke-width="0.6"/>
<circle cx="227.3" cy="1138.7" r="1.2" fill="none" stroke="#4a4038" stroke-width="0.6"/>
<circle cx="222.9" cy="1136.9" r="1.2" fill="none" stroke="#4a4038" stroke-width="0.6"/>
<circle cx="221.1" cy="1132.5" r="1.2" fill="none" stroke="#4a4038" stroke-width="0.6"/>
<circle cx="222.9" cy="1128.1" r="1.2" fill="none" stroke="#4a4038" stroke-width="0.6"/>
<circle cx="227.3" cy="1126.3" r="1.2" fill="none" stroke="#4a4038" stroke-width="0.6"/>
<circle cx="231.7" cy="1128.1" r="1.2" fill="none" stroke="#4a4038" stroke-width="0.6"/>
<circle cx="245" cy="1132.5" r="4.6" fill="none" stroke="#4a4038" stroke-width="0.8"/>
<circle cx="251.2" cy="1132.5" r="1.2" fill="none" stroke="#4a4038" stroke-width="0.6"/>
<circle cx="249.4" cy="1136.9" r="1.2" fill="none" stroke="#4a4038" stroke-width="0.6"/>
<circle cx="245.0" cy="1138.7" r="1.2" fill="none" stroke="#4a4038" stroke-width="0.6"/>
<circle cx="240.6" cy="1136.9" r="1.2" fill="none" stroke="#4a4038" stroke-width="0.6"/>
<circle cx="238.8" cy="1132.5" r="1.2" fill="none" stroke="#4a4038" stroke-width="0.6"/>
<circle cx="240.6" cy="1128.1" r="1.2" fill="none" stroke="#4a4038" stroke-width="0.6"/>
<circle cx="245.0" cy="1126.3" r="1.2" fill="none" stroke="#4a4038" stroke-width="0.6"/>
<circle cx="249.4" cy="1128.1" r="1.2" fill="none" stroke="#4a4038" stroke-width="0.6"/>
<circle cx="209.6" cy="1146.2" r="4.6" fill="none" stroke="#4a4038" stroke-width="0.8"/>
<circle cx="215.8" cy="1146.2" r="1.2" fill="none" stroke="#4a4038" stroke-width="0.6"/>
<circle cx="214.0" cy="1150.6" r="1.2" fill="none" stroke="#4a4038" stroke-width="0.6"/>
<circle cx="209.6" cy="1152.4" r="1.2" fill="none" stroke="#4a4038" stroke-width="0.6"/>
<circle cx="205.2" cy="1150.6" r="1.2" fill="none" stroke="#4a4038" stroke-width="0.6"/>
<circle cx="203.4" cy="1146.2" r="1.2" fill="none" stroke="#4a4038" stroke-width="0.6"/>
<circle cx="205.2" cy="1141.8" r="1.2" fill="none" stroke="#4a4038" stroke-width="0.6"/>
<circle cx="209.6" cy="1140.0" r="1.2" fill="none" stroke="#4a4038" stroke-width="0.6"/>
<circle cx="214.0" cy="1141.8" r="1.2" fill="none" stroke="#4a4038" stroke-width="0.6"/>
<circle cx="227.3" cy="1146.2" r="4.6" fill="none" stroke="#4a4038" stroke-width="0.8"/>
<circle cx="233.5" cy="1146.2" r="1.2" fill="none" stroke="#4a4038" stroke-width="0.6"/>
<circle cx="231.7" cy="1150.6" r="1.2" fill="none" stroke="#4a4038" stroke-width="0.6"/>
<circle cx="227.3" cy="1152.4" r="1.2" fill="none" stroke="#4a4038" stroke-width="0.6"/>
<circle cx="222.9" cy="1150.6" r="1.2" fill="none" stroke="#4a4038" stroke-width="0.6"/>
<circle cx="221.1" cy="1146.2" r="1.2" fill="none" stroke="#4a4038" stroke-width="0.6"/>
<circle cx="222.9" cy="1141.8" r="1.2" fill="none" stroke="#4a4038" stroke-width="0.6"/>
<circle cx="227.3" cy="1140.0" r="1.2" fill="none" stroke="#4a4038" stroke-width="0.6"/>
<circle cx="231.7" cy="1141.8" r="1.2" fill="none" stroke="#4a4038" stroke-width="0.6"/>
<circle cx="245" cy="1146.2" r="4.6" fill="none" stroke="#4a4038" stroke-width="0.8"/>
<circle cx="251.2" cy="1146.2" r="1.2" fill="none" stroke="#4a4038" stroke-width="0.6"/>
<circle cx="249.4" cy="1150.6" r="1.2" fill="none" stroke="#4a4038" stroke-width="0.6"/>
<circle cx="245.0" cy="1152.4" r="1.2" fill="none" stroke="#4a4038" stroke-width="0.6"/>
<circle cx="240.6" cy="1150.6" r="1.2" fill="none" stroke="#4a4038" stroke-width="0.6"/>
<circle cx="238.8" cy="1146.2" r="1.2" fill="none" stroke="#4a4038" stroke-width="0.6"/>
<circle cx="240.6" cy="1141.8" r="1.2" fill="none" stroke="#4a4038" stroke-width="0.6"/>
<circle cx="245.0" cy="1140.0" r="1.2" fill="none" stroke="#4a4038" stroke-width="0.6"/>
<circle cx="249.4" cy="1141.8" r="1.2" fill="none" stroke="#4a4038" stroke-width="0.6"/>
<circle cx="209.6" cy="1161" r="4.6" fill="none" stroke="#4a4038" stroke-width="0.8"/>
<circle cx="215.8" cy="1161.0" r="1.2" fill="none" stroke="#4a4038" stroke-width="0.6"/>
<circle cx="214.0" cy="1165.4" r="1.2" fill="none" stroke="#4a4038" stroke-width="0.6"/>
<circle cx="209.6" cy="1167.2" r="1.2" fill="none" stroke="#4a4038" stroke-width="0.6"/>
<circle cx="205.2" cy="1165.4" r="1.2" fill="none" stroke="#4a4038" stroke-width="0.6"/>
<circle cx="203.4" cy="1161.0" r="1.2" fill="none" stroke="#4a4038" stroke-width="0.6"/>
<circle cx="205.2" cy="1156.6" r="1.2" fill="none" stroke="#4a4038" stroke-width="0.6"/>
<circle cx="209.6" cy="1154.8" r="1.2" fill="none" stroke="#4a4038" stroke-width="0.6"/>
<circle cx="214.0" cy="1156.6" r="1.2" fill="none" stroke="#4a4038" stroke-width="0.6"/>
<circle cx="245" cy="1161" r="4.6" fill="none" stroke="#4a4038" stroke-width="0.8"/>
<circle cx="251.2" cy="1161.0" r="1.2" fill="none" stroke="#4a4038" stroke-width="0.6"/>
<circle cx="249.4" cy="1165.4" r="1.2" fill="none" stroke="#4a4038" stroke-width="0.6"/>
<circle cx="245.0" cy="1167.2" r="1.2" fill="none" stroke="#4a4038" stroke-width="0.6"/>
<circle cx="240.6" cy="1165.4" r="1.2" fill="none" stroke="#4a4038" stroke-width="0.6"/>
<circle cx="238.8" cy="1161.0" r="1.2" fill="none" stroke="#4a4038" stroke-width="0.6"/>
<circle cx="240.6" cy="1156.6" r="1.2" fill="none" stroke="#4a4038" stroke-width="0.6"/>
<circle cx="245.0" cy="1154.8" r="1.2" fill="none" stroke="#4a4038" stroke-width="0.6"/>
<circle cx="249.4" cy="1156.6" r="1.2" fill="none" stroke="#4a4038" stroke-width="0.6"/>
<circle cx="178" cy="1170" r="4.6" fill="none" stroke="#4a4038" stroke-width="0.8"/>
<circle cx="184.2" cy="1170.0" r="1.2" fill="none" stroke="#4a4038" stroke-width="0.6"/>
<circle cx="182.4" cy="1174.4" r="1.2" fill="none" stroke="#4a4038" stroke-width="0.6"/>
<circle cx="178.0" cy="1176.2" r="1.2" fill="none" stroke="#4a4038" stroke-width="0.6"/>
<circle cx="173.6" cy="1174.4" r="1.2" fill="none" stroke="#4a4038" stroke-width="0.6"/>
<circle cx="171.8" cy="1170.0" r="1.2" fill="none" stroke="#4a4038" stroke-width="0.6"/>
<circle cx="173.6" cy="1165.6" r="1.2" fill="none" stroke="#4a4038" stroke-width="0.6"/>
<circle cx="178.0" cy="1163.8" r="1.2" fill="none" stroke="#4a4038" stroke-width="0.6"/>
<circle cx="182.4" cy="1165.6" r="1.2" fill="none" stroke="#4a4038" stroke-width="0.6"/>
<circle cx="277" cy="1170" r="4.6" fill="none" stroke="#4a4038" stroke-width="0.8"/>
<circle cx="283.2" cy="1170.0" r="1.2" fill="none" stroke="#4a4038" stroke-width="0.6"/>
<circle cx="281.4" cy="1174.4" r="1.2" fill="none" stroke="#4a4038" stroke-width="0.6"/>
<circle cx="277.0" cy="1176.2" r="1.2" fill="none" stroke="#4a4038" stroke-width="0.6"/>
<circle cx="272.6" cy="1174.4" r="1.2" fill="none" stroke="#4a4038" stroke-width="0.6"/>
<circle cx="270.8" cy="1170.0" r="1.2" fill="none" stroke="#4a4038" stroke-width="0.6"/>
<circle cx="272.6" cy="1165.6" r="1.2" fill="none" stroke="#4a4038" stroke-width="0.6"/>
<circle cx="277.0" cy="1163.8" r="1.2" fill="none" stroke="#4a4038" stroke-width="0.6"/>
<circle cx="281.4" cy="1165.6" r="1.2" fill="none" stroke="#4a4038" stroke-width="0.6"/>
<circle cx="183" cy="1184" r="4.6" fill="none" stroke="#4a4038" stroke-width="0.8"/>
<circle cx="189.2" cy="1184.0" r="1.2" fill="none" stroke="#4a4038" stroke-width="0.6"/>
<circle cx="187.4" cy="1188.4" r="1.2" fill="none" stroke="#4a4038" stroke-width="0.6"/>
<circle cx="183.0" cy="1190.2" r="1.2" fill="none" stroke="#4a4038" stroke-width="0.6"/>
<circle cx="178.6" cy="1188.4" r="1.2" fill="none" stroke="#4a4038" stroke-width="0.6"/>
<circle cx="176.8" cy="1184.0" r="1.2" fill="none" stroke="#4a4038" stroke-width="0.6"/>
<circle cx="178.6" cy="1179.6" r="1.2" fill="none" stroke="#4a4038" stroke-width="0.6"/>
<circle cx="183.0" cy="1177.8" r="1.2" fill="none" stroke="#4a4038" stroke-width="0.6"/>
<circle cx="187.4" cy="1179.6" r="1.2" fill="none" stroke="#4a4038" stroke-width="0.6"/>
<circle cx="272" cy="1184" r="4.6" fill="none" stroke="#4a4038" stroke-width="0.8"/>
<circle cx="278.2" cy="1184.0" r="1.2" fill="none" stroke="#4a4038" stroke-width="0.6"/>
<circle cx="276.4" cy="1188.4" r="1.2" fill="none" stroke="#4a4038" stroke-width="0.6"/>
<circle cx="272.0" cy="1190.2" r="1.2" fill="none" stroke="#4a4038" stroke-width="0.6"/>
<circle cx="267.6" cy="1188.4" r="1.2" fill="none" stroke="#4a4038" stroke-width="0.6"/>
<circle cx="265.8" cy="1184.0" r="1.2" fill="none" stroke="#4a4038" stroke-width="0.6"/>
<circle cx="267.6" cy="1179.6" r="1.2" fill="none" stroke="#4a4038" stroke-width="0.6"/>
<circle cx="272.0" cy="1177.8" r="1.2" fill="none" stroke="#4a4038" stroke-width="0.6"/>
<circle cx="276.4" cy="1179.6" r="1.2" fill="none" stroke="#4a4038" stroke-width="0.6"/>
<circle cx="222" cy="1117.7" r="2.6" fill="none" stroke="#4a4038" stroke-width="0.8"/>
<circle cx="232" cy="1117.7" r="2.6" fill="none" stroke="#4a4038" stroke-width="0.8"/>
<circle cx="222" cy="1161" r="2.6" fill="none" stroke="#4a4038" stroke-width="0.8"/>
<circle cx="232" cy="1161" r="2.6" fill="none" stroke="#4a4038" stroke-width="0.8"/>
<path d="M173.2 1132.5H190.9V1156Q190.9 1160 186 1160H178Q173.2 1160 173.2 1156Z" fill="#dcdcdf" stroke="#2b2927" stroke-width="1.5"/>
<path d="M263.7 1132.5H281.4V1156Q281.4 1160 276.5 1160H268.5Q263.7 1160 263.7 1156Z" fill="#dcdcdf" stroke="#2b2927" stroke-width="1.5"/>
<line x1="178" y1="1135" x2="190" y2="1135" stroke="#333" stroke-width="1.2"/>
<line x1="268" y1="1135" x2="280" y2="1135" stroke="#333" stroke-width="1.2"/>
<line x1="178" y1="1138" x2="190" y2="1138" stroke="#333" stroke-width="1.2"/>
<line x1="268" y1="1138" x2="280" y2="1138" stroke="#333" stroke-width="1.2"/>
<line x1="178" y1="1141" x2="190" y2="1141" stroke="#333" stroke-width="1.2"/>
<line x1="268" y1="1141" x2="280" y2="1141" stroke="#333" stroke-width="1.2"/>
<line x1="178" y1="1144" x2="190" y2="1144" stroke="#333" stroke-width="1.2"/>
<line x1="268" y1="1144" x2="280" y2="1144" stroke="#333" stroke-width="1.2"/>
<rect x="186" y="1168.9" width="82.6" height="5.9" fill="none" stroke="#4a4038" stroke-width="0.8"/>
<line x1="187" y1="1169" x2="187" y2="1174.6" stroke="#4a4038" stroke-width="0.5"/>
<line x1="189.9" y1="1169" x2="189.9" y2="1174.6" stroke="#4a4038" stroke-width="0.5"/>
<line x1="192.9" y1="1169" x2="192.9" y2="1174.6" stroke="#4a4038" stroke-width="0.5"/>
<line x1="195.8" y1="1169" x2="195.8" y2="1174.6" stroke="#4a4038" stroke-width="0.5"/>
<line x1="198.8" y1="1169" x2="198.8" y2="1174.6" stroke="#4a4038" stroke-width="0.5"/>
<line x1="201.8" y1="1169" x2="201.8" y2="1174.6" stroke="#4a4038" stroke-width="0.5"/>
<line x1="204.7" y1="1169" x2="204.7" y2="1174.6" stroke="#4a4038" stroke-width="0.5"/>
<line x1="207.7" y1="1169" x2="207.7" y2="1174.6" stroke="#4a4038" stroke-width="0.5"/>
<line x1="210.6" y1="1169" x2="210.6" y2="1174.6" stroke="#4a4038" stroke-width="0.5"/>
<line x1="213.6" y1="1169" x2="213.6" y2="1174.6" stroke="#4a4038" stroke-width="0.5"/>
<line x1="216.5" y1="1169" x2="216.5" y2="1174.6" stroke="#4a4038" stroke-width="0.5"/>
<line x1="219.4" y1="1169" x2="219.4" y2="1174.6" stroke="#4a4038" stroke-width="0.5"/>
<line x1="222.4" y1="1169" x2="222.4" y2="1174.6" stroke="#4a4038" stroke-width="0.5"/>
<line x1="225.3" y1="1169" x2="225.3" y2="1174.6" stroke="#4a4038" stroke-width="0.5"/>
<line x1="228.3" y1="1169" x2="228.3" y2="1174.6" stroke="#4a4038" stroke-width="0.5"/>
<line x1="231.2" y1="1169" x2="231.2" y2="1174.6" stroke="#4a4038" stroke-width="0.5"/>
<line x1="234.2" y1="1169" x2="234.2" y2="1174.6" stroke="#4a4038" stroke-width="0.5"/>
<line x1="237.2" y1="1169" x2="237.2" y2="1174.6" stroke="#4a4038" stroke-width="0.5"/>
<line x1="240.1" y1="1169" x2="240.1" y2="1174.6" stroke="#4a4038" stroke-width="0.5"/>
<line x1="243.1" y1="1169" x2="243.1" y2="1174.6" stroke="#4a4038" stroke-width="0.5"/>
<line x1="246" y1="1169" x2="246" y2="1174.6" stroke="#4a4038" stroke-width="0.5"/>
<line x1="248.9" y1="1169" x2="248.9" y2="1174.6" stroke="#4a4038" stroke-width="0.5"/>
<line x1="251.9" y1="1169" x2="251.9" y2="1174.6" stroke="#4a4038" stroke-width="0.5"/>
<line x1="254.9" y1="1169" x2="254.9" y2="1174.6" stroke="#4a4038" stroke-width="0.5"/>
<line x1="257.8" y1="1169" x2="257.8" y2="1174.6" stroke="#4a4038" stroke-width="0.5"/>
<line x1="260.8" y1="1169" x2="260.8" y2="1174.6" stroke="#4a4038" stroke-width="0.5"/>
<line x1="263.7" y1="1169" x2="263.7" y2="1174.6" stroke="#4a4038" stroke-width="0.5"/>
<line x1="266.6" y1="1169" x2="266.6" y2="1174.6" stroke="#4a4038" stroke-width="0.5"/>
<rect x="190.5" y="1179" width="5" height="4" fill="none" stroke="#4a4038" stroke-width="0.8" rx="1"/>
<rect x="196.5" y="1179" width="5" height="4" fill="none" stroke="#4a4038" stroke-width="0.8" rx="1"/>
<rect x="202.5" y="1179" width="5" height="4" fill="none" stroke="#4a4038" stroke-width="0.8" rx="1"/>
<rect x="215.5" y="1179" width="5" height="4" fill="none" stroke="#4a4038" stroke-width="0.8" rx="1"/>
<rect x="221.5" y="1179" width="5" height="4" fill="none" stroke="#4a4038" stroke-width="0.8" rx="1"/>
<rect x="227.5" y="1179" width="5" height="4" fill="none" stroke="#4a4038" stroke-width="0.8" rx="1"/>
<rect x="240.5" y="1179" width="5" height="4" fill="none" stroke="#4a4038" stroke-width="0.8" rx="1"/>
<rect x="246.5" y="1179" width="5" height="4" fill="none" stroke="#4a4038" stroke-width="0.8" rx="1"/>
<rect x="252.5" y="1179" width="5" height="4" fill="none" stroke="#4a4038" stroke-width="0.8" rx="1"/>
<text x="227.4" y="1191.5" font-size="6.8" fill="#3f3a36" text-anchor="middle" font-weight="400">BLUSH</text>
<text x="227.4" y="1199.3" font-size="6.8" fill="#3f3a36" text-anchor="middle" font-weight="400">DINING ROOM</text>
<path d="M154 870V1172C154 1196.8 186.9 1217 227.4 1217C267.9 1217 300.7 1196.8 300.7 1172V870Z" fill="none" stroke="#2b2927" stroke-width="1.8"/>
<line x1="154" y1="870" x2="154" y2="1051" stroke="#2b2927" stroke-width="1.8"/>
<line x1="300.7" y1="870" x2="300.7" y2="1051" stroke="#2b2927" stroke-width="1.8"/></svg></div>
<div class="exp" style="left:355px;top:825px"><svg width="32" height="32" viewBox="0 0 32 32"><path d="M17.9 6.8H24.8V13.7M24.8 6.8L17.4 14.2M7.4 17.1V23.6H14.4M7.4 23.6L14.4 16.6" fill="none" stroke="#8c8c8c" stroke-width="1.6"/></svg></div>
<div class="card" style="left:443.5px;top:796px;width:347.5px;height:424px"><div style="position:absolute;left:0;right:0;top:87px;height:1.5px;background:#e2e3e3"></div></div>
<div class="t" style="left:472.7px;top:821.7px;font-size:15px;font-weight:700;color:#0d0d0d;transform:scaleX(0.9788);-webkit-text-stroke:0.35px #0d0d0d;">Deck 06 : Main</div>
<div class="t" style="left:472.7px;top:844.0px;font-size:15px;font-weight:400;color:#707070;transform:scaleX(0.9827);">Deck ID : 4024</div>
<div style="position:absolute;left:445.0px;top:885px;width:344.5px;height:333.5px;overflow:hidden;border-radius:0 0 10.5px 10.5px"><svg width="344.5" height="333.5" viewBox="445.0 885 344.5 333.5" style="filter:blur(0.3px)"><rect x="520" y="883" width="176" height="339" fill="#f2e3c5"/>
<rect x="521" y="873.5" width="37.7" height="13.6" fill="#f6a882" stroke="#2b2927" stroke-width="1.5"/>
<rect x="656.8" y="873.5" width="38.3" height="13.6" fill="#f6a882" stroke="#2b2927" stroke-width="1.5"/>
<rect x="521" y="887.1" width="37.7" height="13.6" fill="#f6a882" stroke="#2b2927" stroke-width="1.5"/>
<rect x="656.8" y="887.1" width="38.3" height="13.6" fill="#f6a882" stroke="#2b2927" stroke-width="1.5"/>
<text x="526.8" y="897.6" font-size="10.3" fill="#2b2522" textLength="20.6" lengthAdjust="spacingAndGlyphs">1236</text>
<path d="M550.40 891.60L551.11 893.53L553.16 893.60L551.54 894.87L552.10 896.85L550.40 895.70L548.70 896.85L549.26 894.87L547.64 893.60L549.69 893.53Z" fill="#222"/>
<text x="662.9" y="897.6" font-size="10.3" fill="#2b2522" textLength="20.6" lengthAdjust="spacingAndGlyphs">1239</text>
<path d="M686.50 891.60L687.21 893.53L689.26 893.60L687.64 894.87L688.20 896.85L686.50 895.70L684.80 896.85L685.36 894.87L683.74 893.60L685.79 893.53Z" fill="#222"/>
<rect x="521" y="900.7" width="37.7" height="13.6" fill="#f6a882" stroke="#2b2927" stroke-width="1.5"/>
<rect x="656.8" y="900.7" width="38.3" height="13.6" fill="#f6a882" stroke="#2b2927" stroke-width="1.5"/>
<text x="526.8" y="911.2" font-size="10.3" fill="#2b2522" textLength="20.6" lengthAdjust="spacingAndGlyphs">1238</text>
<path d="M550.40 905.20L551.11 907.13L553.16 907.20L551.54 908.47L552.10 910.45L550.40 909.30L548.70 910.45L549.26 908.47L547.64 907.20L549.69 907.13Z" fill="#222"/>
<text x="662.9" y="911.2" font-size="10.3" fill="#2b2522" textLength="20.6" lengthAdjust="spacingAndGlyphs">1241</text>
<path d="M686.50 905.20L687.21 907.13L689.26 907.20L687.64 908.47L688.20 910.45L686.50 909.30L684.80 910.45L685.36 908.47L683.74 907.20L685.79 907.13Z" fill="#222"/>
<rect x="521" y="914.3" width="37.7" height="13.6" fill="#dcdcdf" stroke="#2b2927" stroke-width="1.5"/>
<rect x="656.8" y="914.3" width="38.3" height="13.6" fill="#dcdcdf" stroke="#2b2927" stroke-width="1.5"/>
<rect x="521" y="927.9" width="37.7" height="13.6" fill="#e8ae22" stroke="#2b2927" stroke-width="1.5"/>
<rect x="656.8" y="927.9" width="38.3" height="13.6" fill="#e8ae22" stroke="#2b2927" stroke-width="1.5"/>
<text x="526.8" y="938.4" font-size="10.3" fill="#2b2522" textLength="20.6" lengthAdjust="spacingAndGlyphs">1240</text>
<path d="M550.40 932.40L551.11 934.33L553.16 934.40L551.54 935.67L552.10 937.65L550.40 936.50L548.70 937.65L549.26 935.67L547.64 934.40L549.69 934.33Z" fill="#222"/>
<text x="662.9" y="938.4" font-size="10.3" fill="#2b2522" textLength="20.6" lengthAdjust="spacingAndGlyphs">1243</text>
<path d="M686.50 932.40L687.21 934.33L689.26 934.40L687.64 935.67L688.20 937.65L686.50 936.50L684.80 937.65L685.36 935.67L683.74 934.40L685.79 934.33Z" fill="#222"/>
<rect x="521" y="941.5" width="37.7" height="13.6" fill="#e8ae22" stroke="#2b2927" stroke-width="1.5"/>
<rect x="656.8" y="941.5" width="38.3" height="13.6" fill="#e8ae22" stroke="#2b2927" stroke-width="1.5"/>
<text x="526.8" y="952.0" font-size="10.3" fill="#2b2522" textLength="20.6" lengthAdjust="spacingAndGlyphs">1242</text>
<path d="M550.40 946.00L551.11 947.93L553.16 948.00L551.54 949.27L552.10 951.25L550.40 950.10L548.70 951.25L549.26 949.27L547.64 948.00L549.69 947.93Z" fill="#222"/>
<text x="662.9" y="952.0" font-size="10.3" fill="#2b2522" textLength="20.6" lengthAdjust="spacingAndGlyphs">1245</text>
<path d="M686.50 946.00L687.21 947.93L689.26 948.00L687.64 949.27L688.20 951.25L686.50 950.10L684.80 951.25L685.36 949.27L683.74 948.00L685.79 947.93Z" fill="#222"/>
<rect x="521" y="955.1" width="37.7" height="13.6" fill="#e8ae22" stroke="#2b2927" stroke-width="1.5"/>
<rect x="656.8" y="955.1" width="38.3" height="13.6" fill="#e8ae22" stroke="#2b2927" stroke-width="1.5"/>
<text x="526.8" y="965.6" font-size="10.3" fill="#2b2522" textLength="20.6" lengthAdjust="spacingAndGlyphs">1244</text>
<path d="M550.40 959.60L551.11 961.53L553.16 961.60L551.54 962.87L552.10 964.85L550.40 963.70L548.70 964.85L549.26 962.87L547.64 961.60L549.69 961.53Z" fill="#222"/>
<text x="662.9" y="965.6" font-size="10.3" fill="#2b2522" textLength="20.6" lengthAdjust="spacingAndGlyphs">1247</text>
<path d="M686.50 959.60L687.21 961.53L689.26 961.60L687.64 962.87L688.20 964.85L686.50 963.70L684.80 964.85L685.36 962.87L683.74 961.60L685.79 961.53Z" fill="#222"/>
<rect x="521" y="968.7" width="37.7" height="13.6" fill="#e8ae22" stroke="#2b2927" stroke-width="1.5"/>
<rect x="656.8" y="968.7" width="38.3" height="13.6" fill="#e8ae22" stroke="#2b2927" stroke-width="1.5"/>
<text x="526.8" y="979.2" font-size="10.3" fill="#2b2522" textLength="20.6" lengthAdjust="spacingAndGlyphs">1246</text>
<path d="M550.40 973.20L551.11 975.13L553.16 975.20L551.54 976.47L552.10 978.45L550.40 977.30L548.70 978.45L549.26 976.47L547.64 975.20L549.69 975.13Z" fill="#222"/>
<text x="662.9" y="979.2" font-size="10.3" fill="#2b2522" textLength="20.6" lengthAdjust="spacingAndGlyphs">1249</text>
<path d="M686.50 973.20L687.21 975.13L689.26 975.20L687.64 976.47L688.20 978.45L686.50 977.30L684.80 978.45L685.36 976.47L683.74 975.20L685.79 975.13Z" fill="#222"/>
<rect x="521" y="982.3" width="37.7" height="13.6" fill="#e8ae22" stroke="#2b2927" stroke-width="1.5"/>
<rect x="656.8" y="982.3" width="38.3" height="13.6" fill="#e8ae22" stroke="#2b2927" stroke-width="1.5"/>
<text x="526.8" y="992.8" font-size="10.3" fill="#2b2522" textLength="20.6" lengthAdjust="spacingAndGlyphs">1248</text>
<path d="M550.40 986.80L551.11 988.73L553.16 988.80L551.54 990.07L552.10 992.05L550.40 990.90L548.70 992.05L549.26 990.07L547.64 988.80L549.69 988.73Z" fill="#222"/>
<text x="662.9" y="992.8" font-size="10.3" fill="#2b2522" textLength="20.6" lengthAdjust="spacingAndGlyphs">1251</text>
<path d="M686.50 986.80L687.21 988.73L689.26 988.80L687.64 990.07L688.20 992.05L686.50 990.90L684.80 992.05L685.36 990.07L683.74 988.80L685.79 988.73Z" fill="#222"/>
<rect x="521" y="995.9" width="37.7" height="13.6" fill="#e8ae22" stroke="#2b2927" stroke-width="1.5"/>
<rect x="656.8" y="995.9" width="38.3" height="13.6" fill="#e8ae22" stroke="#2b2927" stroke-width="1.5"/>
<text x="526.8" y="1006.4" font-size="10.3" fill="#2b2522" textLength="20.6" lengthAdjust="spacingAndGlyphs">1250</text>
<path d="M550.40 1000.40L551.11 1002.33L553.16 1002.40L551.54 1003.67L552.10 1005.65L550.40 1004.50L548.70 1005.65L549.26 1003.67L547.64 1002.40L549.69 1002.33Z" fill="#222"/>
<text x="662.9" y="1006.4" font-size="10.3" fill="#2b2522" textLength="20.6" lengthAdjust="spacingAndGlyphs">1253</text>
<path d="M686.50 1000.40L687.21 1002.33L689.26 1002.40L687.64 1003.67L688.20 1005.65L686.50 1004.50L684.80 1005.65L685.36 1003.67L683.74 1002.40L685.79 1002.33Z" fill="#222"/>
<rect x="521" y="1009.5" width="37.7" height="13.6" fill="#e8ae22" stroke="#2b2927" stroke-width="1.5"/>
<rect x="656.8" y="1009.5" width="38.3" height="13.6" fill="#e8ae22" stroke="#2b2927" stroke-width="1.5"/>
<text x="526.8" y="1020.0" font-size="10.3" fill="#2b2522" textLength="20.6" lengthAdjust="spacingAndGlyphs">1252</text>
<path d="M550.40 1014.00L551.11 1015.93L553.16 1016.00L551.54 1017.27L552.10 1019.25L550.40 1018.10L548.70 1019.25L549.26 1017.27L547.64 1016.00L549.69 1015.93Z" fill="#222"/>
<text x="662.9" y="1020.0" font-size="10.3" fill="#2b2522" textLength="20.6" lengthAdjust="spacingAndGlyphs">1255</text>
<path d="M686.50 1014.00L687.21 1015.93L689.26 1016.00L687.64 1017.27L688.20 1019.25L686.50 1018.10L684.80 1019.25L685.36 1017.27L683.74 1016.00L685.79 1015.93Z" fill="#222"/>
<rect x="521" y="1023.1" width="37.7" height="13.6" fill="#e8ae22" stroke="#2b2927" stroke-width="1.5"/>
<rect x="656.8" y="1023.1" width="38.3" height="13.6" fill="#e8ae22" stroke="#2b2927" stroke-width="1.5"/>
<text x="526.8" y="1033.6" font-size="10.3" fill="#2b2522" textLength="20.6" lengthAdjust="spacingAndGlyphs">1256</text>
<rect x="548.8" y="1028.6" width="3.2" height="3.2" fill="#222"/>
<text x="662.9" y="1033.6" font-size="10.3" fill="#2b2522" textLength="20.6" lengthAdjust="spacingAndGlyphs">1259</text>
<rect x="684.9" y="1028.6" width="3.2" height="3.2" fill="#222"/>
<rect x="521" y="1036.7" width="37.7" height="13.6" fill="#e8ae22" stroke="#2b2927" stroke-width="1.5"/>
<rect x="656.8" y="1036.7" width="38.3" height="13.6" fill="#e8ae22" stroke="#2b2927" stroke-width="1.5"/>
<text x="526.8" y="1047.2" font-size="10.3" fill="#2b2522" textLength="20.6" lengthAdjust="spacingAndGlyphs">1260</text>
<path d="M550.40 1041.20L551.11 1043.13L553.16 1043.20L551.54 1044.47L552.10 1046.45L550.40 1045.30L548.70 1046.45L549.26 1044.47L547.64 1043.20L549.69 1043.13Z" fill="#222"/>
<text x="662.9" y="1047.2" font-size="10.3" fill="#2b2522" textLength="20.6" lengthAdjust="spacingAndGlyphs">1263</text>
<path d="M686.50 1041.20L687.21 1043.13L689.26 1043.20L687.64 1044.47L688.20 1046.45L686.50 1045.30L684.80 1046.45L685.36 1044.47L683.74 1043.20L685.79 1043.13Z" fill="#222"/>
<rect x="521" y="1050.3" width="37.7" height="13.6" fill="#e8ae22" stroke="#2b2927" stroke-width="1.5"/>
<rect x="656.8" y="1050.3" width="38.3" height="13.6" fill="#e8ae22" stroke="#2b2927" stroke-width="1.5"/>
<text x="526.8" y="1060.8" font-size="10.3" fill="#2b2522" textLength="20.6" lengthAdjust="spacingAndGlyphs">1264</text>
<rect x="548.8" y="1055.8" width="3.2" height="3.2" fill="#222"/>
<text x="662.9" y="1060.8" font-size="10.3" fill="#2b2522" textLength="20.6" lengthAdjust="spacingAndGlyphs">1267</text>
<rect x="684.9" y="1055.8" width="3.2" height="3.2" fill="#222"/>
<rect x="521" y="1063.9" width="37.7" height="13.6" fill="#e8ae22" stroke="#2b2927" stroke-width="1.5"/>
<rect x="656.8" y="1063.9" width="38.3" height="13.6" fill="#e8ae22" stroke="#2b2927" stroke-width="1.5"/>
<text x="526.8" y="1074.4" font-size="10.3" fill="#2b2522" textLength="20.6" lengthAdjust="spacingAndGlyphs">1268</text>
<rect x="548.8" y="1069.4" width="3.2" height="3.2" fill="#222"/>
<text x="662.9" y="1074.4" font-size="10.3" fill="#2b2522" textLength="20.6" lengthAdjust="spacingAndGlyphs">1271</text>
<rect x="684.9" y="1069.4" width="3.2" height="3.2" fill="#222"/>
<rect x="521" y="1077.5" width="37.7" height="13.6" fill="#e8ae22" stroke="#2b2927" stroke-width="1.5"/>
<rect x="656.8" y="1077.5" width="38.3" height="13.6" fill="#e8ae22" stroke="#2b2927" stroke-width="1.5"/>
<text x="526.8" y="1088.0" font-size="10.3" fill="#2b2522" textLength="20.6" lengthAdjust="spacingAndGlyphs">1272</text>
<path d="M550.40 1082.00L551.11 1083.93L553.16 1084.00L551.54 1085.27L552.10 1087.25L550.40 1086.10L548.70 1087.25L549.26 1085.27L547.64 1084.00L549.69 1083.93Z" fill="#222"/>
<text x="662.9" y="1088.0" font-size="10.3" fill="#2b2522" textLength="20.6" lengthAdjust="spacingAndGlyphs">1275</text>
<path d="M686.50 1082.00L687.21 1083.93L689.26 1084.00L687.64 1085.27L688.20 1087.25L686.50 1086.10L684.80 1087.25L685.36 1085.27L683.74 1084.00L685.79 1083.93Z" fill="#222"/>
<rect x="521" y="1091.1" width="37.7" height="13.6" fill="#e8ae22" stroke="#2b2927" stroke-width="1.5"/>
<rect x="656.8" y="1091.1" width="38.3" height="13.6" fill="#e8ae22" stroke="#2b2927" stroke-width="1.5"/>
<text x="526.8" y="1101.6" font-size="10.3" fill="#2b2522" textLength="20.6" lengthAdjust="spacingAndGlyphs">1276</text>
<text x="662.9" y="1101.6" font-size="10.3" fill="#2b2522" textLength="20.6" lengthAdjust="spacingAndGlyphs">1279</text>
<rect x="521" y="1104.7" width="37.7" height="13.6" fill="#e8ae22" stroke="#2b2927" stroke-width="1.5"/>
<rect x="656.8" y="1104.7" width="38.3" height="13.6" fill="#e8ae22" stroke="#2b2927" stroke-width="1.5"/>
<text x="526.8" y="1115.2" font-size="10.3" fill="#2b2522" textLength="20.6" lengthAdjust="spacingAndGlyphs">1280</text>
<text x="662.9" y="1115.2" font-size="10.3" fill="#2b2522" textLength="20.6" lengthAdjust="spacingAndGlyphs">1283</text>
<rect x="521" y="1118.3" width="37.7" height="13.6" fill="#e8ae22" stroke="#2b2927" stroke-width="1.5"/>
<rect x="656.8" y="1118.3" width="38.3" height="13.6" fill="#e8ae22" stroke="#2b2927" stroke-width="1.5"/>
<text x="526.8" y="1128.8" font-size="10.3" fill="#2b2522" textLength="20.6" lengthAdjust="spacingAndGlyphs">1284</text>
<text x="662.9" y="1128.8" font-size="10.3" fill="#2b2522" textLength="20.6" lengthAdjust="spacingAndGlyphs">1287</text>
<rect x="521" y="1131.9" width="37.7" height="13.6" fill="#e8ae22" stroke="#2b2927" stroke-width="1.5"/>
<rect x="656.8" y="1131.9" width="38.3" height="13.6" fill="#e8ae22" stroke="#2b2927" stroke-width="1.5"/>
<text x="526.8" y="1142.4" font-size="10.3" fill="#2b2522" textLength="20.6" lengthAdjust="spacingAndGlyphs">1288</text>
<text x="662.9" y="1142.4" font-size="10.3" fill="#2b2522" textLength="20.6" lengthAdjust="spacingAndGlyphs">1291</text>
<rect x="521" y="1145.5" width="37.7" height="13.6" fill="#e8ae22" stroke="#2b2927" stroke-width="1.5"/>
<rect x="656.8" y="1145.5" width="38.3" height="13.6" fill="#e8ae22" stroke="#2b2927" stroke-width="1.5"/>
<text x="526.8" y="1156.0" font-size="10.3" fill="#2b2522" textLength="20.6" lengthAdjust="spacingAndGlyphs">1292</text>
<text x="662.9" y="1156.0" font-size="10.3" fill="#2b2522" textLength="20.6" lengthAdjust="spacingAndGlyphs">1295</text>
<rect x="521" y="1159.1" width="37.7" height="13.6" fill="#e8ae22" stroke="#2b2927" stroke-width="1.5"/>
<rect x="656.8" y="1159.1" width="38.3" height="13.6" fill="#e8ae22" stroke="#2b2927" stroke-width="1.5"/>
<text x="526.8" y="1169.6" font-size="10.3" fill="#2b2522" textLength="20.6" lengthAdjust="spacingAndGlyphs">1296</text>
<text x="662.9" y="1169.6" font-size="10.3" fill="#2b2522" textLength="20.6" lengthAdjust="spacingAndGlyphs">1299</text>
<rect x="684.9" y="1164.6" width="3.2" height="3.2" fill="#222"/>
<rect x="521" y="1172.7" width="37.7" height="13.6" fill="#e8ae22" stroke="#2b2927" stroke-width="1.5"/>
<rect x="656.8" y="1172.7" width="38.3" height="13.6" fill="#e8ae22" stroke="#2b2927" stroke-width="1.5"/>
<text x="526.8" y="1183.2" font-size="10.3" fill="#2b2522" textLength="20.6" lengthAdjust="spacingAndGlyphs">1300</text>
<text x="662.9" y="1183.2" font-size="10.3" fill="#2b2522" textLength="20.6" lengthAdjust="spacingAndGlyphs">1303</text>
<rect x="521" y="1186.3" width="37.7" height="13.6" fill="#e8ae22" stroke="#2b2927" stroke-width="1.5"/>
<rect x="656.8" y="1186.3" width="38.3" height="13.6" fill="#e8ae22" stroke="#2b2927" stroke-width="1.5"/>
<text x="526.8" y="1196.8" font-size="10.3" fill="#2b2522" textLength="20.6" lengthAdjust="spacingAndGlyphs">1304</text>
<text x="662.9" y="1196.8" font-size="10.3" fill="#2b2522" textLength="20.6" lengthAdjust="spacingAndGlyphs">1307</text>
<rect x="521" y="1199.9" width="37.7" height="13.6" fill="#e8ae22" stroke="#2b2927" stroke-width="1.5"/>
<rect x="656.8" y="1199.9" width="38.3" height="13.6" fill="#e8ae22" stroke="#2b2927" stroke-width="1.5"/>
<text x="526.8" y="1210.4" font-size="10.3" fill="#2b2522" textLength="20.6" lengthAdjust="spacingAndGlyphs">1308</text>
<text x="662.9" y="1210.4" font-size="10.3" fill="#2b2522" textLength="20.6" lengthAdjust="spacingAndGlyphs">1311</text>
<rect x="521" y="1213.5" width="37.7" height="13.6" fill="#e8ae22" stroke="#2b2927" stroke-width="1.5"/>
<rect x="656.8" y="1213.5" width="38.3" height="13.6" fill="#e8ae22" stroke="#2b2927" stroke-width="1.5"/>
<text x="526.8" y="1224.0" font-size="10.3" fill="#2b2522" textLength="20.6" lengthAdjust="spacingAndGlyphs">1312</text>
<text x="662.9" y="1224.0" font-size="10.3" fill="#2b2522" textLength="20.6" lengthAdjust="spacingAndGlyphs">1317</text>
<rect x="558.2" y="883.6" width="2.2" height="7" fill="#2b2927"/>
<rect x="558.2" y="897.2" width="2.2" height="7" fill="#2b2927"/>
<rect x="558.2" y="910.8" width="2.2" height="7" fill="#2b2927"/>
<rect x="558.2" y="924.4" width="2.2" height="7" fill="#2b2927"/>
<rect x="558.2" y="938" width="2.2" height="7" fill="#2b2927"/>
<rect x="558.2" y="951.6" width="2.2" height="7" fill="#2b2927"/>
<rect x="558.2" y="965.2" width="2.2" height="7" fill="#2b2927"/>
<rect x="558.2" y="978.8" width="2.2" height="7" fill="#2b2927"/>
<rect x="558.2" y="992.4" width="2.2" height="7" fill="#2b2927"/>
<rect x="558.2" y="1006" width="2.2" height="7" fill="#2b2927"/>
<rect x="558.2" y="1019.6" width="2.2" height="7" fill="#2b2927"/>
<rect x="558.2" y="1033.2" width="2.2" height="7" fill="#2b2927"/>
<rect x="558.2" y="1046.8" width="2.2" height="7" fill="#2b2927"/>
<rect x="558.2" y="1060.4" width="2.2" height="7" fill="#2b2927"/>
<rect x="558.2" y="1074" width="2.2" height="7" fill="#2b2927"/>
<rect x="558.2" y="1087.6" width="2.2" height="7" fill="#2b2927"/>
<rect x="558.2" y="1101.2" width="2.2" height="7" fill="#2b2927"/>
<rect x="558.2" y="1114.8" width="2.2" height="7" fill="#2b2927"/>
<rect x="558.2" y="1128.4" width="2.2" height="7" fill="#2b2927"/>
<rect x="558.2" y="1142" width="2.2" height="7" fill="#2b2927"/>
<rect x="558.2" y="1155.6" width="2.2" height="7" fill="#2b2927"/>
<rect x="558.2" y="1169.2" width="2.2" height="7" fill="#2b2927"/>
<rect x="558.2" y="1182.8" width="2.2" height="7" fill="#2b2927"/>
<rect x="558.2" y="1196.4" width="2.2" height="7" fill="#2b2927"/>
<rect x="558.2" y="1210" width="2.2" height="7" fill="#2b2927"/>
<rect x="558.2" y="1223.6" width="2.2" height="7" fill="#2b2927"/>
<rect x="655.1" y="883.6" width="2.2" height="7" fill="#2b2927"/>
<rect x="655.1" y="897.2" width="2.2" height="7" fill="#2b2927"/>
<rect x="655.1" y="910.8" width="2.2" height="7" fill="#2b2927"/>
<rect x="655.1" y="924.4" width="2.2" height="7" fill="#2b2927"/>
<rect x="655.1" y="938" width="2.2" height="7" fill="#2b2927"/>
<rect x="655.1" y="951.6" width="2.2" height="7" fill="#2b2927"/>
<rect x="655.1" y="965.2" width="2.2" height="7" fill="#2b2927"/>
<rect x="655.1" y="978.8" width="2.2" height="7" fill="#2b2927"/>
<rect x="655.1" y="992.4" width="2.2" height="7" fill="#2b2927"/>
<rect x="655.1" y="1006" width="2.2" height="7" fill="#2b2927"/>
<rect x="655.1" y="1019.6" width="2.2" height="7" fill="#2b2927"/>
<rect x="655.1" y="1033.2" width="2.2" height="7" fill="#2b2927"/>
<rect x="655.1" y="1046.8" width="2.2" height="7" fill="#2b2927"/>
<rect x="655.1" y="1060.4" width="2.2" height="7" fill="#2b2927"/>
<rect x="655.1" y="1074" width="2.2" height="7" fill="#2b2927"/>
<rect x="655.1" y="1087.6" width="2.2" height="7" fill="#2b2927"/>
<rect x="655.1" y="1101.2" width="2.2" height="7" fill="#2b2927"/>
<rect x="655.1" y="1114.8" width="2.2" height="7" fill="#2b2927"/>
<rect x="655.1" y="1128.4" width="2.2" height="7" fill="#2b2927"/>
<rect x="655.1" y="1142" width="2.2" height="7" fill="#2b2927"/>
<rect x="655.1" y="1155.6" width="2.2" height="7" fill="#2b2927"/>
<rect x="655.1" y="1169.2" width="2.2" height="7" fill="#2b2927"/>
<rect x="655.1" y="1182.8" width="2.2" height="7" fill="#2b2927"/>
<rect x="655.1" y="1196.4" width="2.2" height="7" fill="#2b2927"/>
<rect x="655.1" y="1210" width="2.2" height="7" fill="#2b2927"/>
<rect x="655.1" y="1223.6" width="2.2" height="7" fill="#2b2927"/>
<line x1="520.4" y1="883" x2="520.4" y2="1222" stroke="#2b2927" stroke-width="1.8"/>
<line x1="695.8" y1="883" x2="695.8" y2="1222" stroke="#2b2927" stroke-width="1.8"/>
<rect x="568.3" y="873" width="78.9" height="26.9" fill="#dcdcdf" stroke="#2b2927" stroke-width="1.4"/>
<rect x="582.3" y="901.4" width="51.6" height="16.9" fill="#f2e3c5" stroke="#2b2927" stroke-width="1.4"/>
<rect x="583.5" y="905" width="11.6" height="11.5" fill="#7d7366"/>
<line x1="583.5" y1="907.5" x2="595.1" y2="907.5" stroke="#e8dcc0" stroke-width="0.8"/>
<line x1="583.5" y1="910.7" x2="595.1" y2="910.7" stroke="#e8dcc0" stroke-width="0.8"/>
<line x1="583.5" y1="913.9" x2="595.1" y2="913.9" stroke="#e8dcc0" stroke-width="0.8"/>
<rect x="596.1" y="905" width="11.6" height="11.5" fill="#7d7366"/>
<line x1="596.1" y1="907.5" x2="607.7" y2="907.5" stroke="#e8dcc0" stroke-width="0.8"/>
<line x1="596.1" y1="910.7" x2="607.7" y2="910.7" stroke="#e8dcc0" stroke-width="0.8"/>
<line x1="596.1" y1="913.9" x2="607.7" y2="913.9" stroke="#e8dcc0" stroke-width="0.8"/>
<rect x="608.7" y="905" width="11.6" height="11.5" fill="#7d7366"/>
<line x1="608.7" y1="907.5" x2="620.3" y2="907.5" stroke="#e8dcc0" stroke-width="0.8"/>
<line x1="608.7" y1="910.7" x2="620.3" y2="910.7" stroke="#e8dcc0" stroke-width="0.8"/>
<line x1="608.7" y1="913.9" x2="620.3" y2="913.9" stroke="#e8dcc0" stroke-width="0.8"/>
<rect x="621.3" y="905" width="11.6" height="11.5" fill="#7d7366"/>
<line x1="621.3" y1="907.5" x2="632.9" y2="907.5" stroke="#e8dcc0" stroke-width="0.8"/>
<line x1="621.3" y1="910.7" x2="632.9" y2="910.7" stroke="#e8dcc0" stroke-width="0.8"/>
<line x1="621.3" y1="913.9" x2="632.9" y2="913.9" stroke="#e8dcc0" stroke-width="0.8"/>
<line x1="569.5" y1="907" x2="569.5" y2="920" stroke="#2b2927" stroke-width="1.6"/>
<line x1="646.5" y1="907" x2="646.5" y2="920" stroke="#2b2927" stroke-width="1.6"/>
<rect x="568.3" y="927.6" width="30.2" height="46.8" fill="#dcdcdf" stroke="#2b2927" stroke-width="1.5"/>
<rect x="617" y="927.6" width="30.2" height="46.8" fill="#dcdcdf" stroke="#2b2927" stroke-width="1.5"/>
<rect x="580.5" y="927.9" width="17" height="15.5" fill="#f0a3cb" stroke="#2b2927" stroke-width="1.5"/>
<text x="589" y="938.9" font-size="8.6" fill="#4a3440" text-anchor="middle" font-weight="400">EL</text>
<rect x="618" y="927.9" width="17" height="15.5" fill="#f0a3cb" stroke="#2b2927" stroke-width="1.5"/>
<text x="626.5" y="938.9" font-size="8.6" fill="#4a3440" text-anchor="middle" font-weight="400">EL</text>
<rect x="580.5" y="943.4" width="17" height="15.5" fill="#f0a3cb" stroke="#2b2927" stroke-width="1.5"/>
<text x="589" y="954.4" font-size="8.6" fill="#4a3440" text-anchor="middle" font-weight="400">EL</text>
<rect x="618" y="943.4" width="17" height="15.5" fill="#f0a3cb" stroke="#2b2927" stroke-width="1.5"/>
<text x="626.5" y="954.4" font-size="8.6" fill="#4a3440" text-anchor="middle" font-weight="400">EL</text>
<rect x="580.5" y="958.9" width="17" height="15.5" fill="#f0a3cb" stroke="#2b2927" stroke-width="1.5"/>
<text x="589" y="969.9" font-size="8.6" fill="#4a3440" text-anchor="middle" font-weight="400">EL</text>
<rect x="618" y="958.9" width="17" height="15.5" fill="#f0a3cb" stroke="#2b2927" stroke-width="1.5"/>
<text x="626.5" y="969.9" font-size="8.6" fill="#4a3440" text-anchor="middle" font-weight="400">EL</text>
<path d="M568.3 1009.8V995H647.2V1009.8H616.2V1222H598.5V1009.8Z" fill="#dcdcdf" stroke="#2b2927" stroke-width="1.5"/>
<rect x="568.3" y="1009.8" width="30.2" height="13.6" fill="#fde1ea" stroke="#2b2927" stroke-width="1.5"/>
<rect x="616.2" y="1009.8" width="31" height="13.6" fill="#fde1ea" stroke="#2b2927" stroke-width="1.5"/>
<text x="569.7" y="1020.3" font-size="10.3" fill="#2b2522" textLength="20.6" lengthAdjust="spacingAndGlyphs">1254</text>
<text x="618.8" y="1020.3" font-size="10.3" fill="#2b2522" textLength="20.6" lengthAdjust="spacingAndGlyphs">1257</text>
<rect x="568.3" y="1023.4" width="30.2" height="13.6" fill="#fde1ea" stroke="#2b2927" stroke-width="1.5"/>
<rect x="616.2" y="1023.4" width="31" height="13.6" fill="#fde1ea" stroke="#2b2927" stroke-width="1.5"/>
<text x="569.7" y="1033.9" font-size="10.3" fill="#2b2522" textLength="20.6" lengthAdjust="spacingAndGlyphs">1258</text>
<circle cx="593.3" cy="1030.5" r="1.1" fill="#222"/>
<text x="618.8" y="1033.9" font-size="10.3" fill="#2b2522" textLength="20.6" lengthAdjust="spacingAndGlyphs">1261</text>
<circle cx="642.4" cy="1030.5" r="1.1" fill="#222"/>
<rect x="568.3" y="1037" width="30.2" height="13.6" fill="#fde1ea" stroke="#2b2927" stroke-width="1.5"/>
<rect x="616.2" y="1037" width="31" height="13.6" fill="#fde1ea" stroke="#2b2927" stroke-width="1.5"/>
<text x="569.7" y="1047.5" font-size="10.3" fill="#2b2522" textLength="20.6" lengthAdjust="spacingAndGlyphs">1262</text>
<text x="618.8" y="1047.5" font-size="10.3" fill="#2b2522" textLength="20.6" lengthAdjust="spacingAndGlyphs">1265</text>
<rect x="568.3" y="1050.6" width="30.2" height="13.6" fill="#fde1ea" stroke="#2b2927" stroke-width="1.5"/>
<rect x="616.2" y="1050.6" width="31" height="13.6" fill="#fde1ea" stroke="#2b2927" stroke-width="1.5"/>
<text x="569.7" y="1061.1" font-size="10.3" fill="#2b2522" textLength="20.6" lengthAdjust="spacingAndGlyphs">1266</text>
<circle cx="593.3" cy="1055.9" r="1" fill="#222"/><circle cx="593.3" cy="1059.5" r="1" fill="#222"/>
<text x="618.8" y="1061.1" font-size="10.3" fill="#2b2522" textLength="20.6" lengthAdjust="spacingAndGlyphs">1269</text>
<circle cx="642.4" cy="1055.9" r="1" fill="#222"/><circle cx="642.4" cy="1059.5" r="1" fill="#222"/>
<rect x="568.3" y="1064.2" width="30.2" height="13.6" fill="#fde1ea" stroke="#2b2927" stroke-width="1.5"/>
<rect x="616.2" y="1064.2" width="31" height="13.6" fill="#fde1ea" stroke="#2b2927" stroke-width="1.5"/>
<text x="569.7" y="1074.7" font-size="10.3" fill="#2b2522" textLength="20.6" lengthAdjust="spacingAndGlyphs">1270</text>
<text x="618.8" y="1074.7" font-size="10.3" fill="#2b2522" textLength="20.6" lengthAdjust="spacingAndGlyphs">1273</text>
<rect x="568.3" y="1077.8" width="30.2" height="13.6" fill="#fde1ea" stroke="#2b2927" stroke-width="1.5"/>
<rect x="616.2" y="1077.8" width="31" height="13.6" fill="#fde1ea" stroke="#2b2927" stroke-width="1.5"/>
<text x="569.7" y="1088.3" font-size="10.3" fill="#2b2522" textLength="20.6" lengthAdjust="spacingAndGlyphs">1274</text>
<text x="618.8" y="1088.3" font-size="10.3" fill="#2b2522" textLength="20.6" lengthAdjust="spacingAndGlyphs">1277</text>
<rect x="568.3" y="1091.4" width="30.2" height="13.6" fill="#fde1ea" stroke="#2b2927" stroke-width="1.5"/>
<rect x="616.2" y="1091.4" width="31" height="13.6" fill="#fde1ea" stroke="#2b2927" stroke-width="1.5"/>
<text x="569.7" y="1101.9" font-size="10.3" fill="#2b2522" textLength="20.6" lengthAdjust="spacingAndGlyphs">1278</text>
<text x="618.8" y="1101.9" font-size="10.3" fill="#2b2522" textLength="20.6" lengthAdjust="spacingAndGlyphs">1281</text>
<rect x="568.3" y="1105" width="30.2" height="13.6" fill="#fde1ea" stroke="#2b2927" stroke-width="1.5"/>
<rect x="616.2" y="1105" width="31" height="13.6" fill="#fde1ea" stroke="#2b2927" stroke-width="1.5"/>
<text x="569.7" y="1115.5" font-size="10.3" fill="#2b2522" textLength="20.6" lengthAdjust="spacingAndGlyphs">1282</text>
<text x="618.8" y="1115.5" font-size="10.3" fill="#2b2522" textLength="20.6" lengthAdjust="spacingAndGlyphs">1285</text>
<rect x="568.3" y="1118.6" width="30.2" height="13.6" fill="#fde1ea" stroke="#2b2927" stroke-width="1.5"/>
<rect x="616.2" y="1118.6" width="31" height="13.6" fill="#fde1ea" stroke="#2b2927" stroke-width="1.5"/>
<text x="569.7" y="1129.1" font-size="10.3" fill="#2b2522" textLength="20.6" lengthAdjust="spacingAndGlyphs">1286</text>
<text x="618.8" y="1129.1" font-size="10.3" fill="#2b2522" textLength="20.6" lengthAdjust="spacingAndGlyphs">1289</text>
<rect x="568.3" y="1132.2" width="30.2" height="13.6" fill="#fde1ea" stroke="#2b2927" stroke-width="1.5"/>
<rect x="616.2" y="1132.2" width="31" height="13.6" fill="#fde1ea" stroke="#2b2927" stroke-width="1.5"/>
<text x="569.7" y="1142.7" font-size="10.3" fill="#2b2522" textLength="20.6" lengthAdjust="spacingAndGlyphs">1290</text>
<text x="618.8" y="1142.7" font-size="10.3" fill="#2b2522" textLength="20.6" lengthAdjust="spacingAndGlyphs">1293</text>
<rect x="568.3" y="1145.8" width="30.2" height="13.6" fill="#fde1ea" stroke="#2b2927" stroke-width="1.5"/>
<rect x="616.2" y="1145.8" width="31" height="13.6" fill="#fde1ea" stroke="#2b2927" stroke-width="1.5"/>
<text x="569.7" y="1156.3" font-size="10.3" fill="#2b2522" textLength="20.6" lengthAdjust="spacingAndGlyphs">1294</text>
<text x="618.8" y="1156.3" font-size="10.3" fill="#2b2522" textLength="20.6" lengthAdjust="spacingAndGlyphs">1297</text>
<rect x="568.3" y="1159.4" width="30.2" height="13.6" fill="#fde1ea" stroke="#2b2927" stroke-width="1.5"/>
<rect x="616.2" y="1159.4" width="31" height="13.6" fill="#fde1ea" stroke="#2b2927" stroke-width="1.5"/>
<text x="569.7" y="1169.9" font-size="10.3" fill="#2b2522" textLength="20.6" lengthAdjust="spacingAndGlyphs">1298</text>
<text x="618.8" y="1169.9" font-size="10.3" fill="#2b2522" textLength="20.6" lengthAdjust="spacingAndGlyphs">1301</text>
<rect x="568.3" y="1173" width="30.2" height="13.6" fill="#fde1ea" stroke="#2b2927" stroke-width="1.5"/>
<rect x="616.2" y="1173" width="31" height="13.6" fill="#fde1ea" stroke="#2b2927" stroke-width="1.5"/>
<text x="569.7" y="1183.5" font-size="10.3" fill="#2b2522" textLength="20.6" lengthAdjust="spacingAndGlyphs">1302</text>
<text x="618.8" y="1183.5" font-size="10.3" fill="#2b2522" textLength="20.6" lengthAdjust="spacingAndGlyphs">1305</text>
<rect x="568.3" y="1186.6" width="30.2" height="13.6" fill="#fde1ea" stroke="#2b2927" stroke-width="1.5"/>
<rect x="616.2" y="1186.6" width="31" height="13.6" fill="#fde1ea" stroke="#2b2927" stroke-width="1.5"/>
<text x="569.7" y="1197.1" font-size="10.3" fill="#2b2522" textLength="20.6" lengthAdjust="spacingAndGlyphs">1306</text>
<text x="618.8" y="1197.1" font-size="10.3" fill="#2b2522" textLength="20.6" lengthAdjust="spacingAndGlyphs">1309</text>
<rect x="568.3" y="1200.2" width="30.2" height="13.6" fill="#fde1ea" stroke="#2b2927" stroke-width="1.5"/>
<rect x="616.2" y="1200.2" width="31" height="13.6" fill="#fde1ea" stroke="#2b2927" stroke-width="1.5"/>
<text x="569.7" y="1210.7" font-size="10.3" fill="#2b2522" textLength="20.6" lengthAdjust="spacingAndGlyphs">1310</text>
<text x="618.8" y="1210.7" font-size="10.3" fill="#2b2522" textLength="20.6" lengthAdjust="spacingAndGlyphs">1315</text>
<rect x="568.3" y="1213.8" width="30.2" height="13.6" fill="#fde1ea" stroke="#2b2927" stroke-width="1.5"/>
<rect x="616.2" y="1213.8" width="31" height="13.6" fill="#fde1ea" stroke="#2b2927" stroke-width="1.5"/>
<text x="569.7" y="1224.3" font-size="10.3" fill="#2b2522" textLength="20.6" lengthAdjust="spacingAndGlyphs">1314</text>
<text x="618.8" y="1224.3" font-size="10.3" fill="#2b2522" textLength="20.6" lengthAdjust="spacingAndGlyphs">1319</text>
<rect x="566.8" y="1020.4" width="2" height="6" fill="#2b2927"/>
<rect x="566.8" y="1034" width="2" height="6" fill="#2b2927"/>
<rect x="566.8" y="1047.6" width="2" height="6" fill="#2b2927"/>
<rect x="566.8" y="1061.2" width="2" height="6" fill="#2b2927"/>
<rect x="566.8" y="1074.8" width="2" height="6" fill="#2b2927"/>
<rect x="566.8" y="1088.4" width="2" height="6" fill="#2b2927"/>
<rect x="566.8" y="1102" width="2" height="6" fill="#2b2927"/>
<rect x="566.8" y="1115.6" width="2" height="6" fill="#2b2927"/>
<rect x="566.8" y="1129.2" width="2" height="6" fill="#2b2927"/>
<rect x="566.8" y="1142.8" width="2" height="6" fill="#2b2927"/>
<rect x="566.8" y="1156.4" width="2" height="6" fill="#2b2927"/>
<rect x="566.8" y="1170" width="2" height="6" fill="#2b2927"/>
<rect x="566.8" y="1183.6" width="2" height="6" fill="#2b2927"/>
<rect x="566.8" y="1197.2" width="2" height="6" fill="#2b2927"/>
<rect x="566.8" y="1210.8" width="2" height="6" fill="#2b2927"/>
<rect x="646.7" y="1020.4" width="2" height="6" fill="#2b2927"/>
<rect x="646.7" y="1034" width="2" height="6" fill="#2b2927"/>
<rect x="646.7" y="1047.6" width="2" height="6" fill="#2b2927"/>
<rect x="646.7" y="1061.2" width="2" height="6" fill="#2b2927"/>
<rect x="646.7" y="1074.8" width="2" height="6" fill="#2b2927"/>
<rect x="646.7" y="1088.4" width="2" height="6" fill="#2b2927"/>
<rect x="646.7" y="1102" width="2" height="6" fill="#2b2927"/>
<rect x="646.7" y="1115.6" width="2" height="6" fill="#2b2927"/>
<rect x="646.7" y="1129.2" width="2" height="6" fill="#2b2927"/>
<rect x="646.7" y="1142.8" width="2" height="6" fill="#2b2927"/>
<rect x="646.7" y="1156.4" width="2" height="6" fill="#2b2927"/>
<rect x="646.7" y="1170" width="2" height="6" fill="#2b2927"/>
<rect x="646.7" y="1183.6" width="2" height="6" fill="#2b2927"/>
<rect x="646.7" y="1197.2" width="2" height="6" fill="#2b2927"/>
<rect x="646.7" y="1210.8" width="2" height="6" fill="#2b2927"/></svg></div>
<div class="exp" style="left:730.5px;top:825px"><svg width="32" height="32" viewBox="0 0 32 32"><path d="M17.9 6.8H24.8V13.7M24.8 6.8L17.4 14.2M7.4 17.1V23.6H14.4M7.4 23.6L14.4 16.6" fill="none" stroke="#8c8c8c" stroke-width="1.6"/></svg></div>
<div style="position:absolute;left:397.6px;top:519.7px;width:7px;height:69.1px;border-radius:3.5px;background:#d5d5d5"></div>
<div style="position:absolute;left:773.2px;top:457px;width:7px;height:69.0px;border-radius:3.5px;background:#d5d5d5"></div>
<div style="position:absolute;left:1148.7px;top:636.7px;width:7px;height:69.1px;border-radius:3.5px;background:#d5d5d5"></div>
<div style="position:absolute;left:1523.7px;top:680.8px;width:7px;height:68.2px;border-radius:3.5px;background:#d5d5d5"></div>
<div style="position:absolute;left:397.6px;top:1120.2px;width:7px;height:68.5px;border-radius:3.5px;background:#d5d5d5"></div>
<div style="position:absolute;left:773.2px;top:910.6px;width:7px;height:68.9px;border-radius:3.5px;background:#d5d5d5"></div>
</div></body></html>
